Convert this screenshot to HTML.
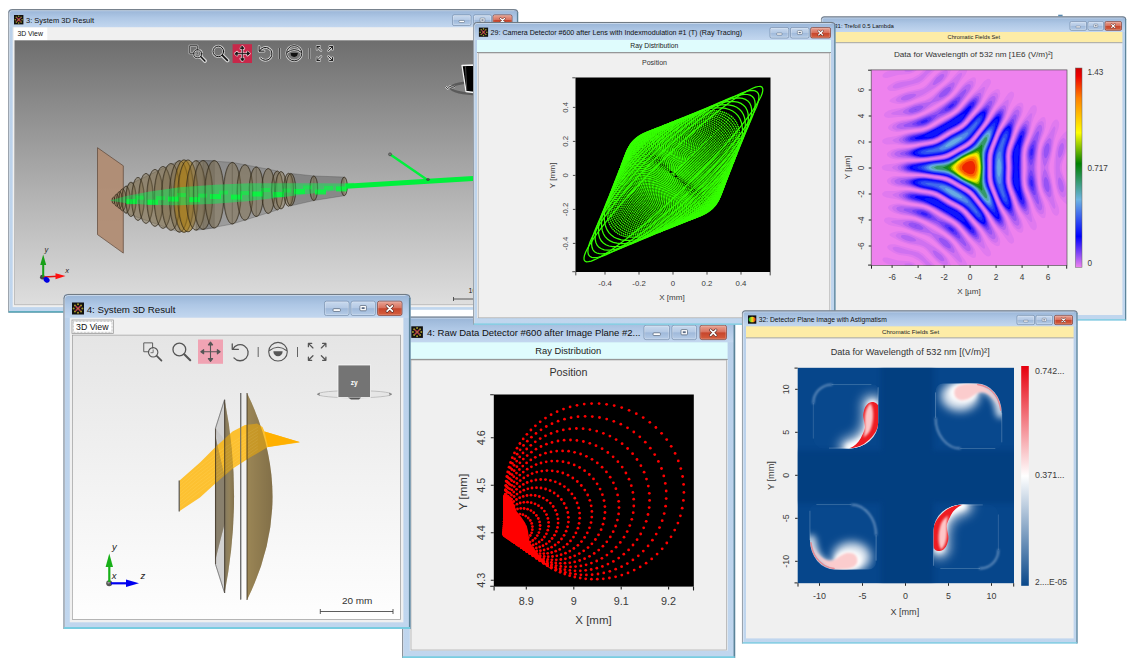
<!DOCTYPE html>
<html><head><meta charset="utf-8"><title>Optical simulation results</title>
<style>html,body{margin:0;padding:0;background:#fff;overflow:hidden}svg{display:block}text{font-family:"Liberation Sans",sans-serif}</style>
</head><body>
<svg width="1134" height="666" viewBox="0 0 1134 666" font-family="Liberation Sans, sans-serif">
<defs>
<filter id="sh" x="-10%" y="-10%" width="120%" height="120%"><feGaussianBlur stdDeviation="2.2"/></filter>
<filter id="b07" x="-1" y="-1" width="3" height="3"><feGaussianBlur stdDeviation="0.7"/></filter>
<filter id="b04" x="-1" y="-1" width="3" height="3"><feGaussianBlur stdDeviation="0.4"/></filter>
<filter id="b1" x="-1" y="-1" width="3" height="3"><feGaussianBlur stdDeviation="1"/></filter>
<filter id="b2" x="-1" y="-1" width="3" height="3"><feGaussianBlur stdDeviation="2"/></filter>
<filter id="b3" x="-1" y="-1" width="3" height="3"><feGaussianBlur stdDeviation="3.2"/></filter>
<filter id="b5" x="-1" y="-1" width="3" height="3"><feGaussianBlur stdDeviation="5"/></filter>
<linearGradient id="icg" x1="0" y1="0" x2="1" y2="0"><stop offset="0" stop-color="#10b020"/><stop offset="0.5" stop-color="#f0e020"/><stop offset="1" stop-color="#e82010"/></linearGradient>
<linearGradient id="glass" x1="0" y1="0" x2="0" y2="1"><stop offset="0" stop-color="#b9d0ea"/><stop offset="1" stop-color="#c0d6ee"/></linearGradient>
<linearGradient id="tg" x1="0" y1="0" x2="0" y2="1"><stop offset="0" stop-color="#98b4d6"/><stop offset="0.45" stop-color="#aec7e5"/><stop offset="1" stop-color="#c3d7ef"/></linearGradient>
<linearGradient id="btn" x1="0" y1="0" x2="0" y2="1"><stop offset="0" stop-color="#c9daef"/><stop offset="0.48" stop-color="#b4c9e4"/><stop offset="0.52" stop-color="#9fb9da"/><stop offset="1" stop-color="#b7cde8"/></linearGradient>
<linearGradient id="cls" x1="0" y1="0" x2="0" y2="1"><stop offset="0" stop-color="#e9a596"/><stop offset="0.48" stop-color="#d8705c"/><stop offset="0.52" stop-color="#c6452c"/><stop offset="1" stop-color="#d6603f"/></linearGradient>
<linearGradient id="v1" x1="0" y1="0" x2="0" y2="1"><stop offset="0" stop-color="#6e6e6e"/><stop offset="0.25" stop-color="#8c8c8c"/><stop offset="0.6" stop-color="#b4b4b4"/><stop offset="1" stop-color="#dedede"/></linearGradient>
<linearGradient id="v2" x1="0" y1="0" x2="0" y2="1"><stop offset="0" stop-color="#e5e5e5"/><stop offset="0.5" stop-color="#f2f2f2"/><stop offset="1" stop-color="#fefefe"/></linearGradient>
</defs>
<path d="M8.2 312.4 V12.2 a3 3 0 0 1 3 -3 H515.2 a3 3 0 0 1 3 3 V312.4 z" fill="url(#glass)"/>
<path d="M8.7 27.2 V12.6 a3 3 0 0 1 3 -3 H514.6 a3 3 0 0 1 3 3 V27.2 z" fill="url(#tg)"/>
<path d="M9.4 310.9 V13.2 a2.5 2.5 0 0 1 2.5 -2.5 H514.2" fill="none" stroke="#fff" stroke-opacity=".55" stroke-width=".8"/>
<path d="M8.65 12.65 a3 3 0 0 1 3 -3 H514.75 a3 3 0 0 1 3 3" fill="none" stroke="#686d74" stroke-width="0.9"/>
<path d="M8.65 12.2 V312.4" stroke="#8d939a" stroke-width="0.9" fill="none"/>
<path d="M517.55 12.2 V312.4" stroke="#5b8398" stroke-width="1.3" fill="none"/>
<path d="M8.7 311.7 H517.7" stroke="#78cce0" stroke-width="1.4" fill="none"/>
<line x1="8.5" y1="312.05" x2="517.9" y2="312.05" stroke="#2d6573" stroke-width="0.7" />
<rect x="14" y="15" width="9.4" height="9.4" fill="#111" />
<circle cx="22.08" cy="19.7" r="0.8" fill="#a89a2c"/>
<circle cx="21.09" cy="22.09" r="0.8" fill="#a89a2c"/>
<circle cx="18.7" cy="23.08" r="0.8" fill="#a89a2c"/>
<circle cx="16.31" cy="22.09" r="0.8" fill="#a89a2c"/>
<circle cx="15.32" cy="19.7" r="0.8" fill="#a89a2c"/>
<circle cx="16.31" cy="17.31" r="0.8" fill="#a89a2c"/>
<circle cx="18.7" cy="16.32" r="0.8" fill="#a89a2c"/>
<circle cx="21.09" cy="17.31" r="0.8" fill="#a89a2c"/>
<path d="M16.82 17.82L20.58 21.58M20.58 17.82L16.82 21.58" stroke="#b03a48" stroke-width="1.32"/>
<circle cx="18.7" cy="19.7" r="0.66" fill="#a89a2c"/>
<text x="26" y="23.3" font-size="7.6" fill="#111" textLength="68" lengthAdjust="spacingAndGlyphs" >3: System 3D Result</text>
<rect x="452.5" y="14.9" width="18.5" height="10.6" rx="1.6" fill="url(#btn)" stroke="#6f87a6" stroke-width="0.7"/>
<rect x="453.2" y="15.6" width="17.1" height="9.2" rx="1.12" fill="none" stroke="#fff" stroke-opacity=".6" stroke-width="0.5"/>
<rect x="459.03" y="20.45" width="5.44" height="2.04" rx="0.68" fill="#fff" stroke="#4a5a70" stroke-width="0.51"/>
<rect x="473.5" y="14.9" width="18" height="10.6" rx="1.6" fill="url(#btn)" stroke="#6f87a6" stroke-width="0.7"/>
<rect x="474.2" y="15.6" width="16.6" height="9.2" rx="1.12" fill="none" stroke="#fff" stroke-opacity=".6" stroke-width="0.5"/>
<rect x="480.12" y="18.07" width="4.76" height="3.91" rx="0.68" fill="#fff" stroke="#4a5a70" stroke-width="0.51"/>
<rect x="481.39" y="19.35" width="2.21" height="1.36" fill="#5a6a85"/>
<rect x="493" y="14.9" width="19" height="10.6" rx="1.6" fill="url(#cls)" stroke="#7a3a30" stroke-width="0.7"/>
<rect x="493.7" y="15.6" width="17.6" height="9.2" rx="1.12" fill="none" stroke="#fff" stroke-opacity=".45" stroke-width="0.5"/>
<path d="M500.55 18.45L504.45 22.35M504.45 18.45L500.55 22.35" stroke="#5a2a25" stroke-width="2.21" stroke-linecap="round"/>
<path d="M500.55 18.45L504.45 22.35M504.45 18.45L500.55 22.35" stroke="#fff" stroke-width="1.27" stroke-linecap="round"/>
<rect x="12.7" y="27.2" width="501" height="279.9" fill="#f0f0f0" />
<rect x="14" y="27.6" width="33.3" height="13.2" fill="#fff" />
<text x="17.4" y="36.1" font-size="7" fill="#111" textLength="25.5" lengthAdjust="spacingAndGlyphs" >3D View</text>
<rect x="14.4" y="40.2" width="497.7" height="264.9" fill="#9a9a9a" />
<rect x="14.9" y="40.7" width="496.7" height="263.9" fill="url(#v1)" />
<clipPath id="c1"><rect x="14.9" y="40.7" width="496.7" height="263.9"/></clipPath><g clip-path="url(#c1)">
<path d="M97.5 147.7L123.3 165.8V253.1L97.5 234.6z" fill="#b08c72" fill-opacity=".93" stroke="#5c4536" stroke-width="0.7"/>
<path d="M196 160.6L214.3 160.49L214.3 228.09L196 230.2z" fill="#6a6a6a" fill-opacity="0.5" stroke="#3c3c3c" stroke-opacity=".55" stroke-width="0.5"/>
<path d="M203 160.47L232.3 162.4L232.3 224L203 229.47z" fill="#6a6a6a" fill-opacity="0.4" stroke="#3c3c3c" stroke-opacity=".55" stroke-width="0.5"/>
<path d="M232.3 162.4L256.3 166.94L256.3 216.54L232.3 224z" fill="#6a6a6a" fill-opacity="0.4" stroke="#3c3c3c" stroke-opacity=".55" stroke-width="0.5"/>
<path d="M256.3 166.94L277.3 170.97L277.3 209.97L256.3 216.54z" fill="#6a6a6a" fill-opacity="0.4" stroke="#3c3c3c" stroke-opacity=".55" stroke-width="0.5"/>
<path d="M290.8 173.45L313.8 175.95L313.8 200.55L290.8 205.85z" fill="#666" fill-opacity="0.55" stroke="#3c3c3c" stroke-opacity=".55" stroke-width="0.5"/>
<path d="M313.8 175.95L344.2 177.11L344.2 195.71L313.8 200.55z" fill="#666" fill-opacity="0.55" stroke="#3c3c3c" stroke-opacity=".55" stroke-width="0.5"/>
<path d="M126 186.04L179.5 160.6L179.5 232.2L126 213.24z" fill="#7a6a4a" fill-opacity="0.3" stroke="#3c3c3c" stroke-opacity=".55" stroke-width="0.5"/>
<ellipse cx="113.5" cy="200.4" rx="1.46" ry="3.2" fill="#7e6e4a" fill-opacity="0.46" stroke="#2a2215" stroke-opacity=".9" stroke-width="0.65"/>
<ellipse cx="116.5" cy="200.22" rx="2.22" ry="6" fill="#7e6e4a" fill-opacity="0.46" stroke="#2a2215" stroke-opacity=".9" stroke-width="0.65"/>
<ellipse cx="119.5" cy="200.04" rx="2.9" ry="8.5" fill="#7e6e4a" fill-opacity="0.46" stroke="#2a2215" stroke-opacity=".9" stroke-width="0.65"/>
<ellipse cx="122.5" cy="199.85" rx="3.57" ry="11" fill="#7e6e4a" fill-opacity="0.46" stroke="#2a2215" stroke-opacity=".9" stroke-width="0.65"/>
<ellipse cx="126" cy="199.64" rx="4.27" ry="13.6" fill="#7e6e4a" fill-opacity="0.46" stroke="#2a2215" stroke-opacity=".9" stroke-width="0.65"/>
<ellipse cx="131" cy="199.34" rx="5.27" ry="17.3" fill="#7e6e4a" fill-opacity="0.46" stroke="#2a2215" stroke-opacity=".9" stroke-width="0.65"/>
<ellipse cx="138" cy="198.91" rx="6.41" ry="21.5" fill="#7e6e4a" fill-opacity="0.46" stroke="#2a2215" stroke-opacity=".9" stroke-width="0.65"/>
<ellipse cx="146" cy="198.43" rx="7.35" ry="25" fill="#7e6e4a" fill-opacity="0.46" stroke="#2a2215" stroke-opacity=".9" stroke-width="0.65"/>
<ellipse cx="155" cy="197.88" rx="8.29" ry="28.5" fill="#7e6e4a" fill-opacity="0.46" stroke="#2a2215" stroke-opacity=".9" stroke-width="0.65"/>
<ellipse cx="163" cy="197.4" rx="8.97" ry="31" fill="#7e6e4a" fill-opacity="0.46" stroke="#2a2215" stroke-opacity=".9" stroke-width="0.65"/>
<ellipse cx="171" cy="196.91" rx="9.64" ry="33.5" fill="#7e6e4a" fill-opacity="0.46" stroke="#2a2215" stroke-opacity=".9" stroke-width="0.65"/>
<ellipse cx="179.5" cy="196.4" rx="10.27" ry="35.8" fill="#7e6e4a" fill-opacity="0.46" stroke="#2a2215" stroke-opacity=".9" stroke-width="0.65"/>
<ellipse cx="184" cy="196.12" rx="10.4" ry="36.3" fill="#a67c1c" fill-opacity="0.62" stroke="#2a2215" stroke-opacity=".9" stroke-width="0.65"/>
<ellipse cx="188" cy="195.88" rx="10.32" ry="36" fill="#a67c1c" fill-opacity="0.62" stroke="#2a2215" stroke-opacity=".9" stroke-width="0.65"/>
<ellipse cx="196" cy="195.4" rx="10" ry="34.8" fill="#7e6e4a" fill-opacity="0.46" stroke="#2a2215" stroke-opacity=".9" stroke-width="0.65"/>
<ellipse cx="203" cy="194.97" rx="9.92" ry="34.5" fill="#7e6e4a" fill-opacity="0.46" stroke="#2a2215" stroke-opacity=".9" stroke-width="0.65"/>
<ellipse cx="214.3" cy="194.29" rx="9.73" ry="33.8" fill="#7e6e4a" fill-opacity="0.46" stroke="#2a2215" stroke-opacity=".9" stroke-width="0.65"/>
<ellipse cx="232.3" cy="193.2" rx="8.92" ry="30.8" fill="#7e6e4a" fill-opacity="0.46" stroke="#2a2215" stroke-opacity=".9" stroke-width="0.65"/>
<ellipse cx="245" cy="192.43" rx="8.11" ry="27.8" fill="#7e6e4a" fill-opacity="0.46" stroke="#2a2215" stroke-opacity=".9" stroke-width="0.65"/>
<ellipse cx="256.3" cy="191.74" rx="7.3" ry="24.8" fill="#7e6e4a" fill-opacity="0.46" stroke="#2a2215" stroke-opacity=".9" stroke-width="0.65"/>
<ellipse cx="268.3" cy="191.01" rx="6.67" ry="22.5" fill="#7e6e4a" fill-opacity="0.46" stroke="#2a2215" stroke-opacity=".9" stroke-width="0.65"/>
<ellipse cx="277.3" cy="190.47" rx="5.87" ry="19.5" fill="#7e6e4a" fill-opacity="0.46" stroke="#2a2215" stroke-opacity=".9" stroke-width="0.65"/>
<ellipse cx="281" cy="190.24" rx="5.68" ry="18.8" fill="#7e6e4a" fill-opacity="0.46" stroke="#2a2215" stroke-opacity=".9" stroke-width="0.65"/>
<ellipse cx="288.6" cy="189.78" rx="5.05" ry="16.5" fill="#7e6e4a" fill-opacity="0.46" stroke="#2a2215" stroke-opacity=".9" stroke-width="0.65"/>
<ellipse cx="290.8" cy="189.65" rx="4.97" ry="16.2" fill="#7e6e4a" fill-opacity="0.46" stroke="#2a2215" stroke-opacity=".9" stroke-width="0.65"/>
<ellipse cx="313.8" cy="188.25" rx="3.92" ry="12.3" fill="#7e6e4a" fill-opacity="0.46" stroke="#2a2215" stroke-opacity=".9" stroke-width="0.65"/>
<ellipse cx="344.2" cy="186.41" rx="3.11" ry="9.3" fill="#7e6e4a" fill-opacity="0.46" stroke="#2a2215" stroke-opacity=".9" stroke-width="0.65"/>
<path d="M110.2 200.4 125 196.3 150 191.39 180 187.37 215 184.74 250 183.32 290 183.2 320 183.28 346 183.4 L346 189.2 320 192.48 290 196.2 250 200.92 215 203.74 180 205.37 150 204.99 125 203.1 110.2 200.8 z" fill="#22dc5c" fill-opacity=".6"/>
<rect x="126" y="199.14" width="11" height="5" fill="#00ff3c" fill-opacity=".8"/>
<rect x="135" y="195.64" width="9" height="4" fill="#00ff3c" fill-opacity=".5"/>
<rect x="147" y="199.67" width="11" height="5" fill="#00ff3c" fill-opacity=".8"/>
<rect x="156" y="196.17" width="9" height="4" fill="#00ff3c" fill-opacity=".5"/>
<rect x="168" y="196.59" width="11" height="5" fill="#00ff3c" fill-opacity=".8"/>
<rect x="177" y="193.09" width="9" height="4" fill="#00ff3c" fill-opacity=".5"/>
<rect x="189" y="197.12" width="11" height="5" fill="#00ff3c" fill-opacity=".8"/>
<rect x="198" y="193.62" width="9" height="4" fill="#00ff3c" fill-opacity=".5"/>
<rect x="210" y="194.05" width="11" height="5" fill="#00ff3c" fill-opacity=".8"/>
<rect x="219" y="190.55" width="9" height="4" fill="#00ff3c" fill-opacity=".5"/>
<rect x="231" y="194.57" width="11" height="5" fill="#00ff3c" fill-opacity=".8"/>
<rect x="240" y="191.07" width="9" height="4" fill="#00ff3c" fill-opacity=".5"/>
<rect x="252" y="191.5" width="11" height="5" fill="#00ff3c" fill-opacity=".8"/>
<rect x="261" y="188" width="9" height="4" fill="#00ff3c" fill-opacity=".5"/>
<rect x="273" y="192.03" width="11" height="5" fill="#00ff3c" fill-opacity=".8"/>
<rect x="282" y="188.53" width="9" height="4" fill="#00ff3c" fill-opacity=".5"/>
<rect x="294" y="188.95" width="11" height="5" fill="#00ff3c" fill-opacity=".8"/>
<rect x="303" y="185.45" width="9" height="4" fill="#00ff3c" fill-opacity=".5"/>
<rect x="315" y="189.48" width="11" height="5" fill="#00ff3c" fill-opacity=".8"/>
<rect x="324" y="185.98" width="9" height="4" fill="#00ff3c" fill-opacity=".5"/>
<rect x="336" y="186.41" width="11" height="5" fill="#00ff3c" fill-opacity=".8"/>
<rect x="345" y="182.91" width="9" height="4" fill="#00ff3c" fill-opacity=".5"/>
<ellipse cx="113.5" cy="200.4" rx="1.4" ry="3.2" fill="none" stroke="#2a2215" stroke-opacity=".45" stroke-width="0.5"/>
<ellipse cx="116.5" cy="200.22" rx="2.1" ry="6" fill="none" stroke="#2a2215" stroke-opacity=".45" stroke-width="0.5"/>
<ellipse cx="119.5" cy="200.04" rx="2.73" ry="8.5" fill="none" stroke="#2a2215" stroke-opacity=".45" stroke-width="0.5"/>
<ellipse cx="122.5" cy="199.85" rx="3.35" ry="11" fill="none" stroke="#2a2215" stroke-opacity=".45" stroke-width="0.5"/>
<ellipse cx="126" cy="199.64" rx="4" ry="13.6" fill="none" stroke="#2a2215" stroke-opacity=".45" stroke-width="0.5"/>
<ellipse cx="131" cy="199.34" rx="4.92" ry="17.3" fill="none" stroke="#2a2215" stroke-opacity=".45" stroke-width="0.5"/>
<ellipse cx="138" cy="198.91" rx="5.97" ry="21.5" fill="none" stroke="#2a2215" stroke-opacity=".45" stroke-width="0.5"/>
<ellipse cx="146" cy="198.43" rx="6.85" ry="25" fill="none" stroke="#2a2215" stroke-opacity=".45" stroke-width="0.5"/>
<ellipse cx="155" cy="197.88" rx="7.72" ry="28.5" fill="none" stroke="#2a2215" stroke-opacity=".45" stroke-width="0.5"/>
<ellipse cx="163" cy="197.4" rx="8.35" ry="31" fill="none" stroke="#2a2215" stroke-opacity=".45" stroke-width="0.5"/>
<ellipse cx="171" cy="196.91" rx="8.97" ry="33.5" fill="none" stroke="#2a2215" stroke-opacity=".45" stroke-width="0.5"/>
<ellipse cx="179.5" cy="196.4" rx="9.55" ry="35.8" fill="none" stroke="#2a2215" stroke-opacity=".45" stroke-width="0.5"/>
<ellipse cx="184" cy="196.12" rx="9.67" ry="36.3" fill="none" stroke="#2a2215" stroke-opacity=".45" stroke-width="0.5"/>
<ellipse cx="188" cy="195.88" rx="9.6" ry="36" fill="none" stroke="#2a2215" stroke-opacity=".45" stroke-width="0.5"/>
<ellipse cx="196" cy="195.4" rx="9.3" ry="34.8" fill="none" stroke="#2a2215" stroke-opacity=".45" stroke-width="0.5"/>
<ellipse cx="203" cy="194.97" rx="9.22" ry="34.5" fill="none" stroke="#2a2215" stroke-opacity=".45" stroke-width="0.5"/>
<ellipse cx="214.3" cy="194.29" rx="9.05" ry="33.8" fill="none" stroke="#2a2215" stroke-opacity=".45" stroke-width="0.5"/>
<ellipse cx="232.3" cy="193.2" rx="8.3" ry="30.8" fill="none" stroke="#2a2215" stroke-opacity=".45" stroke-width="0.5"/>
<ellipse cx="245" cy="192.43" rx="7.55" ry="27.8" fill="none" stroke="#2a2215" stroke-opacity=".45" stroke-width="0.5"/>
<ellipse cx="256.3" cy="191.74" rx="6.8" ry="24.8" fill="none" stroke="#2a2215" stroke-opacity=".45" stroke-width="0.5"/>
<ellipse cx="268.3" cy="191.01" rx="6.22" ry="22.5" fill="none" stroke="#2a2215" stroke-opacity=".45" stroke-width="0.5"/>
<ellipse cx="277.3" cy="190.47" rx="5.47" ry="19.5" fill="none" stroke="#2a2215" stroke-opacity=".45" stroke-width="0.5"/>
<ellipse cx="281" cy="190.24" rx="5.3" ry="18.8" fill="none" stroke="#2a2215" stroke-opacity=".45" stroke-width="0.5"/>
<ellipse cx="288.6" cy="189.78" rx="4.72" ry="16.5" fill="none" stroke="#2a2215" stroke-opacity=".45" stroke-width="0.5"/>
<ellipse cx="290.8" cy="189.65" rx="4.65" ry="16.2" fill="none" stroke="#2a2215" stroke-opacity=".45" stroke-width="0.5"/>
<ellipse cx="313.8" cy="188.25" rx="3.68" ry="12.3" fill="none" stroke="#2a2215" stroke-opacity=".45" stroke-width="0.5"/>
<ellipse cx="344.2" cy="186.41" rx="2.93" ry="9.3" fill="none" stroke="#2a2215" stroke-opacity=".45" stroke-width="0.5"/>
<path d="M346 186.3 L473 178.6" stroke="#00f03c" stroke-width="5" />
<path d="M390.3 154.5 L427.5 180" stroke="#00f03c" stroke-width="2.4" stroke-linecap="round"/>
<circle cx="390" cy="154.3" r="1.5" fill="#777" stroke="#333" stroke-width=".5"/>
<ellipse cx="428" cy="179.6" rx="1.6" ry="1" fill="#555" stroke="#222" stroke-width=".4"/>
<ellipse cx="478" cy="88" rx="27" ry="6" fill="none" stroke="#5a5a5a" stroke-width="2.4" filter="url(#b07)"/>
<path d="M462 65.5 L474 65 V92.5 L466 91.5 z" fill="#000" stroke="#f4f4f4" stroke-width="1.3" stroke-linejoin="round"/>
<path d="M465.5 66.5 L466.8 90.8" stroke="#666" stroke-width=".7"/>
<path d="M445.5 86.5 l2.2 2.2 l2.4 -2.6 l2.2 1.6 l2.6 -1.4" fill="none" stroke="#eee" stroke-width="1.8" opacity=".8"/><path d="M445.5 86.5 l2.2 2.2 l2.4 -2.6 l2.2 1.6 l2.6 -1.4" fill="none" stroke="#111" stroke-width=".8"/>
<circle cx="42.4" cy="277.2" r="2.4" fill="#444"/>
<path d="M43.2 277 V264" stroke="#18a018" stroke-width="2"/><path d="M43.2 254.6 L46.2 265 H40.2z" fill="#18a018"/>
<path d="M44 277 L58 276.3" stroke="#e01010" stroke-width="1.6"/><path d="M65.5 276 L55.5 273.2 V279.3z" fill="#ff1010"/>
<ellipse cx="46.6" cy="279.8" rx="3.2" ry="2.6" fill="#0000e0" transform="rotate(35 46.6 279.8)"/>
<text x="44.5" y="252" font-size="7.5" fill="#222" font-family="Liberation Serif, serif" font-style="italic">y</text>
<text x="65.3" y="272.8" font-size="7.5" fill="#222" font-family="Liberation Serif, serif" font-style="italic">x</text>
<text x="468.6" y="292.6" font-size="7" fill="#222" >10 mm</text>
<path d="M453.5 297v4M453.5 299H520" stroke="#333" stroke-width=".8" fill="none"/>
</g>
<g fill="none" stroke="#f2f2f2" stroke-width="2.5" stroke-linecap="round" stroke-linejoin="round" opacity="0.75">
<path d="M194.06 53.3 H189.69 V45.69 H197.3 V50.06" stroke-width="2.12"/>
<circle cx="197.79" cy="53.79" r="4.05"/>
<path d="M200.86 56.86 L204.91 60.91" stroke-width="4"/>
<path d="M197.79 51.68 V54.11 H195.84" stroke-width="1.75"/>
</g>
<g fill="none" stroke="#111" stroke-width="0.9" stroke-linecap="round" stroke-linejoin="round" opacity="1">
<path d="M194.06 53.3 H189.69 V45.69 H197.3 V50.06" stroke-width="0.77"/>
<circle cx="197.79" cy="53.79" r="4.05"/>
<path d="M200.86 56.86 L204.91 60.91" stroke-width="1.44"/>
<path d="M197.79 51.68 V54.11 H195.84" stroke-width="0.63"/>
</g>
<g fill="none" stroke="#f2f2f2" stroke-width="2.6" stroke-linecap="round" opacity="0.75">
<circle cx="218.33" cy="51.39" r="5.3"/>
<path d="M222.38 55.42 L227.38 60.38" stroke-width="4.16"/>
</g>
<g fill="none" stroke="#111" stroke-width="1" stroke-linecap="round" opacity="1">
<circle cx="218.33" cy="51.39" r="5.3"/>
<path d="M222.38 55.42 L227.38 60.38" stroke-width="1.6"/>
</g>
<rect x="232.6" y="44.2" width="19.4" height="18.8" fill="#c8284a" />
<g stroke="#f2f2f2" stroke-width="2.4" stroke-linecap="round" stroke-linejoin="round" fill="#f2f2f2" opacity="0.8">
<path d="M236.68 53.6H247.92M242.3 47.98V59.22" fill="none"/>
<path d="M249.5 53.6L247.44 55.18L247.44 52.02z"/>
<path d="M235.1 53.6L237.16 52.02L237.16 55.18z"/>
<path d="M242.3 60.8L240.72 58.74L243.88 58.74z"/>
<path d="M242.3 46.4L243.88 48.46L240.72 48.46z"/>
</g>
<g stroke="#111" stroke-width="0.9" stroke-linecap="round" stroke-linejoin="round" fill="#111" opacity="1">
<path d="M236.68 53.6H247.92M242.3 47.98V59.22" fill="none"/>
<path d="M249.5 53.6L247.44 55.18L247.44 52.02z"/>
<path d="M235.1 53.6L237.16 52.02L237.16 55.18z"/>
<path d="M242.3 60.8L240.72 58.74L243.88 58.74z"/>
<path d="M242.3 46.4L243.88 48.46L240.72 48.46z"/>
</g>
<g fill="none" stroke="#f2f2f2" stroke-width="2.6" stroke-linecap="round" stroke-linejoin="round" opacity="0.75">
<path d="M259.57 51.13 A6.49 6.49 0 1 1 260.48 58.04"/>
<path d="M259.12 46.48 V51.13 H264.1"/>
</g>
<g fill="none" stroke="#111" stroke-width="1" stroke-linecap="round" stroke-linejoin="round" opacity="1">
<path d="M259.57 51.13 A6.49 6.49 0 1 1 260.48 58.04"/>
<path d="M259.12 46.48 V51.13 H264.1"/>
</g>
<line x1="279.4" y1="48" x2="279.4" y2="59" stroke="#111" stroke-width="0.8" />
<line x1="279.4" y1="48" x2="279.4" y2="59" stroke="#f2f2f2" stroke-width="2.2" opacity=".6"/>
<line x1="279.4" y1="48" x2="279.4" y2="59" stroke="#222" stroke-width="0.8" />
<g fill="none" stroke="#f2f2f2" stroke-width="2.4" opacity="0.75">
<circle cx="294.2" cy="53.2" r="7.6"/>
<path d="M286.98 52.44 Q294.2 46.74 301.42 52.44"/>
<path d="M290.4 52.82 A3.8 4.18 0 0 0 298 52.82 z" fill="#f2f2f2" stroke="none"/>
</g>
<g fill="none" stroke="#111" stroke-width="0.9" opacity="1">
<circle cx="294.2" cy="53.2" r="7.6"/>
<path d="M286.98 52.44 Q294.2 46.74 301.42 52.44"/>
<path d="M290.4 52.82 A3.8 4.18 0 0 0 298 52.82 z" fill="#111" stroke="none"/>
</g>
<line x1="309.3" y1="48" x2="309.3" y2="59" stroke="#f2f2f2" stroke-width="2.2" opacity=".6"/>
<line x1="309.3" y1="48" x2="309.3" y2="59" stroke="#222" stroke-width="0.8" />
<g fill="none" stroke="#f2f2f2" stroke-width="2.4" stroke-linecap="round" stroke-linejoin="round" opacity="0.75">
<path d="M321.03 50.53L317 46.5M319.9 46.5H317V49.4"/>
<path d="M328.47 50.53L332.5 46.5M329.6 46.5H332.5V49.4"/>
<path d="M321.03 56.47L317 60.5M319.9 60.5H317V57.6"/>
<path d="M328.47 56.47L332.5 60.5M329.6 60.5H332.5V57.6"/>
</g>
<g fill="none" stroke="#111" stroke-width="0.9" stroke-linecap="round" stroke-linejoin="round" opacity="1">
<path d="M321.03 50.53L317 46.5M319.9 46.5H317V49.4"/>
<path d="M328.47 50.53L332.5 46.5M329.6 46.5H332.5V49.4"/>
<path d="M321.03 56.47L317 60.5M319.9 60.5H317V57.6"/>
<path d="M328.47 56.47L332.5 60.5M329.6 60.5H332.5V57.6"/>
</g>
<path d="M821 320.4 V18.9 a2.5 2.5 0 0 1 2.5 -2.5 H1123.7 a2.5 2.5 0 0 1 2.5 2.5 V320.4 z" fill="url(#glass)"/>
<path d="M821.5 32 V19.3 a2.5 2.5 0 0 1 2.5 -2.5 H1123.1 a2.5 2.5 0 0 1 2.5 2.5 V32 z" fill="url(#tg)"/>
<path d="M822.2 318.9 V19.9 a2 2 0 0 1 2 -2 H1122.7" fill="none" stroke="#fff" stroke-opacity=".55" stroke-width=".8"/>
<path d="M821.45 19.35 a2.5 2.5 0 0 1 2.5 -2.5 H1123.25 a2.5 2.5 0 0 1 2.5 2.5" fill="none" stroke="#686d74" stroke-width="0.9"/>
<path d="M821.4 18.9 V320.4" stroke="#8d939a" stroke-width="0.81" fill="none"/>
<path d="M1125.62 18.9 V320.4" stroke="#5b8398" stroke-width="1.17" fill="none"/>
<path d="M821.5 319.77 H1125.7" stroke="#78cce0" stroke-width="1.26" fill="none"/>
<text x="834.3" y="28.2" font-size="6.1" fill="#111" textLength="59.5" lengthAdjust="spacingAndGlyphs" >31: Trefoil 0.5 Lambda</text>
<rect x="1070" y="21.5" width="16.5" height="8.8" rx="1.4" fill="url(#btn)" stroke="#6f87a6" stroke-width="0.7"/>
<rect x="1070.7" y="22.2" width="15.1" height="7.4" rx="0.98" fill="none" stroke="#fff" stroke-opacity=".6" stroke-width="0.5"/>
<rect x="1076.01" y="26.11" width="4.48" height="1.68" rx="0.56" fill="#fff" stroke="#4a5a70" stroke-width="0.42"/>
<rect x="1088" y="21.5" width="15.5" height="8.8" rx="1.4" fill="url(#btn)" stroke="#6f87a6" stroke-width="0.7"/>
<rect x="1088.7" y="22.2" width="14.1" height="7.4" rx="0.98" fill="none" stroke="#fff" stroke-opacity=".6" stroke-width="0.5"/>
<rect x="1093.79" y="24.15" width="3.92" height="3.22" rx="0.56" fill="#fff" stroke="#4a5a70" stroke-width="0.42"/>
<rect x="1094.84" y="25.2" width="1.82" height="1.12" fill="#5a6a85"/>
<rect x="1105" y="21.5" width="16.5" height="8.8" rx="1.4" fill="url(#cls)" stroke="#7a3a30" stroke-width="0.7"/>
<rect x="1105.7" y="22.2" width="15.1" height="7.4" rx="0.98" fill="none" stroke="#fff" stroke-opacity=".45" stroke-width="0.5"/>
<path d="M1111.64 24.49L1114.86 27.71M1114.86 24.49L1111.64 27.71" stroke="#5a2a25" stroke-width="1.82" stroke-linecap="round"/>
<path d="M1111.64 24.49L1114.86 27.71M1114.86 24.49L1111.64 27.71" stroke="#fff" stroke-width="1.05" stroke-linecap="round"/>
<rect x="825" y="32" width="297.4" height="10.6" fill="#fdeca6" />
<rect x="825" y="42.6" width="297.4" height="272.4" fill="#f0f0f0" />
<line x1="825" y1="42.7" x2="1122.4" y2="42.7" stroke="#8a8a8a" stroke-width="0.7" />
<text x="973.8" y="38.8" font-size="5.8" fill="#222" text-anchor="middle" textLength="52.5" lengthAdjust="spacingAndGlyphs" >Chromatic Fields Set</text>
<text x="973.4" y="57.2" font-size="8.1" fill="#333" text-anchor="middle" textLength="159" lengthAdjust="spacingAndGlyphs" >Data for Wavelength of 532 nm  [1E6 (V/m)²]</text>
<rect x="1058.2" y="14.7" width="4.4" height="1.6" fill="#5a8ab0" />
<g filter="url(#b07)">
<rect x="871.2" y="69.9" width="195.8" height="195.5" fill="#ee82ee"/>
<path fill="#e07aef" d="M882.4 76.2l0.4-1.6 1.5-1.5 2.7-1.6 3.1-0.8 6.4-0.8 20.5 0-3.2 2.4-4.7 1.7-11.1 0.9-11 3-3.2-0.1zM935 69.9l-11.7 11.6-4.7 2.9-23.7 6.6-3.2 0.1-1.6-0.2-1.5-0.6-1.4-1.5 0.2-1.6 1.3-1.5 4.6-3 3.2-1.4 3.1-0.9 7.4-1 5.8-1.6 5.9-3.2 3-2.6 2-2.1zM951 69.9l-1.7 4.7-2 3.2-2.7 3.1-3.9 3.6-11.1 8.3-4.7 2.9-15.8 6.5-6.3 1.6-3.2 0.2-3.1-0.2-3.4-0.8-3.6-1.6 0.3-1.5 2.2-1.6 7.6-4 7.9-2.9 12.2-2.6 3.5-1.6 3.3-2.5 9.4-10.3 5.8-4.5zM967.2 69.9l-0.2 1.6-1.5 3.1-5.9 7.9-5 7.9-4 4.7-6.8 5.3-10.3 5.8-8.6 5.2-7.9 3.6-6.3 1.5-12.7 0.4-9.4 1.1-3.2-0.7-1.5-1.7 0.2-1.6 1.2-1.5 3.3-2 3.1-0.9 10.1-1.9 15.2-5.5 8.2-2.3 3.4-1.6 4.2-3 7.9-7.2 8.6-7.2 10-11zM975.4 77.8l0.6 1.6-0.1 3.1-0.9 3.2-1.7 3.1-14.8 18.9-2 2-4.8 3.6-10.8 5.5-11.3 7.2-2 0.7-1.1 0.8-3.5 0.7-1.3 0.7-9.6 0.9-12.5 2-3.1 0.1-4.8-1-2.4-1.1-1.3-1.6 0.2-1.5 1.5-1.6 3.6-2.3 3.2-1.3 6.3-1.5 8.7-1.2 5.5-1.6 7.7-3.2 9.5-4.7 9.8-6.3 6.3-4.7 6.2-6 6.3-7.8 4.7-4.3 4.8-2.6 1.5-0.4zM988 78.8l1.6 0.2 0.5 0.4 0.9 1.5-0.1 1.6-0.4 1.6-4 6.9-5.5 12-3.3 4.7-5.4 6.3-1.1 1.6 1.1 0.4 4.7-5.1 6.3-7.7 5.5-8.1 2.4-2.5 1.6-1.3 3.1-1.8 1.6-0.4 1.6 0.4 0.7 0.9 0.5 3.1-0.5 3.2-1.9 4.7-6.7 11.1-0.5 1.5-1.1 1.6-0.5 1.6-1.1 1.4-0.5 1.8 0.5 0.7 5.3-8.6 3.6-4.8 5.6-6.3 5.7-7.9 2-1.5 1.5-0.4 1.6 0.7 0.7 1.2 0.1 1.6-0.3 1.6-3.6 8.1-4.3 12.4-1.5 3.2-2.1 3.3-0.5 1.4-1.1 1.4-0.5 1.7 0.5 1 2.2-4.1 4.1-6 4.3-8.2 2-3 1.6-1.8 3.1-2.7 1.6-0.7 1.6-0.3 1.6 1.2 0.4 1 0.3 3.1-0.4 3.2-1.4 4.7-3.7 7.3-0.7 2.2-0.8 1.4-0.9 3.3-0.7 1.1-0.7 3.6 0.7 1.3 0.6-2.8 1-1.4 0.4-1.8 3.5-6.3 5.6-7.9 4.7-8.3 1.6-1.6 1.5-0.7 1.6 0.3 0.8 0.9 0.6 1.5 0.1 1.6-0.6 3.2-2.5 5.6-1.5 4.6-2.5 10.3-0.7 1.4-2.1 6.4-1.1 2-1 4.4-0.5 0.7-0.7 10.3 0 20.5 0.7 8.7 0.5 0.7 1 4.4 1.1 2 2.1 6.4 0.7 1.4 2.5 10.3 1.5 4.6 2.5 5.6 0.6 3.2-0.1 1.6-0.6 1.5-0.8 0.9-1.6 0.3-1.5-0.7-1.6-1.6-4.7-8.3-5.6-7.9-3.5-6.3-0.4-1.8-1-1.4-0.6-2.8-0.7 1.3 0.7 3.6 0.7 1.1 0.9 3.3 0.8 1.4 0.7 2.2 3.7 7.3 1.4 4.7 0.4 3.2-0.3 3.1-0.4 1-1.6 1.2-1.6-0.3-1.6-0.7-3.1-2.7-1.6-1.8-2-3-4.3-8.2-4.1-6-2.2-4.1-0.5 1 0.5 1.7 1.1 1.4 0.5 1.4 2.1 3.3 1.5 3.2 4.3 12.4 3.6 8.1 0.3 1.6-0.1 1.6-0.7 1.2-1.6 0.7-1.5-0.4-2-1.5-5.7-7.9-5.6-6.3-3.6-4.8-5.3-8.6-0.5 0.7 0.5 1.8 1.1 1.4 0.5 1.6 1.1 1.6 0.5 1.5 6.7 11.1 1.9 4.7 0.5 3.2-0.5 3.1-0.7 0.9-1.6 0.4-1.6-0.4-3.1-1.8-1.6-1.3-2.4-2.5-5.5-8.1-6.3-7.7-4.7-5.1-1.1 0.4 1.1 1.6 5.4 6.3 3.3 4.7 5.5 12 4 6.9 0.4 1.6 0.1 1.6-0.9 1.5-0.5 0.4-1.6 0.2-1.5-0.6-1.6-1.1-1.6-1.6-5.2-6.7-9.5-9.5-7.4-8.8-3.8-3.8-4-3.1-9.6-5.2-1.5-1.2-1.6-0.6-6.3-4.1-1.6-0.6-1.3-1-1.9-0.6-1.3-0.9-3.4-1-0.9-0.6-5.4-0.9-2.2-0.7-7.3-0.9-12.8-3.8-9.8-1.6-3.3-1.6-1-1.5 0.2-1.6 2.3-1.6 2.3-0.4 7.9 0.1 7.9-0.9 4.7-0.2 9.5 0.7 1.1 0.7 8.4 0.5 0.5-0.5-6.8-0.6-1.6-0.3-0.4-0.7-5.9-0.8-1.8-0.8-12.5-0.9-6.3-1.6-3.5-2.2-1.2-1.6-0.1-1.5 1.1-1.6 2.8-1.6 2.5-0.8 3.2-0.4 30-0.1 2.9-0.3-20.3-1-7.9-1.2-6.3-1.5-9.1-1-2-0.7-1.4-0.9-0.7-1.6 0.7-1.5 1.4-0.9 2-0.7 9.1-1 6.3-1.5 7.9-1.2 20.3-1-2.9-0.3-30-0.1-3.2-0.4-2.5-0.8-2.8-1.6-1.1-1.6 0.1-1.5 1.2-1.6 3.5-2.2 6.3-1.6 12.5-0.9 1.8-0.8 5.9-0.8 0.4-0.7 1.6-0.3 6.8-0.6-0.5-0.5-8.4 0.5-1.1 0.7-9.5 0.7-4.7-0.2-7.9-0.9-7.9 0.1-2.3-0.4-2.3-1.6-0.2-1.6 1-1.5 3.3-1.6 9.8-1.6 12.8-3.8 7.3-0.9 2.2-0.7 5.4-0.9 0.9-0.6 3.4-1 1.3-0.9 1.9-0.6 1.3-1 1.6-0.6 6.3-4.1 1.6-0.6 1.5-1.2 9.6-5.2 4-3.1 3.8-3.8 7.4-8.8 9.5-9.5 5.2-6.7 1.6-1.6 1.6-1.1zM970.7 117.9l0.5-0.7-0.5-1.1-0.7 1.1zM969.1 119.7l0.7-0.9-0.7-0.7-0.5 0.7zM967.5 119.9l-0.3 0.5 0.3 1.4 0.9-1.4zM967.3 121.9l-1.4-0.3-1.8 1.9 0.3 1.5zM986.5 121.4l-0.8 2.1 0.8 0 0.6-1.6zM962.3 125.1l0.5 0.8 1.5-0.8-1.5-0.3zM984.9 125.5l0.3-0.4-0.3-1.3-0.5 1.3zM960.2 126.7l1 0.4 0.9-0.4-0.9-0.6zM983.3 126.1l-0.3 0.6 0.3 0.8 0.5-0.8zM957.6 128.2l0.4 0.7 2-0.7-0.4-0.8zM981.7 128l-0.3 1.8 0.3 0 0.6-1.6zM954.6 129.8l0.3 0.7 2.3-0.7-0.7-0.6zM999.1 129.6l-0.4 1.8 0.4 0.9 0.6-2.5zM951.5 131.4l0.2 0.8 2.6-0.8-1-0.6zM980.2 131.6l0-1.3-0.6 1.1zM951.3 133l-1.1-0.5-1.7 0.5-2.4 1.5 0.9 0.6 1.6-0.6 1.6-1.2zM978.6 133.5l0.3-0.5-0.3-0.7-0.4 0.7zM997.5 133l-0.3 1.5 0.3 1.6 0.3-1.6zM977 134.2l-0.2 0.3 0.2 1.1 0.5-1.1zM943.6 136.1l0.2 0.9 2.1-0.9-0.5-0.7zM976 136.1l-0.6 0-0.7 1.6 0.7 0.2zM1013.3 135.7l-0.6 3.6 0.6 0.7 1-3.9zM941 137.7l1.3 0.4 1.1-0.4-1.1-0.5zM995.9 137l-0.3 2.3 0.3 0.5 0.4-2.1zM938.2 139.3l0.9 0.5 1.8-0.5-0.2-0.9zM973.8 139.6l0.3-0.3-0.3-1-0.6 1zM934.3 140.8l0.1 0.4 1.5 0.1 2-0.5-0.4-0.6zM971.6 140.8l0.7 0.4 0.3-0.4-0.3-0.6zM994.4 140.8l-0.3 1.6 0.3 1.4 0.2-1.4zM1011.7 140.3l-0.6 3.7 0.6 0.2 0.7-3.4zM927.7 142.4l0.3 0.4 1.6 0.1 4.3-0.5-1.1-0.5zM969.7 142.4l1 0.3 0.4-0.3-0.4-0.6zM967.4 144l0.1 0.6 1.8-0.6-0.2-0.8zM965 145.6l0.9 0.3 1-0.3-1-0.4zM992.8 144.8l-0.4 2.4 0.4 0.5 0.3-2.1zM1010.2 144.6l-0.5 4.1 0.5 0.4 0.5-3.5zM962.2 147.2l0.6 0.4 1.7-0.4-0.1-0.5zM959.3 148.7l0.3 0.5 1.9-0.5-0.3-0.4zM991.2 148.6l-0.3 3.3 0.3 1.1 0.3-2.7zM956.5 150.3l1.5 0.2 0.6-0.2-0.6-0.4zM1008.6 149.7l-0.4 6.9 0 23.7 0.4 5.3 0.5-0.6-0.2-7.9 0.2-26.8zM954.1 151.9l0.8 0.3 1.1-0.3-1.1-0.3zM951.2 153.5l0.5 0.4 1.8-0.4-0.2-0.5zM947.8 155l0.8 0.4 1.9-0.4-0.3-0.4zM989.6 154.5l0 26.3 0.4-2.1 0-22.1zM942.4 156.6l1.4 0.4 3.3-0.4-1.7-0.3zM932.1 158.2l2.3 0.3 6.3-0.3-1.6-0.3zM932.1 177.1l7 0.3 1.6-0.3-6.3-0.3zM942.4 178.7l3 0.3 1.7-0.3-3.3-0.4zM947.8 180.3l2.4 0.4 0.3-0.4-1.9-0.4zM951.2 181.8l2.1 0.5 0.2-0.5-1.8-0.4zM954.1 183.4l0.8 0.3 1.1-0.3-1.1-0.3zM991.2 182.3l-0.3 1.1 0.3 3.3 0.3-1.7zM956.5 185l1.5 0.4 0.6-0.4-0.6-0.2zM959.3 186.6l1.9 0.4 0.3-0.4-1.9-0.5zM1010.2 186.2l-0.5 0.4 0.5 4.1 0.5-1zM962.2 188.1l2.2 0.5 0.1-0.5-1.7-0.4zM992.8 187.6l-0.4 0.5 0.4 2.4 0.3-0.8zM965 189.7l0.9 0.4 1-0.4-1-0.3zM967.4 191.3l1.7 0.8 0.2-0.8-1.8-0.6zM1011.7 191.1l-0.6 0.2 0.6 3.7 0.7-0.5zM927.7 192.9l5.1 0.5 1.1-0.5-4.3-0.5-1.6 0.1zM969.7 192.9l1 0.6 0.4-0.6-0.4-0.3zM994.4 191.5l-0.3 1.4 0.3 1.6 0.2-1.6zM934.3 194.5l3.2 0.6 0.4-0.6-2-0.5-1.5 0.1zM971.6 194.5l0.7 0.6 0.3-0.6-0.3-0.4zM938.2 196l2.5 0.9 0.2-0.9-1.8-0.5zM973.8 195.7l-0.6 0.3 0.6 1 0.3-1zM995.9 195.5l-0.3 0.5 0.3 2.3 0.4-0.7zM1013.3 195.3l-0.6 0.7 0.6 3.6 1-0.4zM941 197.6l1.3 0.5 1.1-0.5-1.1-0.4zM974.7 197.6l0.7 1.6 0.6 0-0.6-1.8zM943.6 199.2l1.8 0.7 0.5-0.7-2.1-0.9zM946.1 200.8l2.4 1.5 1.7 0.5 1.1-0.5-1.1-0.3-1.6-1.2-1.6-0.6zM977 201.1l0.5-0.3-0.5-1.1-0.2 1.1zM997.5 199.2l-0.3 1.6 0.3 1.5 0.3-1.5zM978.6 201.8l-0.4 0.5 0.4 0.7 0.3-0.7zM951.5 203.9l1.8 0.6 1-0.6-2.6-0.8zM980.2 203.7l-0.6 0.2 0.6 1.1zM999.1 203l-0.4 0.9 0.4 1.8 0.6-0.2zM954.6 205.5l1.9 0.6 0.7-0.6-2.3-0.7zM981.4 205.5l0.2 1.6 0.7 0-0.6-1.6zM957.6 207.1l2 0.8 0.4-0.8-2-0.7zM960.2 208.6l1 0.6 0.9-0.6-0.9-0.4zM983.3 209.2l0.5-0.6-0.5-0.8-0.3 0.8zM962.3 210.2l0.5 0.3 1.5-0.3-1.5-0.8zM984.9 209.8l-0.5 0.4 0.5 1.3 0.3-1.3zM964.4 210.3l-0.3 1.5 1.8 1.9 1.4-0.3zM985.7 211.8l0.8 2.1 0.6-0.5-0.6-1.6zM967.5 215.4l0.9-0.5-0.9-1.4-0.3 1.4zM969.1 215.6l-0.5 0.9 0.5 0.7 0.7-0.7zM970.7 217.4l-0.7 0.7 0.7 1.1 0.5-1.1zM1043.3 117l1.6 0.6 0.5 1.2 0.5 3.1-0.2 4.8-1.6 6.3-3.9 9.5-1.6 7-1.4 18.1 1.4 18.2 1.6 7 3.9 9.5 1.6 6.3 0.2 4.8-0.5 3.1-0.5 1.2-1.6 0.6-1.6-0.6-3.1-2.6-2.6-3.3-1.6-3.2-3.7-9.8-4.1-9.1-0.7-3.4-0.6-1.3-0.4-6.3 0.5-11.1-0.5-14.1 0.4-3.2 0.6-1.3 0.7-3.4 4.1-9.1 3.7-9.8 1.6-3.2 2.6-3.3 3.1-2.6zM1055.9 119.5l1.6 0.2 1.4 2.2 0.3 1.6-0.3 3.2-0.8 3.1-2.2 5.6-1.5 5.3-2.5 14.3-2.2 9.5-0.2 3.1 0.2 3.2 2.2 9.5 2.5 14.3 1.5 5.3 2.2 5.6 0.8 3.1 0.3 3.2-0.3 1.6-1.4 2.2-1.6 0.2-1.5-0.7-1.6-1.8-0.9-1.5-3.8-9.3-3.7-6.5-2.2-4.7-1-3.2-0.6-3.1-0.4-9.5 0.1-20.5 0.3-4.7 0.6-3.1 1.6-4.8 5.3-9.6 3.8-9.3 0.9-1.5 1.6-1.8zM1067 130.7l-0.2 18-0.6 3.2-3.9 11.4-0.6 4.3 0.6 4.4 3.9 11.4 0.6 3.2 0.2 18-3.2-2.6-3.1-3.6-2.4-3.9-1.3-3.2-1.8-7.9-1.3-11-0.2-4.8 0.2-4.7 1.3-11 1.8-7.9 1.3-3.2 2.4-3.9 3.1-3.6zM1067 163.3l0 8.7-0.6-4.4zM888 207.1l1.3-1.6 2.4-1.1 4.8-1 3.1 0.1 12.5 2 9.6 0.9 1.3 0.7 3.5 0.7 1.1 0.8 2 0.7 11.3 7.2 10.8 5.5 4.8 3.6 2 2 14.8 18.9 1.7 3.1 0.9 3.2 0.1 3.1-0.6 1.6-1.6 0.6-1.5-0.4-4.8-2.6-4.7-4.3-6.3-7.8-6.2-6-6.3-4.7-9.8-6.3-9.5-4.7-7.7-3.2-5.5-1.6-8.7-1.2-6.3-1.5-3.2-1.3-3.6-2.3-1.5-1.6zM883.9 219.7l1.5-1.7 3.2-0.7 9.4 1.1 12.7 0.4 6.3 1.5 7.9 3.6 8.6 5.2 10.3 5.8 6.8 5.3 4 4.7 5 7.9 5.9 7.9 1.5 3.1 0.2 1.6-7.9 0-10-11-8.6-7.2-7.9-7.2-4.2-3-3.4-1.6-8.2-2.3-15.2-5.5-10.1-1.9-3.1-0.9-3.3-2-1.2-1.5zM889.5 233.9l3.6-1.6 3.4-0.8 3.1-0.2 3.2 0.2 6.3 1.6 15.8 6.5 4.7 2.9 11.1 8.3 3.9 3.6 2.7 3.1 2 3.2 1.7 4.7-9.3 0-5.8-4.5-9.4-10.3-3.3-2.5-3.5-1.6-12.2-2.6-7.9-2.9-7.6-4-2.2-1.6zM887.2 246.5l1.4-1.5 1.5-0.6 1.6-0.2 3.2 0.1 23.7 6.6 4.7 2.9 11.7 11.6-11.3 0-2-2.1-3-2.6-5.9-3.2-5.8-1.6-7.4-1-3.1-0.9-3.2-1.4-4.6-3-1.3-1.5zM882.4 259.1l1.4-1.6 3.2-0.1 11 3 11.1 0.9 4.7 1.7 3.2 2.4-20.5 0-6.4-0.8-3.1-0.8-2.7-1.6-1.5-1.5z"/>
<path fill="#cf71f0" d="M904.6 71.5l0.1-1.6 9.5 0-3 1.6-2.1 0.5-3.2-0.1zM932.4 69.9l-5.2 4.7-4.4 4.8-1.9 1.5-2.7 1.6-5.2 1.6-3.9 0.8-11.1 3.4-3.1 0.3-1.6-0.6-0.8-0.8 0.8-1.6 2-1.5 2.7-1.2 3.2-0.8 7.9-1 3.2-0.9 3.1-1.4 3.2-1.8 3.3-2.4 1.8-1.5 2.6-3.2zM947.8 71.5l0 1.6-1.1 3.1-2.2 3.2-2.2 2.3-7.9 6-12.1 7.4-11.6 5.4-6.3 1.7-3.2 0.2-3.2-0.4-1.3-0.6-1.1-1.5 0.9-1.6 1.9-1.6 6-2.9 4.7-1.4 9.5-1.6 4.7-1.5 2.9-2.1 1.8-1.7 6.3-7.7 4.8-4.4 3.2-2 3.1-1.3 1.6 0.1zM961.9 73.1l0.2 1.5-0.6 1.6-6 11-3.1 4.8-3.8 3.9-6.3 4.4-8.5 4.3-10.5 6.6-3.1 1.6-4.8 1.8-4.7 0.8-4.8 0.2-12.6-0.8-2.4-0.8 1.3-1.5 7.4-2.5 15.8-6.2 8.7-2.4 5.5-2.1 3.2-2.3 9.5-9 10.7-8.6 5-4.9 1.6-1.2 1.6-0.6zM973.5 82.5l-0.2 3.2-0.6 1.5-1.8 3.2-10.6 14.2-2.7 3.1-4.3 3.7-3.1 2-10.7 5.4-8.3 5.5-3.2 1.7-4.7 1.7-4.7 0.9-19 2-3.1-0.2-2-0.6-2.2-1.6-0.1-1.5 1.1-1.6 3.2-2.1 4.7-1.6 6.5-1 6.7-1.6 12.1-4.8 9.4-4.7 9.3-6.3 8.1-6.3 3.2-3.2 6.3-7.4 3.1-2.9 3.2-1.9 1.6-0.5 1.6 0zM984.9 86.9l0 1.9-2.2 7.9-1.8 4.7-1.8 3.2-4.8 6.3-7.8 9.5-3.7 3.8-4.8 3.4-10.2 5.4-8.7 5.5-3.2 1.5-4.7 1.5-18.9 3.1-4.8 0.2-3.1-0.3-4.8-0.9-4.2-1.2-3.1-1.6 1.2-1.5 7.7-3.5 4.7-1.8 7.9-1.8 6.1-0.8 5.8-1.6 4-1.6 22.2-12.6 4.6-3.1 3.5-3.2 8.1-9.4 5.7-5.6 9.5-7.4zM997.6 93.5l0.5 1.6 0 1.6-1.5 4.7-5.4 9.9-3.6 7.5-1.8 3.1-3.3 4.8-7.5 9.4-5.9 6.1-3.2 2.5-4.6 2.5-6.4 3.9-6.3 3.4-2 0.5-1.2 0.8-5 0.8-2.9 0.8-8 0.8-1.5 0.5-3.1 0.4-7.9 0.1-9.5-0.7-9.5-0.2-4.7-1.1-1.2-0.6-1.4-1.6-0.1-1.5 1.3-1.6 2.8-1.6 1.8-0.6 16.8-2.5 10-2.4 6.1-0.8 5.8-1.6 3.7-1.6 11.3-6.9 8-4.1 4.8-3.1 4.5-4.4 5.7-6.7 8.7-9.4 6.1-8.2 3.2-3.4 3.2-1.9 1.5-0.2zM1008.6 99.8l0.1 3.2-1.2 6.3-1.2 4.7-1.9 4.8-6.9 13.3-0.7 2.4-0.9 1.4-1 3.4-0.5 0.6-0.7 2.5-0.9 1.4-0.5 1.8-1.1 2.1-1.6 4.9-0.5 8.7 0.1 15.8 0.4 5.6 1.6 4.9 1.1 2.1 0.5 1.8 0.9 1.4 0.7 2.5 0.5 0.6 1 3.4 0.9 1.4 0.7 2.4 6.9 13.3 1.9 4.8 1.2 4.7 1.2 6.3-0.1 3.2-1.6-0.1-1.6-1.1-7.9-7.3-5.5-7.3-4-6.4-12.6-16.3-3.1-3.6-2.4-2.1-4.8-3.2-7.1-3.7-6.6-4.1-3.4-1.6-4.2-1-1.1-0.6-8.3-0.8-2.7-0.8-13.1-1.5-12.7-0.7-8.8-2.5-3.7-1.6-1.6-1.6 1.6-1.5 3.7-1.6 8.8-2.5 12.7-0.7 13.1-1.5 2.7-0.8 8.3-0.8 1.1-0.6 4.2-1 3.4-1.6 6.6-4.1 7.1-3.7 4.8-3.2 2.4-2.1 3.1-3.6 12.6-16.3 4-6.4 5.5-7.3 7.9-7.3 1.6-1.1zM1019.6 106l1.7 1.7 0.3 1.6-0.3 3.2-0.8 3.1-4 9.1-4.1 13-0.7 1.2-3.1 9.1-1 8.6 0.3 11-0.3 11.1 0.8 7.9 1.8 5.4 2.2 5.6 4.1 13 4.4 10.7 0.7 3.1 0 1.6-0.4 1.7-1.6 1.6-1.6-0.1-1.5-0.8-3.2-3.1-6.3-10.4-5.4-7.8-1.8-3.2-0.7-1.9-0.8-1.2-0.8-2.4-0.6-0.8-1-3.2-0.9-1.5-2.2-6.5-0.8-1.4-1.3-6.3-0.3-6.3 0.1-14.2 1.1-6.3 2.1-6.3 0.7-0.9 0.6-2.3 0.9-1.5 2.4-6.4 3.3-6.3 5.4-7.8 6.3-10.4 3.2-3.2 1.5-0.7zM1030.7 113.2l1.6 0.3 0 0.5-2.2 14.2-1.6 6.3-4.1 11.2-1.3 7.8-0.3 4.7 0.3 9.4-0.3 11.1 0.3 3.1 1.3 7.8 4.1 11.2 1.6 6.3 2.2 14.2 0 0.5-1.6 0.3-7.9-8.6-2.5-3.3-2.6-4.7-6.8-17.4-1.4-6.3-0.2-4.7 0.4-9.5-0.3-12.6 1.5-7.8 4.8-12.7 3.7-7.8 5-6.8zM1041.7 121l1.6 0.9 0.6 1.6 0.1 4.7-1.2 4.8-2.6 7-1.6 5.7-1.6 11.2-0.7 10.7 0.7 10.8 1.6 11.2 1.6 5.7 2.6 7 1.2 4.8-0.1 4.7-0.6 1.6-1.6 0.9-1.5-0.4-1.6-1.2-1.6-1.8-2.1-3.8-8-19-1.2-6.3-0.1-3.1 0.7-11.1-0.7-12.6 1.3-7.8 8.8-20.5 1.3-2.3 1.6-1.8 1.6-1.2zM1054.4 126.3l0.5 0.4 0.6 1.5-1.9 9.5-1.8 12.6-3.4 14.2-0.3 3.1 0.3 3.2 3.4 14.2 1.8 12.6 1.9 9.5-0.6 1.5-0.5 0.4-1.6-1.6-2.9-5.1-6-9.4-1.3-3.2-1.1-4.7-0.5-6.3 0.5-11.1-0.5-12.6 0.2-3.1 0.9-4.7 2.7-6.4 5.1-7.8 2.9-5.1zM1063.8 137.8l1.6 1.4 0.4 1.6 0 6.4-1.4 6.3-4.4 11-0.3 3.1 0.3 3.2 4.4 11 1.4 6.3 0 6.4-0.4 1.6-1.6 1.4-1.5-0.6-1.6-1.5-1.6-2.5-1.8-4.8-0.6-3.1-0.8-6.3-0.3-11.1 0.3-11 0.8-6.3 0.6-3.1 1.8-4.8 1.6-2.5 1.6-1.5zM890.7 180.3l1.4-1.6 1.2-0.6 4.7-1.1 9.5-0.2 9.5-0.7 7.9 0.1 3.1 0.4 1.5 0.5 8 0.8 2.9 0.8 5 0.8 1.2 0.8 2 0.5 6.3 3.4 6.4 3.9 4.6 2.5 3.2 2.5 5.9 6.1 7.5 9.4 3.3 4.8 1.8 3.1 3.6 7.5 5.4 9.9 1.5 4.7 0 1.6-0.5 1.6-1.7 1-1.5-0.2-3.2-1.9-3.2-3.4-6.1-8.2-8.7-9.4-5.7-6.7-4.5-4.4-4.8-3.1-8-4.1-11.3-6.9-3.7-1.6-5.8-1.6-6.1-0.8-10-2.4-16.8-2.5-1.8-0.6-2.8-1.6-1.3-1.6zM892.3 194.5l3.1-1.6 4.2-1.2 4.8-0.9 3.1-0.3 4.8 0.2 18.9 3.1 4.7 1.5 3.2 1.5 8.7 5.5 10.2 5.4 4.8 3.4 3.7 3.8 7.8 9.5 4.8 6.3 1.8 3.2 1.8 4.7 2.2 7.9 0 1.9-1.6 0-9.5-7.4-5.7-5.6-8.1-9.4-3.5-3.2-4.6-3.1-22.2-12.6-4-1.6-5.8-1.6-6.1-0.8-7.9-1.8-4.7-1.8-7.7-3.5zM892.3 207.1l2.2-1.6 2-0.6 3.1-0.2 19 2 4.7 0.9 4.7 1.7 3.2 1.7 8.3 5.5 10.7 5.4 3.1 2 4.3 3.7 2.7 3.1 10.6 14.2 1.8 3.2 0.6 1.5 0.2 3.2-1.2 1.7-1.6 0-1.6-0.5-3.2-1.9-3.1-2.9-6.3-7.4-3.2-3.2-8.1-6.3-9.3-6.3-9.4-4.7-12.1-4.8-6.7-1.6-6.5-1-4.7-1.6-3.2-2.1-1.1-1.6zM890.9 221.3l2.4-0.8 12.6-0.8 4.8 0.2 4.7 0.8 4.8 1.8 3.1 1.6 10.5 6.6 8.5 4.3 6.3 4.4 3.8 3.9 3.1 4.8 6 11 0.6 1.6-0.2 1.5-0.7 0.4-1.6-0.6-1.6-1.2-5-4.9-10.7-8.6-9.5-9-3.2-2.3-5.5-2.1-8.7-2.4-15.8-6.2-7.4-2.5zM895.6 235.4l1.1-1.5 1.3-0.6 3.2-0.4 3.2 0.2 6.3 1.7 11.6 5.4 12.1 7.4 7.9 6 2.2 2.3 2.2 3.2 1.1 3.1 0 1.6-0.8 1.3-1.6 0.1-3.1-1.3-3.2-2-4.8-4.4-6.3-7.7-1.8-1.7-2.9-2.1-4.7-1.5-9.5-1.6-4.7-1.4-6-2.9-1.9-1.6zM892.5 248.1l0.8-0.8 1.6-0.6 3.1 0.3 11.1 3.4 3.9 0.8 5.2 1.6 2.7 1.6 1.9 1.5 4.4 4.8 5.2 4.7-6.1 0-2.6-3.2-1.8-1.5-3.3-2.4-3.2-1.8-3.1-1.4-3.2-0.9-7.9-1-3.2-0.8-2.7-1.2-2-1.5zM904.6 263.8l1.3-0.4 3.2-0.1 2.1 0.5 3 1.6-9.5 0z"/>
<path fill="#b563f2" d="M943.8 74.2l0.4 0.4 0 1.6-1.9 3.2-1.5 1.5-4.9 3.4-1.5 0.6-1.6-0.1-0.2-0.7 1.5-3.2 2.5-3.1 4.1-3.2 1.6-0.6zM954.2 82.5l0.5 1.6-0.4 1.6-2.2 4.7-3.5 4.2-4.8 3.5-4.7 2.3-6.3 2-1.6 0.9-7 6-4 2.4-3.2 1.4-4.7 1.1-3.2 0.2-3.2-0.4-3.2-1.5 0.7-1.6 2.2-1.6 8.2-3.8 6.4-1.8 9.4-1.6 1.6-0.8 8.3-9.3 4.3-3.9 6.4-4.4 3.1-1.4zM970.7 85.1l0 2.1-1.4 3.2-8.8 12.6-4 4.8-4.8 3.8-11.3 5.6-10.8 7.1-3.1 1.6-3.2 1-4.7 0.9-17.4 1.2-3.9-0.8-1.1-1.5 1-1.6 2.6-1.6 12.5-3.1 4.7-1.6 11.6-4.8 6.7-3.1 7-4.6 10.4-8 3.6-3.2 6.5-7 3.1-2.8 1.6-0.9 1.6-0.4zM981 93.5l0.3 1.6-0.1 1.6-0.8 3.2-1.4 3.1-3 4.7-11.8 14.2-4.6 4-3.1 1.9-7.1 3.6-11.9 7.2-3.1 1.4-4.8 1.2-14.2 2.2-6.3 0.5-3.2-0.2-3.1-0.7-1.7-0.6-2.3-1.6 0.1-1.5 1.7-1.6 2.8-1.6 5.7-2.1 13.6-2.6 4.7-1.6 6.5-3.1 16.5-9.5 4.9-3.2 3.9-3.1 9.9-10.9 4.7-4.3 4.8-2.8 1.6-0.2zM901.2 99.7l-0.3-1.4 1.6-1.6 3.4-1.7 4.8-1.1 3.1-0.1 1.6 0.3 1 1-1.8 1.6-2.8 1.6-4.1 1.6-3.3 0.5-1.6-0.1zM995.2 96.7l0.4 1.6-0.2 1.6-1 3.1-7.4 15.8-2.8 4.7-11 14.2-4.1 4-4.7 3.3-12.7 7.3-4.7 2.3-4.7 1.4-7.9 1.3-11.1 1.3-4.7 0.1-19-1.7-2-0.4-2.9-1.6-0.2-1.5 1.5-1.6 2-0.9 11.1-2.2 9.5-2.4 13-2.4 4.9-1.6 6.1-3.1 9.1-5.7 7.4-3.8 4.6-3.1 3.4-3.2 6.9-7.9 8.9-9.4 6.7-7.9 1.6-1.3 1.6-0.9 1.6-0.1zM1003.8 105.2l1.6 0.5 0.6 2-0.1 3.2-1.1 4.7-1.9 4.8-5.4 10.6-7.9 20-0.8 5.6-0.2 20.5 1 7.2 7.9 20 5.4 10.6 1.9 4.8 1.1 4.7 0.1 3.2-0.6 2-1.6 0.5-3.1-1.7-4.8-4.5-9.4-13.6-11.1-14.2-4.7-4.8-4.6-3.2-4.9-2.5-8.9-5.3-3.2-1.6-4.5-1.6-20.9-3.1-16.2-1.3-6.5-1.9-2.7-1.6-0.9-1.6 0.9-1.5 2.7-1.6 6.5-1.9 16.2-1.3 20.9-3.1 4.5-1.6 3.2-1.6 8.9-5.3 4.9-2.5 4.6-3.2 4.7-4.8 11.1-14.2 9.4-13.6 4.8-4.5zM1018 109.5l1.2 1.4 0.2 1.6-0.5 3.1-4 11.3-2.6 9.2-3.7 10.3-1.5 7.1-0.2 3.1 0.4 11-0.4 9.5 0.2 4.7 1.5 7.1 3.7 10.3 2.6 9.2 4 11.3 0.5 3.1-0.2 1.6-1.2 1.4-1.5-0.2-1.6-1-1.6-1.7-9.9-14.3-3.8-6.3-2.8-6.3-4.7-12.6-0.7-4.7-0.3-6.3 0.1-11.1 0.6-7.8 1.9-6.3 4.5-11.1 3.2-6.3 11.9-17.4 1.6-1.7 1.6-1zM1027.5 120.2l1.7 1.7 0.1 3.2-0.3 3.1-0.9 4.8-3.7 10.6-1.6 6.3-0.5 8.3 0 20.5 0.4 6.3 1.7 6.7 3.7 10.6 1.1 6.3-0.1 5-1.6 1.5-1.6-0.6-3.1-2.8-2.4-3.1-2.6-4.7-6.7-17.3-0.8-4.8-0.3-4.7 0.4-9.5-0.4-11 0.5-4.7 0.6-3.2 6-15.7 2.3-4.8 3.4-4.6 3.1-2.8zM1040.2 124.8l1.5 1 0.5 2.4-0.1 1.6-4 14.2-2.7 18.8-0.3 4.8 0.3 4.9 2.7 18.8 4 14.2 0.1 1.6-0.5 2.4-1.5 1-1.6-0.8-2.1-2.6-7.6-15.8-2.1-6.3-0.4-4.7 0.9-12.7-0.9-12.6 0.2-3.1 0.6-3.2 1.7-4.7 6.5-13.8 1.6-2.8 1.6-1.8zM1049.6 137.9l1.6 1.4 0.2 1.5-0.1 4.8-0.6 4.7-1.5 6.3-2.7 7.2-1.3 2.3-0.2 1.5 0.2 1.6 1.3 2.3 2.7 7.2 1.5 6.3 0.6 4.7 0.1 4.8-0.2 1.5-1.6 1.4-1.5-1-1.6-1.8-2.1-3.3-1.6-4.7-0.7-6.3 0.2-3.2 1-5.7 1.1-2.2 0.3-1.6-0.3-1.5-1.1-2.2-1-5.7-0.2-4.7 0.4-3.2 0.7-3.1 1.7-4.1 3.2-4.2zM1062.3 142.8l1.2 1.2 0.3 1 0 3.7-1.5 5.3-1.6 2.8-1.6 1.2-0.7-1.4-0.3-1.6 0-3.1 1-5 1.6-3zM894.7 180.3l2.9-1.6 2-0.4 19-1.7 4.7 0.1 11.1 1.3 7.9 1.3 4.7 1.4 4.7 2.3 12.7 7.3 4.7 3.3 4.1 4 11 14.2 2.8 4.7 7.4 15.8 1 3.1 0.2 1.6-0.4 1.6-0.8 0.7-1.6-0.1-1.6-0.9-1.6-1.3-6.7-7.9-8.9-9.4-6.9-7.9-3.4-3.2-4.6-3.1-7.4-3.8-9.1-5.7-6.1-3.1-4.9-1.6-13-2.4-9.5-2.4-11.1-2.2-2-0.9-1.5-1.6zM1059.1 177.3l1.6 1.2 1.6 2.8 1.5 5.3 0 3.7-0.3 1-1.2 1.2-1.6-1.1-1.6-3-1-5 0-3.1 0.3-1.6zM898.8 194.5l2.3-1.6 1.7-0.6 3.1-0.7 3.2-0.2 6.3 0.5 14.2 2.2 4.8 1.2 3.1 1.4 11.9 7.2 7.1 3.6 3.1 1.9 4.6 4 11.8 14.2 3 4.7 1.4 3.1 0.8 3.2 0.1 1.6-0.3 1.6-0.8 0.8-1.6-0.2-4.8-2.8-4.7-4.3-9.9-10.9-3.9-3.1-4.9-3.2-16.5-9.5-6.5-3.1-4.7-1.6-13.6-2.6-5.7-2.1-2.8-1.6-1.7-1.6zM897.3 207.1l3.9-0.8 17.4 1.2 4.7 0.9 3.2 1 3.1 1.6 10.8 7.1 11.3 5.6 4.8 3.8 4 4.8 8.8 12.6 1.4 3.2 0 2.1-1.6 1.1-1.6-0.4-1.6-0.9-3.1-2.8-6.5-7-3.6-3.2-10.4-8-7-4.6-6.7-3.1-11.6-4.8-4.7-1.6-12.5-3.1-2.6-1.6-1-1.6zM902.7 222.8l3.2-1.5 3.2-0.4 3.2 0.2 4.7 1.1 3.2 1.4 4 2.4 7 6 1.6 0.9 6.3 2 4.7 2.3 4.8 3.5 3.5 4.2 2.2 4.7 0.4 1.6-0.5 1.6-0.9 0.2-3.1-1.4-6.4-4.4-4.3-3.9-8.3-9.3-1.6-0.8-9.4-1.6-6.4-1.8-8.2-3.8-2.2-1.6zM901.2 235.6l1.6-0.6 1.6-0.1 3.3 0.5 4.1 1.6 2.8 1.6 1.8 1.6-1 1-1.6 0.3-3.1-0.1-4.8-1.1-3.4-1.7-1.6-1.6zM932.8 250.5l1.6-0.1 1.5 0.6 4.9 3.4 1.5 1.5 1.9 3.2 0 1.6-0.4 0.4-1.5 0.2-1.6-0.6-4.1-3.2-2.5-3.1-1.5-3.2z"/>
<path fill="#9652f4" d="M950.7 87.2l0.1 1.6-0.6 1.6-3.2 3.8-1.6 1.2-3.1 1.7-1.6 0.4-1.6-0.2-0.4-0.6 0.5-1.6 1.1-1.6 3.1-3.1 2-1.6 3.2-1.8 1.6-0.2zM965.9 89l0.5 1.4-0.5 1.6-6.7 11-3.9 4.7-5.1 3.8-11.1 4.9-9.9 7.1-2.7 1.4-3.2 1.1-6.3 0.9-12.6-0.2-1-1.6 29.4-11.5 4.7-2.3 18.8-14.6 8.1-7zM978.8 96.7l0.3 1.6-0.6 3.1-1.5 3.2-2 3.1-10.6 13.2-3.2 3-4.7 3.2-8.4 4.3-9 5.6-3.2 1.6-4.7 1.6-15.8 2.4-4.7 0.4-4.8-0.6-3.1-1.6-0.3-1.5 1.2-1.6 2.8-1.6 5.8-1.9 11-2.3 5.9-2.1 6.1-3.1 16.4-9.4 4.8-3.3 3.8-3.1 8.8-9.6 3.2-2.9 3.1-2 1.6-0.5 1.6 0.4zM992.2 101.4l0 1.6-0.9 3.2-4.3 11-1.6 3.2-3 4.7-6.1 7.9-5.3 6.3-3.5 2.9-3.1 2.2-11.1 6.4-6.3 3.2-4.7 1.4-12.7 2-6.3 0.6-6.3-0.1-9.1-1.3-7-1.6-1.1-1.5 2.2-1.6 13.4-4 6.3-1.6 11.9-2.3 4.3-1.6 3.1-1.6 9.2-5.7 7.2-3.7 5.2-3.2 4.9-4.3 9.5-10.7 11-10.7 1.6-1.3 1.6-0.7zM923.4 106.2l-0.4 1.5-1.7 1.6-2.7 1.7-3.2 1.1-3.1 0.6-2.5-0.2-0.7-0.4-0.9-1.2 1.3-1.6 2.7-1.6 4.4-1.5 3.6-0.6 1.5 0zM1002.3 108.4l1.5 0.8 0.5 1.7 0 1.6-0.6 3.1-1 3.2-5.2 10.9-7.9 19.8-1.5 7.1-0.1 20.5 0.7 4.7 0.9 4 6.3 15.9 7.4 16.4 0.8 3.2 0.2 3.1-0.5 1.7-1.5 0.8-1.6-0.4-1.6-1-3.2-3-7.7-10.7-12.8-16.3-4-4.2-4.5-3.2-7.3-3.9-6.3-3.9-3-1.6-4-1.6-8.3-1.6-6.8-0.7-4.3-0.8-19.4-2.2-3.1-1-2.7-1.6-0.8-1.6 0.8-1.5 2.7-1.6 3.1-1 19.4-2.2 4.3-0.8 6.8-0.7 8.3-1.6 4-1.6 3-1.6 6.3-3.9 7.3-3.9 4.5-3.2 4-4.2 12.8-16.3 7.7-10.7 3.2-3 1.6-1zM1014.9 114.3l1.6 0.6 0 2.3-3.9 15.8-5.6 17.2-0.5 6.4 0.2 11-0.2 11.1 0.3 4.7 1.8 7.2 4 11.7 3.9 15.8 0 2.3-1.6 0.6-1.6-1.1-9.1-11.3-3.1-4.7-1.6-3.1-2.7-6.3-3.6-9.5-1.4-6.3-0.2-6.3 0-12.6 0.4-4.8 1.7-6.3 3.1-7.9 3.5-7.8 2.8-4.8 10.2-12.8zM1025.9 123.8l1.6 1.8 0.1 4.2-0.9 4.7-4.1 12.7-0.8 6.3-0.3 6.3 0 17.3 0.6 7.9 0.7 3.8 3.9 12 0.9 4.7-0.1 4.2-1.6 1.8-1.5-0.5-1.6-1.2-1.6-1.8-2.5-4.1-6.4-15.8-1.3-4.7-0.4-4.7 0.4-11.1-0.4-11 0.8-6.3 2.7-7.9 3.2-7.9 2.3-4.7 3.2-4.3 1.6-1.2zM1038.6 130.9l0.4 2.1-2.1 11-3.3 23.6 3.3 23.7 2.1 11-0.4 2.1-1.6-1-7-12.1-1.8-4.7-0.7-3.2-0.2-3.1 1.4-12.7-1.4-11 0-3.1 0.5-3.2 0.9-3.1 2-4.5 6.3-10.8zM1048.1 143.1l0.8 0.9 0.5 1.6 0 3.1-0.6 3.2-0.7 2.8-1.6 3-1.6 0.6-1.1-3.3 0.1-4.7 1-3.6 1.6-2.6zM1044.9 177l1.6 0.6 1.6 3 0.7 2.8 0.6 3.2 0 3.1-0.5 1.6-0.8 0.9-1.6-1-1.6-2.6-1-3.6-0.1-4.7zM899.8 181.8l1.1-1.5 7-1.6 9.1-1.3 6.3-0.1 6.3 0.6 12.7 2 4.7 1.4 6.3 3.2 11.1 6.4 3.1 2.2 3.5 2.9 5.3 6.3 6.1 7.9 3 4.7 1.6 3.2 4.3 11 0.9 3.2 0 1.6-1 0.9-1.6-0.7-1.6-1.3-11-10.7-9.5-10.7-4.9-4.3-5.2-3.2-7.2-3.7-9.2-5.7-3.1-1.6-4.3-1.6-11.9-2.3-6.3-1.6-13.4-4zM902.8 194.5l3.1-1.6 4.8-0.6 4.7 0.4 15.8 2.4 4.7 1.6 3.2 1.6 9 5.6 8.4 4.3 4.7 3.2 3.2 3 10.6 13.2 2 3.1 1.5 3.2 0.6 3.1-0.3 1.6-0.2 0.4-1.6 0.4-1.6-0.5-3.1-2-3.2-2.9-8.8-9.6-3.8-3.1-4.8-3.3-16.4-9.4-6.1-3.1-5.9-2.1-11-2.3-5.8-1.9-2.8-1.6-1.2-1.6zM903.4 210.2l1-1.6 12.6-0.2 6.3 0.9 3.2 1.1 2.7 1.4 9.9 7.1 11.1 4.9 5.1 3.8 3.9 4.7 6.7 11 0.5 1.6-0.5 1.4-1.5-0.7-8.1-7-18.8-14.6-4.7-2.3zM908.2 224.4l0.9-1.2 0.7-0.4 2.5-0.2 3.1 0.6 3.2 1.1 2.7 1.7 1.7 1.6 0.4 1.5-1.7 0.6-1.5 0-3.6-0.6-4.4-1.5-2.7-1.6zM939.1 238l1.6-0.2 1.6 0.4 3.1 1.7 1.6 1.2 3.2 3.8 0.6 1.6-0.1 1.6-0.5 0.4-1.6-0.2-3.2-1.8-2-1.6-3.1-3.1-1.1-1.6-0.5-1.6z"/>
<path fill="#7741f6" d="M960.2 96.7l0.1 1.6-0.5 1.6-1.7 3.1-2.4 3.2-4 3.4-3.1 1.7-3.2 1.2-7.9 2.1-0.5 1-4.9 4.8-4.1 2.8-3.1 1.5-3.2 0.9-3.1 0.3-3.2-0.2-3.1-0.6 0.1-1.6 5.8-3.1 8.3-3.4 4.7-1.5 4.7-1 1.6-0.6 1.6-1.2 4.8-5 6.3-5.1 6.3-4.5 3.1-1.6zM977 98.4l0.5 1.5-0.2 1.5-1.2 3.2-2 3.1-9.9 12.7-3 2.8-3.2 2.3-11 5.9-9.5 5.9-3.1 1.4-3.2 0.9-12.6 1.9-6.3 0.6-3.2-0.2-3.3-1.1-0.8-1.5 1.1-1.6 2.9-1.6 4.8-1.4 7.9-1.7 5.2-1.6 6.8-3.2 16.5-9.3 5.1-3.3 4.1-3.1 3.4-3.2 6.3-6.9 3.2-2.7 3.1-1.6zM989.6 106.2l-1.4 6.3-2.5 6.3-1.7 3.1-3.3 4.8-7.4 9.4-4.2 4.4-3.2 2.4-14.2 8.3-6.3 2.9-4.7 1.2-12.7 1.9-4.7 0.4-6.3-0.2-4.8-0.8-5.6-1.6-1.8-1.5 1.7-1.6 5.8-2.3 9.4-2.8 7-1.2 5.7-1.4 4.5-1.8 2.9-1.6 8.4-5.2 8.1-4.2 5-3.2 4.2-3.7 9.5-10.5 6.3-5.8 3.2-2.4 1.5-0.8zM914.3 109.3l1.1-0.3 1.7 0.3-1.7 0.4zM1000.7 110.5l1.6 0.3 0.7 1.7 0 1.5-0.6 3.2-1.1 3.2-3.8 8.2-7.9 19.7-1.6 5.6-0.4 5.9 0.1 17.3 0.3 4.3 1.6 5.6 7.9 19.7 3.8 8.2 1.1 3.2 0.6 3.2 0 1.5-0.7 1.7-1.6 0.3-1.6-0.7-3.2-2.8-7.9-10.4-14.2-17.9-1.8-1.7-4.3-3.2-16.6-9.4-3.6-1.6-6.7-1.6-31.7-4.2-2-0.5-3-1.6-0.9-1.6 0.9-1.5 3-1.6 2-0.5 31.7-4.2 6.7-1.6 3.6-1.6 16.6-9.4 4.3-3.2 1.8-1.7 14.2-17.9 7.9-10.4 3.2-2.8zM1013.3 118.8l0.7 1.6 0 1.5-1.3 7.9-2 7.9-3.7 10.7-0.6 3.5-0.4 4.7 0.4 11-0.4 11.1 0.4 4.7 0.6 3.5 3.7 10.7 2 7.9 1.3 7.9 0 1.5-0.7 1.6-1.6-0.7-1.5-1.4-4.8-5.1-3.1-4.4-2.4-4.1-4.6-11.1-2.1-6.3-1-4.7-0.3-7.9 0.1-11 0.5-4.8 1.1-4.7 4.9-12.6 3.1-6.3 3.8-5.4 4.8-5.1 1.5-1.4zM1024.4 126.3l1.5 0.6 0.5 1.3 0 3.2-1 4.7-3.4 11.1-0.8 5.1-0.3 7.5 0 17.3 0.4 6.3 1.1 6.3 3 9.5 1 4.7 0 3.2-0.5 1.3-1.5 0.6-1.6-0.9-1.6-1.7-3.2-5.6-5.6-14.2-1-4.8-0.3-3.1 0.5-11.1-0.5-11 0.9-6.3 2.1-6.3 5.5-12.6 1.6-2.5 1.6-1.7zM1035.4 140.3l0.3 2.1-0.2 4.8-1.3 9.4-1.9 7.2-1.6 1.8-1.6-4.2-0.6-3.2-0.3-4.7 0.4-3.2 1.7-4.7 2-3.3 1.5-1.9zM1030.7 169.7l1.6 1.8 1.9 7.2 1.3 9.4 0.2 4.8-0.3 2.1-1.6-0.1-1.5-1.9-2-3.3-1.7-4.7-0.4-3.2 0.3-4.7 0.6-3.2zM904.8 181.8l1.8-1.5 5.6-1.6 4.8-0.8 6.3-0.2 4.7 0.4 12.7 1.9 4.7 1.2 6.3 2.9 14.2 8.3 3.2 2.4 4.2 4.4 7.4 9.4 3.3 4.8 1.7 3.1 2.5 6.3 1.4 6.3-1.6 1.2-1.5-0.8-3.2-2.4-6.3-5.8-9.5-10.5-4.2-3.7-5-3.2-8.1-4.2-8.4-5.2-2.9-1.6-4.5-1.8-5.7-1.4-7-1.2-9.4-2.8-5.8-2.3zM905.8 194.5l3.3-1.1 3.2-0.2 6.3 0.6 12.6 1.9 3.2 0.9 3.1 1.4 9.5 5.9 11 5.9 3.2 2.3 3 2.8 9.9 12.7 2 3.1 1.2 3.2 0.2 1.5-0.5 1.5-1.6 0.3-3.1-1.6-3.2-2.7-6.3-6.9-3.4-3.2-4.1-3.1-5.1-3.3-16.5-9.3-6.8-3.2-5.2-1.6-7.9-1.7-4.8-1.4-2.9-1.6-1.1-1.6zM912.3 210.2l3.1-0.6 3.2-0.2 3.1 0.3 3.2 0.9 3.1 1.5 4.1 2.8 4.9 4.8 0.5 1 7.9 2.1 3.2 1.2 3.1 1.7 4 3.4 2.4 3.2 1.7 3.1 0.5 1.6-0.1 1.6-0.6 0.2-3.1-1.6-6.3-4.5-6.3-5.1-4.8-5-1.6-1.2-1.6-0.6-4.7-1-4.7-1.5-8.3-3.4-5.8-3.1zM914.3 226l1.1-0.4 1.7 0.4-1.7 0.3z"/>
<path fill="#5830f9" d="M956.5 100.2l0.8 1.2-0.5 1.6-1.9 2.7-1.6 1.6-3.1 2.2-3.2 1.2-2.1 0.2-0.4-1.6 2.7-3.1 6.1-4.7zM975.4 100.2l0.5 1.2-0.1 1.6-1.5 3.2-8.1 11-4.3 4.7-4.1 3.2-10.8 5.7-8.4 5.3-4.2 2.1-3.2 0.9-14.2 2-6.3 0.1-1.8-0.4-1.6-1.5 1-1.6 3.1-1.6 11.9-2.9 6.3-2.4 5.2-2.6 13.8-7.8 7.6-4.8 4.1-3.1 10.4-10.5 3.1-1.9zM987.8 109.3l-0.8 4.7-2.6 6.4-3 4.7-8.6 11-3.7 3.9-3.2 2.4-14.2 8.4-4.7 2.3-4.7 1.5-17.4 2.5-4.7 0.1-5-0.6-5.4-1.6-1.7-1.5 1.1-1.6 3-1.6 4.2-1.6 3.8-1.1 12.6-2.6 3.4-1 3.5-1.6 12-7.2 7.3-3.8 4.9-3.2 3.6-3.1 9.5-10.5 6.3-5.4 3.2-1.6 0.3 0.1zM1000.7 112.3l1.2 1.7 0 1.6-0.7 3.2-11.6 28.6-1.8 6.1-0.5 6.3 0.1 17.3 0.6 5.9 1.6 4.9 11.6 28.6 0.7 3.2 0 1.6-1.2 1.7-1.6-0.2-3.2-2.5-22.1-27.7-3.1-2.9-5.1-3.1-13.7-7.9-3.4-1.6-5.7-1.6-32.1-4.5-4.6-1.8-1-1.6 1-1.5 4.6-1.8 32.1-4.5 5.7-1.6 3.4-1.6 13.7-7.9 5.1-3.1 3.1-2.9 22.1-27.7 3.2-2.5zM931.2 117.4l0.5 1.4-1.3 1.6-1.9 1.5-2.8 1.6-2.4 0.8-3.1 0.5-1.6-0.1-1.6-0.5-0.9-0.7 1.5-1.6 6.6-3.1 5.4-1.5zM1011.7 121.9l0.9 1.6 0.1 1.6-0.5 4.7-1.5 6.3-3.8 11.1-0.9 4.7-0.4 4.7 0.4 11-0.4 9.5 0.2 4.7 1.1 6.3 3.8 11.1 1.5 6.3 0.5 4.7-0.1 1.6-0.9 1.6-1.5-0.5-1.6-1.2-3.2-3.3-3.3-4.5-2.5-4.7-4.5-11.1-1.5-4.7-1.1-6.3-0.2-6.3 0.1-11 0.5-4.8 1.1-4.7 3-7.9 3.4-7.9 3.4-5.7 4.8-5.2 1.6-1.2zM1024.4 128.5l0.8 1.3 0.1 3.2-4.2 15.7-0.6 6.3-0.1 22.1 0.3 6.3 1.1 6.3 2.9 9.5 0.6 3.1-0.1 3.2-0.8 1.3-1.6-0.4-1.6-1.5-1.6-2.4-1.6-3.3-5.1-12.6-0.8-3.2-0.4-4.7 0.4-11.1-0.4-11 0.8-6.3 2.2-6.3 4.9-11.2 1.6-2.4 1.6-1.5zM1033.8 144.5l0.5 4.2-0.5 5-1.5 5.4-1.6 1-1.5-3.5-0.1-4.7 1.6-4.9 1.6-2.2zM1030.7 175.2l1.6 1 1.5 5.4 0.5 5-0.5 4.2-1.5-0.3-1.6-2.2-1.6-4.9 0.1-4.7zM908.1 181.8l1.7-1.5 5.4-1.6 5-0.6 4.7 0.1 17.4 2.5 4.7 1.5 4.7 2.3 14.2 8.4 3.2 2.4 3.7 3.9 8.6 11 3 4.7 2.6 6.4 0.8 4.7-1 1.6-0.3 0.1-3.2-1.6-6.3-5.4-9.5-10.5-3.6-3.1-4.9-3.2-7.3-3.8-12-7.2-3.5-1.6-3.4-1-12.6-2.6-3.8-1.1-4.2-1.6-3-1.6zM907.3 196l1.6-1.5 1.8-0.4 6.3 0.1 14.2 2 3.2 0.9 4.2 2.1 8.4 5.3 10.8 5.7 4.1 3.2 4.3 4.7 8.1 11 1.5 3.2 0.1 1.6-0.5 1.2-1.6 0.1-3.1-1.9-10.4-10.5-4.1-3.1-7.6-4.8-13.8-7.8-5.2-2.6-6.3-2.4-11.9-2.9-3.1-1.6zM916.1 211.8l0.9-0.7 1.6-0.5 1.6-0.1 3.1 0.5 2.4 0.8 2.8 1.6 1.9 1.5 1.3 1.6-0.5 1.4-1.6 0.1-5.4-1.5-6.6-3.1zM944.9 224.4l2.1 0.2 3.2 1.2 3.1 2.2 1.6 1.6 1.9 2.7 0.5 1.6-0.8 1.2-3.2-1.3-6.1-4.7-2.7-3.1z"/>
<path fill="#341cfb" d="M973.8 102.1l0.5 0.9-0.2 1.6-0.8 1.6-9.1 12.6-3 3.1-4.7 3.4-9.5 4.9-9.5 6-4.7 2-6.3 1.2-11.1 1.1-3.1-0.2-2.6-1 0.8-1.6 3.3-1.4 9.5-2.4 6.3-2.5 6.3-3.2 12.7-7.2 10.6-7 3.7-3.1 7.8-7.7 1.6-1zM953.3 103.4l0.7 1.2-1.2 1.6-2.6 1.8-1.6 0.2-0.6-0.5 1.2-1.5 1.9-1.6zM986.5 110.2l0.1 2.3-1.2 4.7-1.4 3.2-3 4.7-8.7 11-3.2 3.4-3.2 2.6-12.6 7.5-6.3 3.2-4.7 1.5-7.9 1.3-9.5 1.2-4.7 0-4.8-0.7-3.3-1.1-1.8-1.5 0.8-1.6 2.7-1.6 3.2-1.3 4.7-1.4 11.1-2.2 4.3-1.4 3.3-1.6 11.3-6.8 10.6-5.8 5.2-4.2 7.9-8.9 4.8-4.3 3.1-2.2 1.6-0.7zM999.1 113.9l1.6 0.8 0.2 2.5-0.4 1.6-12.5 32.3-0.7 3.9-0.3 4.8 0.1 17.3 0.4 4.7 1.9 6.3 4 9.5 7.1 18.9 0.4 1.6-0.2 2.5-1.6 0.8-1.6-0.7-3.1-3.1-20.6-25.4-2.7-2.5-4.9-3.1-13.8-7.9-5.4-2.4-3.2-0.9-31.5-4.7-4.2-1.5-1.2-1.6 1.2-1.5 4.2-1.5 31.5-4.7 3.2-0.9 5.4-2.4 13.8-7.9 4.9-3.1 2.7-2.5 20.6-25.4 3.1-3.1zM920.5 121.9l2.6-1.5 3.4-0.8 1.6 0.8-1.7 1.5-3.1 1.2-1.6 0.3zM1010.2 123.9l1.4 1.2 0.2 1.6-0.2 3.1-1.3 6.3-4.1 12.6-0.8 4.2-0.2 3.7 0.4 11-0.2 14.2 1.2 6.3 3.2 9.5 1.6 6.3 0.4 3.2-0.2 3.1-1.4 1.2-1.6-0.8-1.6-1.3-3.2-3.6-2.2-3.4-3-6.3-3.7-9.4-1.4-4.8-0.6-4.7-0.2-6.3 0.3-14.2 0.9-4.7 1.6-4.7 4.5-11.1 2.3-4.2 1.5-2.3 3.2-3.6 1.6-1.3zM1022.8 130.7l1.1 0.7 0.4 1.6-0.5 3.1-2.2 7.9-1 4.7-0.7 7.9-0.1 11 0.1 11.1 0.7 7.9 1 4.7 2.2 7.9 0.5 3.1-0.4 1.6-1.1 0.7-1.6-1.3-1.6-2.4-4.7-10.5-1.9-5.4-0.9-6.3 0.5-11.1-0.5-11 0.5-4.7 2-6.3 5-11.2 1.6-2.4zM1032.3 148.1l0.6 2.2-0.6 4.6-1.6 0.9-0.4-2.3 0.3-3.2zM910.3 181.8l1.8-1.5 3.3-1.1 4.8-0.7 4.7 0 9.5 1.2 7.9 1.3 4.7 1.5 6.3 3.2 12.6 7.5 3.2 2.6 3.2 3.4 8.7 11 3 4.7 1.4 3.2 1.2 4.7-0.1 2.3-1.6 0.7-1.6-0.7-3.1-2.2-4.8-4.3-7.9-8.9-5.2-4.2-10.6-5.8-11.3-6.8-3.3-1.6-4.3-1.4-11.1-2.2-4.7-1.4-3.2-1.3-2.7-1.6zM1030.7 179.5l1.6 0.9 0.6 4.6-0.6 2.2-1.7-2.2-0.3-3.2zM909.7 196l2.6-1 3.1-0.2 11.1 1.1 6.3 1.2 4.7 2 9.5 6 9.5 4.9 4.7 3.4 3 3.1 9.1 12.6 0.8 1.6 0.2 1.6-0.5 0.9-1.5-0.1-1.6-1-7.8-7.7-3.7-3.1-10.6-7-12.7-7.2-6.3-3.2-6.3-2.5-9.5-2.4-3.3-1.4zM920.5 213.4l1.2-1.5 1.6 0.3 3.1 1.2 1.7 1.5-1.6 0.8-3.4-0.8zM948 227.6l0.6-0.5 1.6 0.2 2.6 1.8 1.2 1.6-0.7 1.2-2.2-1.2-1.9-1.6z"/>
<path fill="#0503ff" d="M971.4 106.2l-0.7 2-5 7.4-2.4 3.2-3 3.1-4.7 3.2-8.6 4.3-9.5 6.1-4.7 2-4.8 1-11 0.7-1.6-0.3-0.9-1.2 12-4.1 15.8-8 7.9-4.6 9.4-6.4 4.6-3.7 4.9-4.6 1.6-0.9zM984.9 111.5l0.5 1 0.1 1.5-0.8 3.2-1.3 3.2-2.9 4.7-10.1 12.6-4.5 3.9-4.7 3-12.6 7-3.2 1.3-4.7 1.3-12.7 1.8-6.3 0.4-3.1-0.3-4.2-1.1-1.9-1.5 0.5-1.6 2.5-1.6 3.1-1.2 4.7-1.3 9.5-1.9 5.4-1.9 5.6-3.1 6.4-4 10.3-5.5 2.6-1.6 3.9-3.1 8.4-9.3 3.2-3 3.1-2.3 1.6-0.7zM997.5 116.2l1.6 0 0.4 1-0.3 3.2-5.6 15.7-5.6 13.8-1.1 5.1-0.3 4.8 0 17.3 0.6 4.7 0.8 3.6 5.6 13.8 5.6 15.7 0.3 3.2-0.4 1-1.6 0-1.6-1-3.1-3.4-10.5-12.4-5.3-7-3.2-3.7-3.1-2.6-3.8-2.4-7.3-4-6.4-3.9-3-1.6-3.2-1.2-4.7-1.1-12.7-1.7-15.8-3-3.1-0.9-1.4-1.6 1.4-1.5 3.1-0.9 15.8-3 12.7-1.7 4.7-1.1 3.2-1.2 3-1.6 6.4-3.9 7.3-4 3.8-2.4 3.1-2.6 3.2-3.7 5.3-7 10.5-12.4 3.1-3.4zM1008.6 126.1l1.6 0.1 0.6 2-0.1 3.2-1.4 6.3-2.7 7.9-1.2 4.4-0.6 6.6 0.4 9.5-0.4 12.6 0.3 4.7 1 4.7 3.7 11.1 1 6.3 0 1.6-0.6 2-1.6 0.1-3.2-2.5-3.1-4.2-2.5-4.9-4.9-12.6-1.3-4.7-0.5-4.8-0.1-6.3 0.4-12.6 0.6-3.1 1.4-4.8 4.4-11 2.4-4.7 3.2-4.4zM1021.2 134.8l1 1.3-1.9 9.5-0.8 6.3-0.6 15.7 0.6 15.8 0.8 6.3 1.9 9.5-1 1.3-1.6-2.2-4.7-9.8-1.7-5.1-0.4-4.7 0.5-11.1-0.5-11 0.4-4.7 1.5-4.7 4.9-10.2zM912.5 181.8l1.9-1.5 4.2-1.1 3.1-0.3 6.3 0.4 12.7 1.8 4.7 1.3 3.2 1.3 12.6 7 4.7 3 4.5 3.9 10.1 12.6 2.9 4.7 1.3 3.2 0.8 3.2-0.1 1.5-0.5 1-1.6 0.1-1.6-0.7-3.1-2.3-3.2-3-8.4-9.3-3.9-3.1-2.6-1.6-10.3-5.5-6.4-4-5.6-3.1-5.4-1.9-9.5-1.9-4.7-1.3-3.1-1.2-2.5-1.6zM914.5 197.6l0.9-1.2 1.6-0.3 11 0.7 4.8 1 4.7 2 9.5 6.1 8.6 4.3 4.7 3.2 3 3.1 2.4 3.2 5 7.4 0.7 2-0.7 0.8-1.6-0.9-4.9-4.6-4.6-3.7-9.4-6.4-7.9-4.6-15.8-8z"/>
<path fill="#0c14fc" d="M964.4 113.4l0.3 0.6-1.5 3.2-2.5 3.2-1.8 1.5-2.4 1.7-11.1 5.4-7.9 5.5-3.2 1.6-4.7 1.1-3.1 0.1-1.6-0.6-0.6-0.6 2.6-1.6 16.9-8.4 19-12.2zM984 114l0.2 1.6-0.3 1.6-2 4.7-3.2 4.8-8 9.9-3.2 3.1-3.1 2.4-12.7 7.4-3.1 1.6-4.8 1.8-4.7 1-11.1 1.6-4.7 0.3-3.1-0.2-3-0.6-2.5-1.5 0.4-1.6 3.5-2.1 4.7-1.4 11.1-2.4 4.7-1.9 3.2-1.7 7.9-4.9 11-5.9 3.2-2.1 4.7-4.2 7.9-8.6 3.2-2.5 1.5-0.8 1.6-0.2zM997.5 216.5l-1.6-0.2-1.5-1.2-10.3-11.2-8.7-11.2-3.1-3.1-4.5-3-16.1-9.2-4.3-1.9-5.1-1.1-11.1-1.4-16.8-3.8-2-1.6 2-1.5 16.8-3.8 11.1-1.4 5.1-1.1 4.3-1.9 16.1-9.2 4.5-3 3.1-3.1 8.7-11.2 10.3-11.2 1.5-1.2 1.6-0.2 0.3 1.6-0.1 1.5-5.7 17.4-4 9.4-1.3 4.8-0.5 4.7 0 17.3 0.2 4.8 0.7 3.1 0.9 3.3 5.2 12.5 4.5 14.2 0.1 1.5zM1008.6 127.9l1.2 1.9-0.1 3.2-1 4.7-3.5 11-0.6 3.2-0.3 4.7 0.5 11-0.3 14.2 0.9 5.8 4.1 13.2 0.3 4.7-1.2 1.9-1.6-0.5-1.6-1.3-3.1-4.2-2-3.8-3.2-7.9-2.2-6.3-1-4.7-0.4-11.1 0.4-11 1-4.7 2.2-6.3 3.2-7.9 2-3.8 3.1-4.2 1.6-1.3zM1018 144.1l0.6 1.5 0.1 1.6-1 20.4 1 19-0.1 3.1-0.6 1.5-1.5-2.1-1.6-3.3-1-4-0.2-3.1 0.8-11.1-0.7-9.4 0.1-4.7 1-4 1.6-3.3zM914.7 181.8l2.5-1.5 3-0.6 3.1-0.2 4.7 0.3 11.1 1.6 4.7 1 4.8 1.8 3.1 1.6 12.7 7.4 3.1 2.4 3.2 3.1 8 9.9 3.2 4.8 2 4.7 0.3 1.6-0.2 1.6-0.7 0.8-1.6-0.2-1.5-0.8-3.2-2.5-7.9-8.6-4.7-4.2-3.2-2.1-11-5.9-7.9-4.9-3.2-1.7-4.7-1.9-11.1-2.4-4.7-1.4-3.5-2.1zM924.3 199.2l0.6-0.6 1.6-0.6 3.1 0.1 4.7 1.1 3.2 1.6 7.9 5.5 11.1 5.4 2.4 1.7 1.8 1.5 2.5 3.2 1.5 3.2-0.3 0.6-1.6-0.5-19-12.2-16.9-8.4z"/>
<path fill="#1d30f7" d="M982.1 115.6l0.5 1.6-0.8 3.2-1.8 3.1-4.6 6.3-4.7 5.8-3.2 3.2-3.1 2.5-4.8 2.9-11 6.2-6.3 2.2-6.4 1.1-11 1.4-4.7-0.5-2.6-1.1 0-1.6 2.4-1.6 5.2-1.6 7.6-1.5 4.7-1.6 4.8-2.4 9.4-5.9 11.1-5.9 3.1-2.2 2.9-2.5 8.2-8.8 3.2-2.3 1.5-0.2zM994.4 122.6l1 0.9-0.5 4.7-2.9 9.5-4 9.5-1.5 4.6-0.6 3.2-0.2 4.8 0 17.3 0.4 4.7 1.3 4.8 4.6 11 2.5 7.9 0.9 4.7 0 1.6-1 0.9-3.2-2.3-4.7-4.7-4.3-4.9-7.3-9.5-2.6-2.4-3.5-2.3-7.6-4.1-8.9-5.4-3.7-1.7-4.8-1.3-11-1.4-6.3-1.3-7.5-2.2-2-1.6 2-1.5 7.5-2.2 6.3-1.3 11-1.4 4.8-1.3 3.7-1.7 8.9-5.4 7.6-4.1 3.5-2.3 2.6-2.4 7.3-9.5 4.3-4.9 4.7-4.7zM1007 130.4l1.5 1 0.1 3.1-1.2 4.8-3 9.4-0.5 3.2-0.2 4.7 0.4 11-0.4 11.1 0.2 4.7 0.9 4.7 2.6 7.9 1.2 4.9-0.1 3-1.5 1-1.6-0.9-1.6-1.7-1.5-2.4-3.2-7-3.2-8.4-1.1-4.2-0.4-3.2-0.3-9.5 0.3-9.4 0.4-3.2 1.1-4.2 3.2-8.4 3.2-7 1.5-2.4 1.6-1.7zM917.6 181.8l2.6-1.1 4.7-0.5 11 1.4 6.4 1.1 6.3 2.2 11 6.2 4.8 2.9 3.1 2.5 3.2 3.2 4.7 5.8 4.6 6.3 1.8 3.1 0.8 3.2-0.5 1.6-0.4 0.2-1.5-0.2-3.2-2.3-8.2-8.8-2.9-2.5-3.1-2.2-11.1-5.9-9.4-5.9-4.8-2.4-4.7-1.6-7.6-1.5-5.2-1.6-2.4-1.6z"/>
<path fill="#2f4df2" d="M980.2 118.1l0.4 0.7-0.2 1.6-0.6 1.5-4.4 6.5-4.9 6.1-2.9 3.2-6.4 4.8-11 6.3-6.4 2.6-3.1 0.7-12.7 1.8-3.1 0.1-3.6-0.5-0.7-1.6 2.7-1.6 9.5-2.1 4.7-1.6 3.2-1.6 11.7-7.3 10.4-5.4 5.7-4.1 8.5-8.8 1.6-1.1zM992.8 125.9l0.7 0.8 0.2 1.5-0.8 4.8-2.1 6.3-4.5 11-0.8 3.2-0.4 4.7 0.3 9.4-0.3 9.5 0.4 4.7 1.3 4.8 4 9.4 2.1 6.3 0.8 4.8-0.2 1.5-0.7 0.8-1.6-0.6-1.6-1.1-3.1-2.9-3.6-4-7.2-9.5-3.4-3.1-2.4-1.6-10.3-5.6-6.3-4-4.7-2.2-4.8-1.3-9.4-1.1-6.4-1.3-5.4-1.9-1.7-1.6 1.7-1.5 5.4-1.9 6.4-1.3 9.4-1.1 4.8-1.3 4.7-2.2 6.3-4 10.3-5.6 2.4-1.6 3.4-3.1 7.2-9.5 3.6-4 3.1-2.9 1.6-1.1zM1005.4 133.4l1.6 0.5 0.1 2.2-3.6 12.6-0.6 6.3 0.5 12.6-0.5 11.1 0.1 4.7 1.3 6.3 2.8 9.5-0.1 2.2-1.6 0.5-1.6-1.5-1.7-2.8-4.6-11-1.5-4.8-1-6.3-0.2-7.9 0.2-7.8 1-6.3 1.5-4.8 4.6-11 1.7-2.8zM921.3 181.8l3.6-0.5 3.1 0.1 12.7 1.8 3.1 0.7 6.4 2.6 11 6.3 6.4 4.8 2.9 3.2 4.9 6.1 4.4 6.5 0.6 1.5 0.2 1.6-0.4 0.7-1.6-0.2-1.6-1.1-8.5-8.8-5.7-4.1-10.4-5.4-11.7-7.3-3.2-1.6-4.7-1.6-9.5-2.1-2.7-1.6z"/>
<path fill="#416bed" d="M977.5 121.9l-0.2 1.6-1.9 2.9-7.4 9.7-3.4 3.2-2.2 1.5-7.8 4.8-6 3.2-3.9 1.5-2.4 0.6-12.7 1.4-3.1 0-1.6-0.4 3.7-1.6 4.2-0.7 4.7-1.9 3.2-1.7 10.3-6.7 11.8-6.1 4.7-2.9 2.6-2.1 5.3-5.4 1.6-1.2zM991.2 128.2l1.1 1.6-0.6 4.7-1.5 4.8-4.5 11-0.8 3.6-0.3 4.3 0.3 9.4-0.3 9.5 0.3 4.3 1.3 5.2 4 9.4 1.5 4.8 0.6 4.7-1.1 1.6-1.6-0.7-3.1-2.6-3.2-3.4-6.8-9.1-2.7-2.6-3.1-2.3-9.5-5.1-9.5-5.7-3.1-1.5-4.8-1.2-9.4-1.1-4.9-1-4.3-1.6-1.5-1.6 1.5-1.5 4.3-1.6 4.9-1 9.4-1.1 4.8-1.2 3.1-1.5 9.5-5.7 9.5-5.1 3.1-2.3 2.7-2.6 6.8-9.1 3.2-3.4 3.1-2.6zM1003.8 137.5l0.7 0.2 0.3 1.6-2.1 7.9-0.7 6.3 0.7 14.1-0.6 15.8 0.9 6.3 1.8 6.3-0.3 1.6-0.7 0.2-1.5-2.6-5.4-13.4-1.1-4.7-0.4-9.5 0.4-9.4 1.1-4.7 5.4-13.4zM924.9 183.4l1.6-0.4 3.1 0 12.7 1.4 2.4 0.6 3.9 1.5 6 3.2 7.8 4.8 2.2 1.5 3.4 3.2 7.4 9.7 1.9 2.9 0.2 1.6-0.5 0.3-1.6-1.2-5.3-5.4-2.6-2.1-4.7-2.9-11.8-6.1-10.3-6.7-3.2-1.7-4.7-1.9-4.2-0.7z"/>
<path fill="#548ae8" d="M989.6 130.3l1.6 0.8-0.2 3.4-1.3 4.8-4.6 11-0.7 3.2-0.3 4.7 0.3 9.4-0.3 11.1 0.3 3.1 1.2 4.8 4.1 9.4 1.3 4.8 0.2 3.4-1.6 0.8-1.6-0.8-3.1-2.9-9.1-11.6-2-1.7-3.1-2.2-9.5-5-9.5-5.8-3.1-1.5-4.8-1.2-11.8-1.5-4.6-1.6-1.4-1.6 1.4-1.5 4.6-1.6 11.8-1.5 4.8-1.2 3.1-1.5 9.5-5.8 9.5-5 3.1-2.2 2-1.7 9.1-11.6 3.1-2.9zM968.4 133l-0.7 1.5-1.2 1.6-3.3 3.2-4.7 3.1-8.3 4.8-3.7 1.5-4.2 1-1.6 0-1.6-0.6-0.3-0.4 8.7-6.3 5.8-3.5 12.6-6.1 1.6-0.5zM999.1 151.4l1.6 0.3 1.3 15.9-1.3 16-1.6 0.3-1.6-3.4-0.7-3.4-0.6-9.5 0.6-9.4 0.7-3.4zM938.8 186.6l0.3-0.4 1.6-0.6 1.6 0 4.2 1 3.7 1.5 8.3 4.8 4.7 3.1 3.3 3.2 1.2 1.6 0.7 1.5-0.9 0.7-1.6-0.5-12.6-6.1-5.8-3.5z"/>
<path fill="#68abe3" d="M928.3 167.6l1.5-1.5 3-1 3.1-0.6 7.9-0.8 4.8-1.3 3.1-1.4 9.7-6 9-4.7 3.4-2.2 2.9-2.5 6.6-8.8 3.2-3.3 1.5-1 1.6-0.1 0.5 2.1-0.2 1.6-1.6 4.7-3.9 9.5-0.6 3.2-0.2 4.7 0.3 9.4-0.3 9.5 0.2 4.7 1.1 4.8 4.6 11 0.6 3.2-0.5 2.1-1.6-0.1-1.5-1-3.2-3.3-6.6-8.8-2.9-2.5-3.4-2.2-9-4.7-9.7-6-3.1-1.4-4.8-1.3-7.9-0.8-3.1-0.6-3-1zM962.5 137.7l-3.6 3.1-5.1 3.2-3 1.6-3.8 1.4-1.9 0.2 0.5-1.6 1.8-1.6 4.5-3.2 2.8-1.5 3.5-1.6 3-0.8zM999.1 157.5l1.6 5.3 0.2 4.8-0.2 4.9-1.6 5.3-1.6-3.9-0.3-6.3 0.3-6.2zM945.1 188.1l1.9 0.2 3.8 1.4 3 1.6 5.1 3.2 3.6 3.1-1.3 0.8-3-0.8-3.5-1.6-2.8-1.5-4.5-3.2-1.8-1.6z"/>
<path fill="#56a9b0" d="M988 134.2l0.4 0.3 0.4 1.6-0.8 3.5-3.9 9.1-0.7 3.2-0.4 4.7 0.4 11-0.4 9.5 0.1 4.7 1 4.8 4.1 9.4 0.6 3.2-0.4 1.6-0.4 0.3-1.5-0.6-1.6-1.3-7.9-10.1-3-2.5-2.5-1.6-8.7-4.5-9.5-6-4.7-2.3-3.2-1-9.5-1.2-3.1-0.7-2.2-1.7 2.2-1.6 3.1-0.7 9.5-1.2 3.2-1 4.7-2.3 9.5-6 8.7-4.5 2.5-1.6 3-2.5 7.9-10.1 1.6-1.3z"/>
<path fill="#349869" d="M986.5 136.9l0.5 0.8-0.1 1.6-0.4 1.7-2.2 4.6-1.1 3.1-0.7 3.2-0.2 3.1 0.6 12.6-0.5 14.2 0.4 3.2 0.9 3.1 2.8 6.2 0.4 1.7 0.1 1.6-0.5 0.8-1.6-0.9-6-7.8-1.6-1.6-4.5-3.1-10-5.1-9.5-6.1-4.7-2.5-4.8-1.4-6.8-0.7-3.2-1.6 3.2-1.5 6.8-0.7 4.8-1.4 4.7-2.5 9.5-6.1 10-5.1 4.5-3.1 1.6-1.6 6-7.8z"/>
<path fill="#118823" d="M981.7 144.6l0.7 1-0.8 7.9 0.7 14.1-0.7 14.2 0.8 7.9-0.7 1-2.7-2.6-4.7-3.1-11.5-5.8-9.5-6.2-4.7-2.8-4.8-2.2-1.5-0.4 1.5-0.3 4.8-2.2 4.7-2.8 9.5-6.2 11.5-5.8 4.7-3.1z"/>
<path fill="#299400" d="M978.6 149.3l1.6 0.5 1.6 17.8-1.6 17.9-1.6 0.5-15.8-7.4-13.7-9.4-1.2-1.6 1.2-1.5 13.7-9.4z"/>
<path fill="#7bbd00" d="M977 151.3l1.6 0.2 1 2 1.2 7.8 0.4 6.3-0.4 6.4-1.2 7.8-1 2-1.6 0.2-9.5-3.7-6-3.2-8.7-6.3-1.7-1.6-0.7-1.6 0.7-1.5 1.7-1.6 8.7-6.3 6-3.2z"/>
<path fill="#d2e800" d="M975.4 152.9l1.6 0 1.6 1.3 1.3 5.6 0.6 6.3-0.2 6.3-1 6.3-0.7 2.4-1.6 1.3-1.6 0-3.1-0.9-6.4-2.6-3.3-1.8-4.6-3.1-3.7-3.2-1.5-1.6-0.6-1.6 0.6-1.5 1.5-1.6 3.7-3.2 4.6-3.1 6.5-3.2z"/>
<path fill="#ffeb00" d="M975.4 154.3l1.6 0.5 1.6 2.9 0.9 5.2 0.4 4.7-0.4 4.8-0.9 5.2-1.6 2.9-1.6 0.5-1.6-0.1-3.1-0.9-3.5-1.3-4.4-2.4-3.5-2.3-3.6-3.2-1.2-1.6-0.5-1.6 0.5-1.5 1.2-1.6 3.6-3.2 3.5-2.3 4.4-2.4 3.5-1.3 3.1-0.9z"/>
<path fill="#ffc100" d="M973.8 155.6l1.6 0.2 1.6 1.3 0.5 1.1 1.1 3.6 0.5 5.8-0.5 5.9-1.1 3.6-0.5 1.1-1.6 1.3-1.6 0.2-4.7-1.1-6.3-3.1-4-3.1-1.6-1.6-1.1-1.6-0.5-1.6 0.5-1.5 1.1-1.6 1.6-1.6 4-3.1 6.3-3.1z"/>
<path fill="#ff9600" d="M972.3 157.1l1.5 0 2 1.1 1 1.6 0.5 1.5 0.8 4.8-0.2 4.7-0.9 4.3-1.6 2.4-1.6 0.7-1.5 0-3.2-0.7-4.7-2.2-3.2-2.2-2.4-2.3-1-1.6-0.4-1.6 0.4-1.5 1-1.6 3.5-3.2 5.2-2.9z"/>
<path fill="#f96200" d="M970.7 158.8l1.6-0.1 1.5 0.3 1.6 1.5 1 2.4 0.6 3.2-0.2 4.7-1.4 4-1.6 1.5-1.5 0.3-1.6-0.1-3.2-0.9-3.2-1.6-3.6-3.2-1-1.6-0.4-1.6 0.4-1.5 1-1.6 2.1-2 4.5-2.7z"/>
<path fill="#ee2600" d="M969.1 161.2l1.6-0.2 1.9 0.3 1.2 1.1 1 2.1 0.5 3.1-0.5 3.2-1 2.1-1.5 1.2-1.6 0.2-3.2-0.7-3.1-2-2-2.4-0.4-1.6 0.4-1.5 1.1-1.6 2.4-2z"/>
</g>
<rect x="871.2" y="69.9" width="195.8" height="195.5" fill="none" stroke="#555" stroke-width=".7"/>
<path d="M892.1 265.4v2.5M918.1 265.4v2.5M944.1 265.4v2.5M970.1 265.4v2.5M996.1 265.4v2.5M1022.1 265.4v2.5M1048.1 265.4v2.5M871.2 246h-2.5M871.2 220h-2.5M871.2 194h-2.5M871.2 168h-2.5M871.2 142h-2.5M871.2 116h-2.5M871.2 90h-2.5M871.2 70.2h-3.1M871.2 265.1h-3.1M871.5 265.4v3.3M1066.7 265.4v3.3" stroke="#222" stroke-width="1" fill="none"/>
<text x="892.1" y="279.9" font-size="8.3" fill="#3a3a3a" text-anchor="middle" >-6</text>
<text x="864.2" y="246" font-size="8.3" fill="#3a3a3a" text-anchor="middle" transform="rotate(-90 864.2 246)" >-6</text>
<text x="918.1" y="279.9" font-size="8.3" fill="#3a3a3a" text-anchor="middle" >-4</text>
<text x="864.2" y="220" font-size="8.3" fill="#3a3a3a" text-anchor="middle" transform="rotate(-90 864.2 220)" >-4</text>
<text x="944.1" y="279.9" font-size="8.3" fill="#3a3a3a" text-anchor="middle" >-2</text>
<text x="864.2" y="194" font-size="8.3" fill="#3a3a3a" text-anchor="middle" transform="rotate(-90 864.2 194)" >-2</text>
<text x="970.1" y="279.9" font-size="8.3" fill="#3a3a3a" text-anchor="middle" >0</text>
<text x="864.2" y="168" font-size="8.3" fill="#3a3a3a" text-anchor="middle" transform="rotate(-90 864.2 168)" >0</text>
<text x="996.1" y="279.9" font-size="8.3" fill="#3a3a3a" text-anchor="middle" >2</text>
<text x="864.2" y="142" font-size="8.3" fill="#3a3a3a" text-anchor="middle" transform="rotate(-90 864.2 142)" >2</text>
<text x="1022.1" y="279.9" font-size="8.3" fill="#3a3a3a" text-anchor="middle" >4</text>
<text x="864.2" y="116" font-size="8.3" fill="#3a3a3a" text-anchor="middle" transform="rotate(-90 864.2 116)" >4</text>
<text x="1048.1" y="279.9" font-size="8.3" fill="#3a3a3a" text-anchor="middle" >6</text>
<text x="864.2" y="90" font-size="8.3" fill="#3a3a3a" text-anchor="middle" transform="rotate(-90 864.2 90)" >6</text>
<text x="969" y="293.7" font-size="7.4" fill="#3a3a3a" text-anchor="middle" textLength="23.5" lengthAdjust="spacingAndGlyphs" >X [µm]</text>
<text x="850.2" y="167.5" font-size="7.4" fill="#3a3a3a" text-anchor="middle" textLength="23.5" lengthAdjust="spacingAndGlyphs" transform="rotate(-90 850.2 167.5)" >Y [µm]</text>
<defs><linearGradient id="cb5" x1="0" y1="1" x2="0" y2="0"><stop offset="0" stop-color="#ee82ee"/><stop offset="0.155" stop-color="#0000ff"/><stop offset="0.34" stop-color="#6eb4e1"/><stop offset="0.52" stop-color="#008000"/><stop offset="0.675" stop-color="#ffff00"/><stop offset="0.85" stop-color="#ff8000"/><stop offset="0.96" stop-color="#ee0000"/><stop offset="1" stop-color="#d00000"/></linearGradient></defs>
<rect x="1075.4" y="68" width="6.6" height="199.3" fill="url(#cb5)" stroke="#666" stroke-width=".5"/>
<text x="1087.4" y="75" font-size="8.2" fill="#3a3a3a" >1.43</text>
<text x="1087.4" y="170.6" font-size="8.2" fill="#3a3a3a" >0.717</text>
<text x="1087.4" y="266" font-size="8.2" fill="#3a3a3a" >0</text>
<rect x="402" y="309.8" width="333" height="8" fill="#fff" />
<path d="M402 658 V319.6 a3 3 0 0 1 3 -3 H732.2 a3 3 0 0 1 3 3 V658 z" fill="url(#glass)"/>
<path d="M402.5 342.3 V320 a3 3 0 0 1 3 -3 H731.6 a3 3 0 0 1 3 3 V342.3 z" fill="url(#tg)"/>
<path d="M403.2 656.5 V320.6 a2.5 2.5 0 0 1 2.5 -2.5 H731.2" fill="none" stroke="#fff" stroke-opacity=".55" stroke-width=".8"/>
<path d="M402.45 320.05 a3 3 0 0 1 3 -3 H731.75 a3 3 0 0 1 3 3" fill="none" stroke="#686d74" stroke-width="0.9"/>
<path d="M402.56 319.6 V658" stroke="#8d939a" stroke-width="1.12" fill="none"/>
<path d="M734.39 319.6 V658" stroke="#5b8398" stroke-width="1.62" fill="none"/>
<path d="M402.5 657.12 H734.7" stroke="#78cce0" stroke-width="1.75" fill="none"/>
<rect x="411.3" y="326.3" width="11.6" height="11.6" fill="#111" />
<circle cx="421.28" cy="332.1" r="0.99" fill="#a89a2c"/>
<circle cx="420.05" cy="335.05" r="0.99" fill="#a89a2c"/>
<circle cx="417.1" cy="336.28" r="0.99" fill="#a89a2c"/>
<circle cx="414.15" cy="335.05" r="0.99" fill="#a89a2c"/>
<circle cx="412.92" cy="332.1" r="0.99" fill="#a89a2c"/>
<circle cx="414.15" cy="329.15" r="0.99" fill="#a89a2c"/>
<circle cx="417.1" cy="327.92" r="0.99" fill="#a89a2c"/>
<circle cx="420.05" cy="329.15" r="0.99" fill="#a89a2c"/>
<path d="M414.78 329.78L419.42 334.42M419.42 329.78L414.78 334.42" stroke="#b03a48" stroke-width="1.62"/>
<circle cx="417.1" cy="332.1" r="0.81" fill="#a89a2c"/>
<text x="427" y="336.4" font-size="9.7" fill="#111" textLength="213.5" lengthAdjust="spacingAndGlyphs" >4: Raw Data Detector #600 after Image Plane #2...</text>
<rect x="644" y="325.3" width="25.5" height="14.3" rx="2" fill="url(#btn)" stroke="#6f87a6" stroke-width="0.7"/>
<rect x="644.7" y="326" width="24.1" height="12.9" rx="1.4" fill="none" stroke="#fff" stroke-opacity=".6" stroke-width="0.5"/>
<rect x="653.07" y="332.8" width="7.36" height="2.76" rx="0.92" fill="#fff" stroke="#4a5a70" stroke-width="0.69"/>
<rect x="672" y="325.3" width="24.5" height="14.3" rx="2" fill="url(#btn)" stroke="#6f87a6" stroke-width="0.7"/>
<rect x="672.7" y="326" width="23.1" height="12.9" rx="1.4" fill="none" stroke="#fff" stroke-opacity=".6" stroke-width="0.5"/>
<rect x="681.03" y="329.58" width="6.44" height="5.29" rx="0.92" fill="#fff" stroke="#4a5a70" stroke-width="0.69"/>
<rect x="682.75" y="331.3" width="2.99" height="1.84" fill="#5a6a85"/>
<rect x="700" y="325.3" width="26.5" height="14.3" rx="2" fill="url(#cls)" stroke="#7a3a30" stroke-width="0.7"/>
<rect x="700.7" y="326" width="25.1" height="12.9" rx="1.4" fill="none" stroke="#fff" stroke-opacity=".45" stroke-width="0.5"/>
<path d="M710.61 330.01L715.89 335.3M715.89 330.01L710.61 335.3" stroke="#5a2a25" stroke-width="2.99" stroke-linecap="round"/>
<path d="M710.61 330.01L715.89 335.3M715.89 330.01L710.61 335.3" stroke="#fff" stroke-width="1.72" stroke-linecap="round"/>
<rect x="409.8" y="342.3" width="317.8" height="17" fill="#dffcfd" />
<rect x="409.8" y="359.3" width="317.8" height="291.3" fill="#f0f0f0" />
<line x1="409.8" y1="359.4" x2="727.6" y2="359.4" stroke="#777" stroke-width="0.9" />
<rect x="411" y="360" width="315.4" height="290" fill="none" stroke="#a8a8a8" stroke-width=".7"/>
<text x="568.2" y="354" font-size="9.5" fill="#222" text-anchor="middle" textLength="66" lengthAdjust="spacingAndGlyphs" >Ray Distribution</text>
<text x="568.5" y="376.2" font-size="10.4" fill="#333" text-anchor="middle" textLength="38" lengthAdjust="spacingAndGlyphs" >Position</text>
<rect x="493.8" y="394.5" width="200" height="192.1" fill="#000" />
<path d="M526.3 586.6v3M573.8 586.6v3M621.2 586.6v3M668.6 586.6v3M493.8 437.7h-3M493.8 485.2h-3M493.8 532.7h-3M493.8 580.2h-3M493.8 394.8h-3.6M493.8 586.3h-3.6M494.1 586.6v3.8M693.5 586.6v3.8" stroke="#222" stroke-width="1.1" fill="none"/>
<text x="526.3" y="605.4" font-size="10.8" fill="#3a3a3a" text-anchor="middle" >8.9</text>
<text x="573.8" y="605.4" font-size="10.8" fill="#3a3a3a" text-anchor="middle" >9</text>
<text x="621.2" y="605.4" font-size="10.8" fill="#3a3a3a" text-anchor="middle" >9.1</text>
<text x="668.6" y="605.4" font-size="10.8" fill="#3a3a3a" text-anchor="middle" >9.2</text>
<text x="484.6" y="437.7" font-size="10.8" fill="#3a3a3a" text-anchor="middle" transform="rotate(-90 484.6 437.7)" >4.6</text>
<text x="484.6" y="485.2" font-size="10.8" fill="#3a3a3a" text-anchor="middle" transform="rotate(-90 484.6 485.2)" >4.5</text>
<text x="484.6" y="532.7" font-size="10.8" fill="#3a3a3a" text-anchor="middle" transform="rotate(-90 484.6 532.7)" >4.4</text>
<text x="484.6" y="580.2" font-size="10.8" fill="#3a3a3a" text-anchor="middle" transform="rotate(-90 484.6 580.2)" >4.3</text>
<text x="593.5" y="624.4" font-size="11" fill="#3a3a3a" text-anchor="middle" textLength="36.4" lengthAdjust="spacingAndGlyphs" >X [mm]</text>
<text x="467" y="492" font-size="11" fill="#3a3a3a" text-anchor="middle" textLength="36.4" lengthAdjust="spacingAndGlyphs" transform="rotate(-90 467 492)" >Y [mm]</text>
<clipPath id="c4"><rect x="493.8" y="394.5" width="200" height="192.1"/></clipPath><g clip-path="url(#c4)" fill="#ff0000">
<path d="M503 495 L503 531 Q503.2 535.6 506.5 538 L552 570 L540 556.5 L529.5 542 L528 531 Q527 523 517 512 L511 497 z" fill="#ff0000"/>
<circle cx="503.7" cy="534.6" r="1.4"/>
<circle cx="503.6" cy="534" r="1.4"/>
<circle cx="503.8" cy="533.3" r="1.4"/>
<circle cx="504.2" cy="532.6" r="1.4"/>
<circle cx="505" cy="532.1" r="1.4"/>
<circle cx="506.1" cy="532.1" r="1.4"/>
<circle cx="507.1" cy="532.7" r="1.4"/>
<circle cx="507.6" cy="533.7" r="1.4"/>
<circle cx="507.5" cy="534.9" r="1.4"/>
<circle cx="506.7" cy="535.7" r="1.4"/>
<circle cx="505.8" cy="536" r="1.4"/>
<circle cx="505" cy="535.9" r="1.4"/>
<circle cx="504.4" cy="535.6" r="1.4"/>
<circle cx="504" cy="535.1" r="1.4"/>
<circle cx="504" cy="534.8" r="1.4"/>
<circle cx="503.8" cy="534" r="1.4"/>
<circle cx="503.7" cy="533.2" r="1.4"/>
<circle cx="503.8" cy="532.2" r="1.4"/>
<circle cx="504.3" cy="531.3" r="1.4"/>
<circle cx="505.2" cy="530.4" r="1.4"/>
<circle cx="506.4" cy="529.8" r="1.4"/>
<circle cx="508" cy="529.8" r="1.4"/>
<circle cx="509.4" cy="530.5" r="1.4"/>
<circle cx="510.5" cy="531.7" r="1.4"/>
<circle cx="510.8" cy="533.3" r="1.4"/>
<circle cx="510.4" cy="534.9" r="1.4"/>
<circle cx="509.5" cy="536" r="1.4"/>
<circle cx="508.2" cy="536.6" r="1.4"/>
<circle cx="507" cy="536.8" r="1.4"/>
<circle cx="505.9" cy="536.5" r="1.4"/>
<circle cx="505.1" cy="536" r="1.4"/>
<circle cx="504.5" cy="535.5" r="1.4"/>
<circle cx="504.1" cy="534.2" r="1.4"/>
<circle cx="503.8" cy="533.2" r="1.4"/>
<circle cx="503.7" cy="532.2" r="1.4"/>
<circle cx="503.9" cy="531.1" r="1.4"/>
<circle cx="504.3" cy="529.9" r="1.4"/>
<circle cx="505.1" cy="528.7" r="1.4"/>
<circle cx="506.2" cy="527.7" r="1.4"/>
<circle cx="507.8" cy="527" r="1.4"/>
<circle cx="509.6" cy="526.8" r="1.4"/>
<circle cx="511.4" cy="527.2" r="1.4"/>
<circle cx="513.1" cy="528.3" r="1.4"/>
<circle cx="514.3" cy="529.9" r="1.4"/>
<circle cx="514.9" cy="531.8" r="1.4"/>
<circle cx="514.6" cy="533.8" r="1.4"/>
<circle cx="513.8" cy="535.5" r="1.4"/>
<circle cx="512.5" cy="536.8" r="1.4"/>
<circle cx="511" cy="537.5" r="1.4"/>
<circle cx="509.5" cy="537.8" r="1.4"/>
<circle cx="508.1" cy="537.6" r="1.4"/>
<circle cx="506.8" cy="537.2" r="1.4"/>
<circle cx="505.9" cy="536.6" r="1.4"/>
<circle cx="505.1" cy="535.9" r="1.4"/>
<circle cx="504.5" cy="535.1" r="1.4"/>
<circle cx="504.6" cy="534.5" r="1.4"/>
<circle cx="504.1" cy="533.4" r="1.4"/>
<circle cx="503.9" cy="532.3" r="1.4"/>
<circle cx="503.8" cy="531" r="1.4"/>
<circle cx="503.9" cy="529.7" r="1.4"/>
<circle cx="504.3" cy="528.3" r="1.4"/>
<circle cx="505" cy="526.9" r="1.4"/>
<circle cx="506.1" cy="525.5" r="1.4"/>
<circle cx="507.5" cy="524.4" r="1.4"/>
<circle cx="509.3" cy="523.6" r="1.4"/>
<circle cx="511.4" cy="523.2" r="1.4"/>
<circle cx="513.7" cy="523.4" r="1.4"/>
<circle cx="515.8" cy="524.2" r="1.4"/>
<circle cx="517.7" cy="525.7" r="1.4"/>
<circle cx="519" cy="527.7" r="1.4"/>
<circle cx="519.7" cy="529.9" r="1.4"/>
<circle cx="519.7" cy="532.3" r="1.4"/>
<circle cx="519" cy="534.5" r="1.4"/>
<circle cx="517.8" cy="536.3" r="1.4"/>
<circle cx="516.2" cy="537.7" r="1.4"/>
<circle cx="514.4" cy="538.6" r="1.4"/>
<circle cx="512.6" cy="538.9" r="1.4"/>
<circle cx="510.8" cy="538.9" r="1.4"/>
<circle cx="509.3" cy="538.6" r="1.4"/>
<circle cx="507.9" cy="538" r="1.4"/>
<circle cx="506.8" cy="537.3" r="1.4"/>
<circle cx="505.9" cy="536.4" r="1.4"/>
<circle cx="505.1" cy="535.5" r="1.4"/>
<circle cx="504.6" cy="533.7" r="1.4"/>
<circle cx="504.2" cy="532.4" r="1.4"/>
<circle cx="503.9" cy="531" r="1.4"/>
<circle cx="503.8" cy="529.5" r="1.4"/>
<circle cx="504" cy="527.9" r="1.4"/>
<circle cx="504.4" cy="526.2" r="1.4"/>
<circle cx="505.1" cy="524.5" r="1.4"/>
<circle cx="506.2" cy="522.9" r="1.4"/>
<circle cx="507.7" cy="521.4" r="1.4"/>
<circle cx="509.6" cy="520.1" r="1.4"/>
<circle cx="511.9" cy="519.3" r="1.4"/>
<circle cx="514.4" cy="518.9" r="1.4"/>
<circle cx="517.1" cy="519.1" r="1.4"/>
<circle cx="519.7" cy="520.1" r="1.4"/>
<circle cx="522" cy="521.6" r="1.4"/>
<circle cx="523.9" cy="523.8" r="1.4"/>
<circle cx="525.2" cy="526.3" r="1.4"/>
<circle cx="525.7" cy="529.1" r="1.4"/>
<circle cx="525.4" cy="531.9" r="1.4"/>
<circle cx="524.5" cy="534.5" r="1.4"/>
<circle cx="523.1" cy="536.6" r="1.4"/>
<circle cx="521.2" cy="538.4" r="1.4"/>
<circle cx="519.1" cy="539.5" r="1.4"/>
<circle cx="516.9" cy="540.2" r="1.4"/>
<circle cx="514.8" cy="540.4" r="1.4"/>
<circle cx="512.8" cy="540.2" r="1.4"/>
<circle cx="511" cy="539.8" r="1.4"/>
<circle cx="509.4" cy="539" r="1.4"/>
<circle cx="508.1" cy="538.2" r="1.4"/>
<circle cx="506.9" cy="537.2" r="1.4"/>
<circle cx="506" cy="536.1" r="1.4"/>
<circle cx="505.2" cy="534.9" r="1.4"/>
<circle cx="505.3" cy="534.1" r="1.4"/>
<circle cx="504.7" cy="532.7" r="1.4"/>
<circle cx="504.3" cy="531.1" r="1.4"/>
<circle cx="504" cy="529.5" r="1.4"/>
<circle cx="503.9" cy="527.8" r="1.4"/>
<circle cx="504" cy="526.1" r="1.4"/>
<circle cx="504.4" cy="524.2" r="1.4"/>
<circle cx="505.1" cy="522.3" r="1.4"/>
<circle cx="506.2" cy="520.4" r="1.4"/>
<circle cx="507.6" cy="518.6" r="1.4"/>
<circle cx="509.4" cy="517" r="1.4"/>
<circle cx="511.5" cy="515.6" r="1.4"/>
<circle cx="514.1" cy="514.6" r="1.4"/>
<circle cx="516.9" cy="514" r="1.4"/>
<circle cx="519.9" cy="514.1" r="1.4"/>
<circle cx="522.9" cy="514.7" r="1.4"/>
<circle cx="525.7" cy="516.1" r="1.4"/>
<circle cx="528.2" cy="518" r="1.4"/>
<circle cx="530.3" cy="520.5" r="1.4"/>
<circle cx="531.7" cy="523.4" r="1.4"/>
<circle cx="532.4" cy="526.6" r="1.4"/>
<circle cx="532.3" cy="529.7" r="1.4"/>
<circle cx="531.6" cy="532.8" r="1.4"/>
<circle cx="530.3" cy="535.5" r="1.4"/>
<circle cx="528.4" cy="537.8" r="1.4"/>
<circle cx="526.2" cy="539.6" r="1.4"/>
<circle cx="523.9" cy="540.9" r="1.4"/>
<circle cx="521.4" cy="541.7" r="1.4"/>
<circle cx="519" cy="542.1" r="1.4"/>
<circle cx="516.6" cy="542" r="1.4"/>
<circle cx="514.5" cy="541.6" r="1.4"/>
<circle cx="512.6" cy="540.9" r="1.4"/>
<circle cx="510.9" cy="540.1" r="1.4"/>
<circle cx="509.4" cy="539.1" r="1.4"/>
<circle cx="508.1" cy="538" r="1.4"/>
<circle cx="507" cy="536.7" r="1.4"/>
<circle cx="506.1" cy="535.5" r="1.4"/>
<circle cx="505.4" cy="533" r="1.4"/>
<circle cx="504.8" cy="531.4" r="1.4"/>
<circle cx="504.3" cy="529.6" r="1.4"/>
<circle cx="504.1" cy="527.7" r="1.4"/>
<circle cx="504" cy="525.8" r="1.4"/>
<circle cx="504.2" cy="523.8" r="1.4"/>
<circle cx="504.6" cy="521.7" r="1.4"/>
<circle cx="505.3" cy="519.5" r="1.4"/>
<circle cx="506.4" cy="517.3" r="1.4"/>
<circle cx="507.8" cy="515.2" r="1.4"/>
<circle cx="509.6" cy="513.2" r="1.4"/>
<circle cx="511.9" cy="511.5" r="1.4"/>
<circle cx="514.5" cy="510" r="1.4"/>
<circle cx="517.5" cy="509" r="1.4"/>
<circle cx="520.7" cy="508.4" r="1.4"/>
<circle cx="524.1" cy="508.5" r="1.4"/>
<circle cx="527.6" cy="509.2" r="1.4"/>
<circle cx="530.9" cy="510.6" r="1.4"/>
<circle cx="533.8" cy="512.7" r="1.4"/>
<circle cx="536.4" cy="515.4" r="1.4"/>
<circle cx="538.3" cy="518.5" r="1.4"/>
<circle cx="539.6" cy="521.9" r="1.4"/>
<circle cx="540.1" cy="525.5" r="1.4"/>
<circle cx="539.9" cy="529.1" r="1.4"/>
<circle cx="538.9" cy="532.6" r="1.4"/>
<circle cx="537.3" cy="535.6" r="1.4"/>
<circle cx="535.2" cy="538.3" r="1.4"/>
<circle cx="532.8" cy="540.5" r="1.4"/>
<circle cx="530.1" cy="542.1" r="1.4"/>
<circle cx="527.3" cy="543.2" r="1.4"/>
<circle cx="524.5" cy="543.8" r="1.4"/>
<circle cx="521.8" cy="544" r="1.4"/>
<circle cx="519.2" cy="543.7" r="1.4"/>
<circle cx="516.8" cy="543.2" r="1.4"/>
<circle cx="514.7" cy="542.4" r="1.4"/>
<circle cx="512.7" cy="541.4" r="1.4"/>
<circle cx="511" cy="540.2" r="1.4"/>
<circle cx="509.5" cy="539" r="1.4"/>
<circle cx="508.2" cy="537.6" r="1.4"/>
<circle cx="507.1" cy="536.2" r="1.4"/>
<circle cx="506.2" cy="534.6" r="1.4"/>
<circle cx="506.3" cy="533.6" r="1.4"/>
<circle cx="505.5" cy="531.8" r="1.4"/>
<circle cx="504.9" cy="529.9" r="1.4"/>
<circle cx="504.4" cy="527.9" r="1.4"/>
<circle cx="504.2" cy="525.9" r="1.4"/>
<circle cx="504.1" cy="523.8" r="1.4"/>
<circle cx="504.2" cy="521.5" r="1.4"/>
<circle cx="504.6" cy="519.2" r="1.4"/>
<circle cx="505.3" cy="516.9" r="1.4"/>
<circle cx="506.3" cy="514.5" r="1.4"/>
<circle cx="507.7" cy="512.1" r="1.4"/>
<circle cx="509.4" cy="509.8" r="1.4"/>
<circle cx="511.5" cy="507.7" r="1.4"/>
<circle cx="514.1" cy="505.8" r="1.4"/>
<circle cx="517" cy="504.2" r="1.4"/>
<circle cx="520.2" cy="503" r="1.4"/>
<circle cx="523.8" cy="502.3" r="1.4"/>
<circle cx="527.5" cy="502.2" r="1.4"/>
<circle cx="531.2" cy="502.7" r="1.4"/>
<circle cx="535" cy="503.8" r="1.4"/>
<circle cx="538.5" cy="505.7" r="1.4"/>
<circle cx="541.7" cy="508.1" r="1.4"/>
<circle cx="544.4" cy="511.1" r="1.4"/>
<circle cx="546.5" cy="514.6" r="1.4"/>
<circle cx="547.9" cy="518.4" r="1.4"/>
<circle cx="548.6" cy="522.4" r="1.4"/>
<circle cx="548.6" cy="526.3" r="1.4"/>
<circle cx="547.8" cy="530.2" r="1.4"/>
<circle cx="546.4" cy="533.8" r="1.4"/>
<circle cx="544.4" cy="537" r="1.4"/>
<circle cx="542" cy="539.8" r="1.4"/>
<circle cx="539.2" cy="542" r="1.4"/>
<circle cx="536.2" cy="543.8" r="1.4"/>
<circle cx="533.2" cy="545" r="1.4"/>
<circle cx="530.1" cy="545.8" r="1.4"/>
<circle cx="527" cy="546" r="1.4"/>
<circle cx="524.1" cy="545.9" r="1.4"/>
<circle cx="521.4" cy="545.5" r="1.4"/>
<circle cx="518.9" cy="544.8" r="1.4"/>
<circle cx="516.6" cy="543.8" r="1.4"/>
<circle cx="514.5" cy="542.7" r="1.4"/>
<circle cx="512.7" cy="541.4" r="1.4"/>
<circle cx="511" cy="540" r="1.4"/>
<circle cx="509.6" cy="538.5" r="1.4"/>
<circle cx="508.3" cy="536.9" r="1.4"/>
<circle cx="507.2" cy="535.3" r="1.4"/>
<circle cx="506.4" cy="532.3" r="1.4"/>
<circle cx="505.6" cy="530.3" r="1.4"/>
<circle cx="505" cy="528.2" r="1.4"/>
<circle cx="504.5" cy="526.1" r="1.4"/>
<circle cx="504.3" cy="523.8" r="1.4"/>
<circle cx="504.2" cy="521.5" r="1.4"/>
<circle cx="504.3" cy="519.1" r="1.4"/>
<circle cx="504.7" cy="516.6" r="1.4"/>
<circle cx="505.4" cy="514" r="1.4"/>
<circle cx="506.3" cy="511.4" r="1.4"/>
<circle cx="507.6" cy="508.8" r="1.4"/>
<circle cx="509.3" cy="506.3" r="1.4"/>
<circle cx="511.3" cy="503.8" r="1.4"/>
<circle cx="513.7" cy="501.5" r="1.4"/>
<circle cx="516.5" cy="499.5" r="1.4"/>
<circle cx="519.7" cy="497.7" r="1.4"/>
<circle cx="523.2" cy="496.4" r="1.4"/>
<circle cx="527" cy="495.5" r="1.4"/>
<circle cx="531" cy="495.2" r="1.4"/>
<circle cx="535.2" cy="495.5" r="1.4"/>
<circle cx="539.3" cy="496.5" r="1.4"/>
<circle cx="543.3" cy="498.1" r="1.4"/>
<circle cx="547" cy="500.3" r="1.4"/>
<circle cx="550.4" cy="503.1" r="1.4"/>
<circle cx="553.2" cy="506.5" r="1.4"/>
<circle cx="555.5" cy="510.3" r="1.4"/>
<circle cx="557.1" cy="514.4" r="1.4"/>
<circle cx="558" cy="518.8" r="1.4"/>
<circle cx="558.1" cy="523.1" r="1.4"/>
<circle cx="557.5" cy="527.4" r="1.4"/>
<circle cx="556.3" cy="531.4" r="1.4"/>
<circle cx="554.5" cy="535.2" r="1.4"/>
<circle cx="552.1" cy="538.5" r="1.4"/>
<circle cx="549.4" cy="541.4" r="1.4"/>
<circle cx="546.3" cy="543.8" r="1.4"/>
<circle cx="543" cy="545.7" r="1.4"/>
<circle cx="539.7" cy="547" r="1.4"/>
<circle cx="536.3" cy="547.9" r="1.4"/>
<circle cx="532.9" cy="548.3" r="1.4"/>
<circle cx="529.7" cy="548.3" r="1.4"/>
<circle cx="526.7" cy="548" r="1.4"/>
<circle cx="523.8" cy="547.4" r="1.4"/>
<circle cx="521.2" cy="546.5" r="1.4"/>
<circle cx="518.7" cy="545.4" r="1.4"/>
<circle cx="516.5" cy="544.1" r="1.4"/>
<circle cx="514.5" cy="542.7" r="1.4"/>
<circle cx="512.7" cy="541.2" r="1.4"/>
<circle cx="511.1" cy="539.6" r="1.4"/>
<circle cx="509.7" cy="537.9" r="1.4"/>
<circle cx="508.4" cy="536.1" r="1.4"/>
<circle cx="507.3" cy="534.2" r="1.4"/>
<circle cx="507.4" cy="533" r="1.4"/>
<circle cx="506.5" cy="530.8" r="1.4"/>
<circle cx="505.7" cy="528.6" r="1.4"/>
<circle cx="505.1" cy="526.2" r="1.4"/>
<circle cx="504.6" cy="523.8" r="1.4"/>
<circle cx="504.4" cy="521.3" r="1.4"/>
<circle cx="504.3" cy="518.7" r="1.4"/>
<circle cx="504.5" cy="516.1" r="1.4"/>
<circle cx="504.9" cy="513.3" r="1.4"/>
<circle cx="505.6" cy="510.5" r="1.4"/>
<circle cx="506.5" cy="507.6" r="1.4"/>
<circle cx="507.9" cy="504.8" r="1.4"/>
<circle cx="509.6" cy="501.9" r="1.4"/>
<circle cx="511.6" cy="499.2" r="1.4"/>
<circle cx="514.1" cy="496.5" r="1.4"/>
<circle cx="517" cy="494.1" r="1.4"/>
<circle cx="520.2" cy="492" r="1.4"/>
<circle cx="523.8" cy="490.2" r="1.4"/>
<circle cx="527.8" cy="488.8" r="1.4"/>
<circle cx="532" cy="488" r="1.4"/>
<circle cx="536.5" cy="487.7" r="1.4"/>
<circle cx="541" cy="488" r="1.4"/>
<circle cx="545.6" cy="489" r="1.4"/>
<circle cx="550" cy="490.7" r="1.4"/>
<circle cx="554.2" cy="493" r="1.4"/>
<circle cx="558" cy="495.9" r="1.4"/>
<circle cx="561.4" cy="499.5" r="1.4"/>
<circle cx="564.2" cy="503.5" r="1.4"/>
<circle cx="566.3" cy="507.9" r="1.4"/>
<circle cx="567.8" cy="512.5" r="1.4"/>
<circle cx="568.4" cy="517.3" r="1.4"/>
<circle cx="568.4" cy="522.1" r="1.4"/>
<circle cx="567.6" cy="526.8" r="1.4"/>
<circle cx="566.1" cy="531.2" r="1.4"/>
<circle cx="564.1" cy="535.3" r="1.4"/>
<circle cx="561.5" cy="539" r="1.4"/>
<circle cx="558.5" cy="542.3" r="1.4"/>
<circle cx="555.1" cy="545" r="1.4"/>
<circle cx="551.6" cy="547.2" r="1.4"/>
<circle cx="547.9" cy="548.8" r="1.4"/>
<circle cx="544.1" cy="550" r="1.4"/>
<circle cx="540.4" cy="550.7" r="1.4"/>
<circle cx="536.8" cy="550.9" r="1.4"/>
<circle cx="533.3" cy="550.8" r="1.4"/>
<circle cx="530" cy="550.3" r="1.4"/>
<circle cx="526.9" cy="549.5" r="1.4"/>
<circle cx="524" cy="548.5" r="1.4"/>
<circle cx="521.4" cy="547.2" r="1.4"/>
<circle cx="518.9" cy="545.8" r="1.4"/>
<circle cx="516.7" cy="544.3" r="1.4"/>
<circle cx="514.7" cy="542.6" r="1.4"/>
<circle cx="512.9" cy="540.8" r="1.4"/>
<circle cx="511.3" cy="539" r="1.4"/>
<circle cx="509.8" cy="537" r="1.4"/>
<circle cx="508.6" cy="535" r="1.4"/>
<circle cx="507.6" cy="531.4" r="1.4"/>
<circle cx="506.6" cy="529.1" r="1.4"/>
<circle cx="505.8" cy="526.7" r="1.4"/>
<circle cx="505.2" cy="524.1" r="1.4"/>
<circle cx="504.8" cy="521.5" r="1.4"/>
<circle cx="504.5" cy="518.8" r="1.4"/>
<circle cx="504.4" cy="516.1" r="1.4"/>
<circle cx="504.6" cy="513.2" r="1.4"/>
<circle cx="505" cy="510.2" r="1.4"/>
<circle cx="505.6" cy="507.2" r="1.4"/>
<circle cx="506.6" cy="504.2" r="1.4"/>
<circle cx="507.9" cy="501.1" r="1.4"/>
<circle cx="509.5" cy="498" r="1.4"/>
<circle cx="511.5" cy="495" r="1.4"/>
<circle cx="513.8" cy="492" r="1.4"/>
<circle cx="516.6" cy="489.3" r="1.4"/>
<circle cx="519.7" cy="486.7" r="1.4"/>
<circle cx="523.3" cy="484.4" r="1.4"/>
<circle cx="527.2" cy="482.5" r="1.4"/>
<circle cx="531.4" cy="481" r="1.4"/>
<circle cx="535.9" cy="480" r="1.4"/>
<circle cx="540.7" cy="479.5" r="1.4"/>
<circle cx="545.5" cy="479.6" r="1.4"/>
<circle cx="550.4" cy="480.4" r="1.4"/>
<circle cx="555.3" cy="481.8" r="1.4"/>
<circle cx="560" cy="483.9" r="1.4"/>
<circle cx="564.4" cy="486.6" r="1.4"/>
<circle cx="568.4" cy="490" r="1.4"/>
<circle cx="571.9" cy="493.9" r="1.4"/>
<circle cx="574.8" cy="498.2" r="1.4"/>
<circle cx="577.1" cy="502.9" r="1.4"/>
<circle cx="578.7" cy="507.9" r="1.4"/>
<circle cx="579.6" cy="513.1" r="1.4"/>
<circle cx="579.7" cy="518.2" r="1.4"/>
<circle cx="579.1" cy="523.3" r="1.4"/>
<circle cx="577.9" cy="528.2" r="1.4"/>
<circle cx="575.9" cy="532.9" r="1.4"/>
<circle cx="573.5" cy="537.1" r="1.4"/>
<circle cx="570.5" cy="540.9" r="1.4"/>
<circle cx="567.2" cy="544.2" r="1.4"/>
<circle cx="563.6" cy="547.1" r="1.4"/>
<circle cx="559.7" cy="549.4" r="1.4"/>
<circle cx="555.7" cy="551.2" r="1.4"/>
<circle cx="551.7" cy="552.5" r="1.4"/>
<circle cx="547.7" cy="553.3" r="1.4"/>
<circle cx="543.8" cy="553.6" r="1.4"/>
<circle cx="540" cy="553.6" r="1.4"/>
<circle cx="536.3" cy="553.2" r="1.4"/>
<circle cx="532.9" cy="552.6" r="1.4"/>
<circle cx="529.7" cy="551.6" r="1.4"/>
<circle cx="526.6" cy="550.4" r="1.4"/>
<circle cx="523.8" cy="549" r="1.4"/>
<circle cx="521.2" cy="547.5" r="1.4"/>
<circle cx="518.9" cy="545.8" r="1.4"/>
<circle cx="516.7" cy="544" r="1.4"/>
<circle cx="514.8" cy="542.1" r="1.4"/>
<circle cx="513" cy="540.1" r="1.4"/>
<circle cx="511.4" cy="538.1" r="1.4"/>
<circle cx="509.9" cy="535.9" r="1.4"/>
<circle cx="508.7" cy="533.7" r="1.4"/>
<circle cx="508.8" cy="532.2" r="1.4"/>
<circle cx="507.7" cy="529.7" r="1.4"/>
<circle cx="506.7" cy="527.1" r="1.4"/>
<circle cx="505.9" cy="524.4" r="1.4"/>
<circle cx="505.3" cy="521.7" r="1.4"/>
<circle cx="504.9" cy="518.8" r="1.4"/>
<circle cx="504.6" cy="515.9" r="1.4"/>
<circle cx="504.5" cy="512.8" r="1.4"/>
<circle cx="504.7" cy="509.7" r="1.4"/>
<circle cx="505.1" cy="506.5" r="1.4"/>
<circle cx="505.8" cy="503.2" r="1.4"/>
<circle cx="506.8" cy="499.9" r="1.4"/>
<circle cx="508.1" cy="496.5" r="1.4"/>
<circle cx="509.8" cy="493.2" r="1.4"/>
<circle cx="511.8" cy="489.9" r="1.4"/>
<circle cx="514.2" cy="486.6" r="1.4"/>
<circle cx="517" cy="483.5" r="1.4"/>
<circle cx="520.2" cy="480.6" r="1.4"/>
<circle cx="523.8" cy="477.9" r="1.4"/>
<circle cx="527.8" cy="475.6" r="1.4"/>
<circle cx="532.1" cy="473.6" r="1.4"/>
<circle cx="536.8" cy="472.1" r="1.4"/>
<circle cx="541.8" cy="471.1" r="1.4"/>
<circle cx="546.9" cy="470.6" r="1.4"/>
<circle cx="552.2" cy="470.8" r="1.4"/>
<circle cx="557.6" cy="471.6" r="1.4"/>
<circle cx="562.8" cy="473" r="1.4"/>
<circle cx="568" cy="475.2" r="1.4"/>
<circle cx="572.8" cy="478" r="1.4"/>
<circle cx="577.3" cy="481.5" r="1.4"/>
<circle cx="581.3" cy="485.5" r="1.4"/>
<circle cx="584.8" cy="490.1" r="1.4"/>
<circle cx="587.7" cy="495" r="1.4"/>
<circle cx="589.8" cy="500.3" r="1.4"/>
<circle cx="591.2" cy="505.8" r="1.4"/>
<circle cx="591.9" cy="511.4" r="1.4"/>
<circle cx="591.8" cy="517.1" r="1.4"/>
<circle cx="591" cy="522.6" r="1.4"/>
<circle cx="589.5" cy="527.8" r="1.4"/>
<circle cx="587.3" cy="532.8" r="1.4"/>
<circle cx="584.6" cy="537.4" r="1.4"/>
<circle cx="581.5" cy="541.6" r="1.4"/>
<circle cx="577.9" cy="545.3" r="1.4"/>
<circle cx="573.9" cy="548.4" r="1.4"/>
<circle cx="569.8" cy="551.1" r="1.4"/>
<circle cx="565.5" cy="553.2" r="1.4"/>
<circle cx="561.1" cy="554.7" r="1.4"/>
<circle cx="556.8" cy="555.8" r="1.4"/>
<circle cx="552.5" cy="556.5" r="1.4"/>
<circle cx="548.2" cy="556.7" r="1.4"/>
<circle cx="544.2" cy="556.5" r="1.4"/>
<circle cx="540.3" cy="555.9" r="1.4"/>
<circle cx="536.6" cy="555.1" r="1.4"/>
<circle cx="533.1" cy="554" r="1.4"/>
<circle cx="529.9" cy="552.7" r="1.4"/>
<circle cx="526.9" cy="551.2" r="1.4"/>
<circle cx="524.1" cy="549.5" r="1.4"/>
<circle cx="521.5" cy="547.7" r="1.4"/>
<circle cx="519.1" cy="545.7" r="1.4"/>
<circle cx="516.9" cy="543.7" r="1.4"/>
<circle cx="515" cy="541.5" r="1.4"/>
<circle cx="513.2" cy="539.3" r="1.4"/>
<circle cx="511.6" cy="537" r="1.4"/>
<circle cx="510.1" cy="534.7" r="1.4"/>
<circle cx="509" cy="530.5" r="1.4"/>
<circle cx="507.9" cy="527.8" r="1.4"/>
<circle cx="506.9" cy="525" r="1.4"/>
<circle cx="506.1" cy="522.1" r="1.4"/>
<circle cx="505.5" cy="519.1" r="1.4"/>
<circle cx="505" cy="516.1" r="1.4"/>
<circle cx="504.7" cy="512.9" r="1.4"/>
<circle cx="504.7" cy="509.7" r="1.4"/>
<circle cx="504.9" cy="506.4" r="1.4"/>
<circle cx="505.3" cy="503" r="1.4"/>
<circle cx="505.9" cy="499.5" r="1.4"/>
<circle cx="506.9" cy="496" r="1.4"/>
<circle cx="508.1" cy="492.4" r="1.4"/>
<circle cx="509.7" cy="488.8" r="1.4"/>
<circle cx="511.7" cy="485.3" r="1.4"/>
<circle cx="514" cy="481.8" r="1.4"/>
<circle cx="516.7" cy="478.4" r="1.4"/>
<circle cx="519.8" cy="475.1" r="1.4"/>
<circle cx="523.3" cy="472.1" r="1.4"/>
<circle cx="527.2" cy="469.2" r="1.4"/>
<circle cx="531.4" cy="466.8" r="1.4"/>
<circle cx="536.1" cy="464.6" r="1.4"/>
<circle cx="541" cy="463" r="1.4"/>
<circle cx="546.2" cy="461.8" r="1.4"/>
<circle cx="551.7" cy="461.1" r="1.4"/>
<circle cx="557.3" cy="461.1" r="1.4"/>
<circle cx="563" cy="461.7" r="1.4"/>
<circle cx="568.6" cy="462.9" r="1.4"/>
<circle cx="574.2" cy="464.9" r="1.4"/>
<circle cx="579.6" cy="467.5" r="1.4"/>
<circle cx="584.6" cy="470.7" r="1.4"/>
<circle cx="589.3" cy="474.5" r="1.4"/>
<circle cx="593.5" cy="478.9" r="1.4"/>
<circle cx="597.1" cy="483.8" r="1.4"/>
<circle cx="600.1" cy="489.1" r="1.4"/>
<circle cx="602.4" cy="494.7" r="1.4"/>
<circle cx="604" cy="500.6" r="1.4"/>
<circle cx="604.9" cy="506.6" r="1.4"/>
<circle cx="605" cy="512.5" r="1.4"/>
<circle cx="604.3" cy="518.5" r="1.4"/>
<circle cx="603" cy="524.2" r="1.4"/>
<circle cx="601.1" cy="529.7" r="1.4"/>
<circle cx="598.5" cy="534.8" r="1.4"/>
<circle cx="595.4" cy="539.5" r="1.4"/>
<circle cx="591.9" cy="543.8" r="1.4"/>
<circle cx="588" cy="547.6" r="1.4"/>
<circle cx="583.7" cy="550.8" r="1.4"/>
<circle cx="579.3" cy="553.6" r="1.4"/>
<circle cx="574.7" cy="555.8" r="1.4"/>
<circle cx="570.1" cy="557.5" r="1.4"/>
<circle cx="565.4" cy="558.8" r="1.4"/>
<circle cx="560.8" cy="559.5" r="1.4"/>
<circle cx="556.3" cy="559.8" r="1.4"/>
<circle cx="551.9" cy="559.8" r="1.4"/>
<circle cx="547.7" cy="559.4" r="1.4"/>
<circle cx="543.7" cy="558.6" r="1.4"/>
<circle cx="539.8" cy="557.6" r="1.4"/>
<circle cx="536.2" cy="556.3" r="1.4"/>
<circle cx="532.8" cy="554.9" r="1.4"/>
<circle cx="529.7" cy="553.2" r="1.4"/>
<circle cx="526.7" cy="551.4" r="1.4"/>
<circle cx="524" cy="549.4" r="1.4"/>
<circle cx="521.5" cy="547.4" r="1.4"/>
<circle cx="519.2" cy="545.2" r="1.4"/>
<circle cx="517" cy="542.9" r="1.4"/>
<circle cx="515.1" cy="540.6" r="1.4"/>
<circle cx="513.3" cy="538.2" r="1.4"/>
<circle cx="511.7" cy="535.7" r="1.4"/>
<circle cx="510.3" cy="533.1" r="1.4"/>
<circle cx="510.4" cy="531.4" r="1.4"/>
<circle cx="509.1" cy="528.5" r="1.4"/>
<circle cx="508" cy="525.6" r="1.4"/>
<circle cx="507.1" cy="522.6" r="1.4"/>
<circle cx="506.2" cy="519.5" r="1.4"/>
<circle cx="505.6" cy="516.4" r="1.4"/>
<circle cx="505.2" cy="513.1" r="1.4"/>
<circle cx="504.9" cy="509.8" r="1.4"/>
<circle cx="504.8" cy="506.4" r="1.4"/>
<circle cx="505" cy="502.8" r="1.4"/>
<circle cx="505.4" cy="499.2" r="1.4"/>
<circle cx="506" cy="495.6" r="1.4"/>
<circle cx="507" cy="491.9" r="1.4"/>
<circle cx="508.2" cy="488.1" r="1.4"/>
<circle cx="509.7" cy="484.3" r="1.4"/>
<circle cx="511.6" cy="480.5" r="1.4"/>
<circle cx="513.8" cy="476.7" r="1.4"/>
<circle cx="516.5" cy="473.1" r="1.4"/>
<circle cx="519.4" cy="469.5" r="1.4"/>
<circle cx="522.8" cy="466.1" r="1.4"/>
<circle cx="526.6" cy="462.9" r="1.4"/>
<circle cx="530.8" cy="459.9" r="1.4"/>
<circle cx="535.3" cy="457.3" r="1.4"/>
<circle cx="540.2" cy="455.1" r="1.4"/>
<circle cx="545.5" cy="453.2" r="1.4"/>
<circle cx="551" cy="451.9" r="1.4"/>
<circle cx="556.7" cy="451.1" r="1.4"/>
<circle cx="562.6" cy="450.9" r="1.4"/>
<circle cx="568.6" cy="451.2" r="1.4"/>
<circle cx="574.6" cy="452.3" r="1.4"/>
<circle cx="580.6" cy="454" r="1.4"/>
<circle cx="586.4" cy="456.3" r="1.4"/>
<circle cx="592" cy="459.3" r="1.4"/>
<circle cx="597.3" cy="462.9" r="1.4"/>
<circle cx="602.1" cy="467.2" r="1.4"/>
<circle cx="606.4" cy="471.9" r="1.4"/>
<circle cx="610.2" cy="477.2" r="1.4"/>
<circle cx="613.4" cy="482.8" r="1.4"/>
<circle cx="615.9" cy="488.7" r="1.4"/>
<circle cx="617.6" cy="494.9" r="1.4"/>
<circle cx="618.7" cy="501.3" r="1.4"/>
<circle cx="619" cy="507.6" r="1.4"/>
<circle cx="618.6" cy="513.9" r="1.4"/>
<circle cx="617.4" cy="520.1" r="1.4"/>
<circle cx="615.6" cy="526" r="1.4"/>
<circle cx="613.2" cy="531.7" r="1.4"/>
<circle cx="610.3" cy="536.9" r="1.4"/>
<circle cx="606.8" cy="541.8" r="1.4"/>
<circle cx="602.9" cy="546.2" r="1.4"/>
<circle cx="598.7" cy="550.1" r="1.4"/>
<circle cx="594.2" cy="553.4" r="1.4"/>
<circle cx="589.5" cy="556.3" r="1.4"/>
<circle cx="584.6" cy="558.7" r="1.4"/>
<circle cx="579.7" cy="560.5" r="1.4"/>
<circle cx="574.7" cy="561.9" r="1.4"/>
<circle cx="569.8" cy="562.8" r="1.4"/>
<circle cx="565" cy="563.2" r="1.4"/>
<circle cx="560.3" cy="563.3" r="1.4"/>
<circle cx="555.8" cy="563" r="1.4"/>
<circle cx="551.4" cy="562.3" r="1.4"/>
<circle cx="547.2" cy="561.4" r="1.4"/>
<circle cx="543.3" cy="560.2" r="1.4"/>
<circle cx="539.5" cy="558.8" r="1.4"/>
<circle cx="536" cy="557.2" r="1.4"/>
<circle cx="532.7" cy="555.4" r="1.4"/>
<circle cx="529.6" cy="553.4" r="1.4"/>
<circle cx="526.7" cy="551.3" r="1.4"/>
<circle cx="524" cy="549.1" r="1.4"/>
<circle cx="521.5" cy="546.8" r="1.4"/>
<circle cx="519.3" cy="544.4" r="1.4"/>
<circle cx="517.2" cy="542" r="1.4"/>
<circle cx="515.2" cy="539.4" r="1.4"/>
<circle cx="513.5" cy="536.8" r="1.4"/>
<circle cx="511.9" cy="534.1" r="1.4"/>
<circle cx="510.6" cy="529.4" r="1.4"/>
<circle cx="509.3" cy="526.3" r="1.4"/>
<circle cx="508.2" cy="523.2" r="1.4"/>
<circle cx="507.2" cy="519.9" r="1.4"/>
<circle cx="506.4" cy="516.6" r="1.4"/>
<circle cx="505.7" cy="513.2" r="1.4"/>
<circle cx="505.3" cy="509.7" r="1.4"/>
<circle cx="505" cy="506.1" r="1.4"/>
<circle cx="505" cy="502.4" r="1.4"/>
<circle cx="505.2" cy="498.6" r="1.4"/>
<circle cx="505.6" cy="494.8" r="1.4"/>
<circle cx="506.3" cy="490.9" r="1.4"/>
<circle cx="507.2" cy="486.9" r="1.4"/>
<circle cx="508.5" cy="482.9" r="1.4"/>
<circle cx="510.1" cy="478.8" r="1.4"/>
<circle cx="512" cy="474.7" r="1.4"/>
<circle cx="514.2" cy="470.7" r="1.4"/>
<circle cx="516.9" cy="466.7" r="1.4"/>
<circle cx="519.9" cy="462.8" r="1.4"/>
<circle cx="523.3" cy="459.1" r="1.4"/>
<circle cx="527.2" cy="455.6" r="1.4"/>
<circle cx="531.4" cy="452.2" r="1.4"/>
<circle cx="536" cy="449.2" r="1.4"/>
<circle cx="541" cy="446.5" r="1.4"/>
<circle cx="546.4" cy="444.2" r="1.4"/>
<circle cx="552" cy="442.4" r="1.4"/>
<circle cx="558" cy="441" r="1.4"/>
<circle cx="564.1" cy="440.2" r="1.4"/>
<circle cx="570.5" cy="440" r="1.4"/>
<circle cx="576.9" cy="440.4" r="1.4"/>
<circle cx="583.4" cy="441.5" r="1.4"/>
<circle cx="589.8" cy="443.3" r="1.4"/>
<circle cx="596" cy="445.7" r="1.4"/>
<circle cx="602.1" cy="448.7" r="1.4"/>
<circle cx="607.8" cy="452.5" r="1.4"/>
<circle cx="613.1" cy="456.8" r="1.4"/>
<circle cx="617.9" cy="461.7" r="1.4"/>
<circle cx="622.2" cy="467.1" r="1.4"/>
<circle cx="625.9" cy="473" r="1.4"/>
<circle cx="629" cy="479.2" r="1.4"/>
<circle cx="631.3" cy="485.7" r="1.4"/>
<circle cx="632.9" cy="492.4" r="1.4"/>
<circle cx="633.7" cy="499.2" r="1.4"/>
<circle cx="633.8" cy="506" r="1.4"/>
<circle cx="633.2" cy="512.7" r="1.4"/>
<circle cx="631.8" cy="519.3" r="1.4"/>
<circle cx="629.8" cy="525.6" r="1.4"/>
<circle cx="627.2" cy="531.6" r="1.4"/>
<circle cx="624" cy="537.2" r="1.4"/>
<circle cx="620.3" cy="542.4" r="1.4"/>
<circle cx="616.1" cy="547.2" r="1.4"/>
<circle cx="611.7" cy="551.4" r="1.4"/>
<circle cx="606.9" cy="555.1" r="1.4"/>
<circle cx="601.9" cy="558.3" r="1.4"/>
<circle cx="596.7" cy="561" r="1.4"/>
<circle cx="591.4" cy="563.1" r="1.4"/>
<circle cx="586.1" cy="564.8" r="1.4"/>
<circle cx="580.9" cy="565.9" r="1.4"/>
<circle cx="575.6" cy="566.6" r="1.4"/>
<circle cx="570.5" cy="566.9" r="1.4"/>
<circle cx="565.6" cy="566.8" r="1.4"/>
<circle cx="560.8" cy="566.4" r="1.4"/>
<circle cx="556.1" cy="565.6" r="1.4"/>
<circle cx="551.7" cy="564.5" r="1.4"/>
<circle cx="547.5" cy="563.2" r="1.4"/>
<circle cx="543.6" cy="561.6" r="1.4"/>
<circle cx="539.8" cy="559.8" r="1.4"/>
<circle cx="536.3" cy="557.9" r="1.4"/>
<circle cx="533" cy="555.8" r="1.4"/>
<circle cx="529.9" cy="553.6" r="1.4"/>
<circle cx="527" cy="551.2" r="1.4"/>
<circle cx="524.3" cy="548.8" r="1.4"/>
<circle cx="521.8" cy="546.3" r="1.4"/>
<circle cx="519.5" cy="543.6" r="1.4"/>
<circle cx="517.4" cy="540.9" r="1.4"/>
<circle cx="515.5" cy="538.2" r="1.4"/>
<circle cx="513.7" cy="535.3" r="1.4"/>
<circle cx="512.1" cy="532.4" r="1.4"/>
<circle cx="512.2" cy="530.4" r="1.4"/>
<circle cx="510.8" cy="527.2" r="1.4"/>
<circle cx="509.5" cy="523.9" r="1.4"/>
<circle cx="508.3" cy="520.6" r="1.4"/>
<circle cx="507.4" cy="517.1" r="1.4"/>
<circle cx="506.6" cy="513.6" r="1.4"/>
<circle cx="505.9" cy="510" r="1.4"/>
<circle cx="505.5" cy="506.3" r="1.4"/>
<circle cx="505.2" cy="502.5" r="1.4"/>
<circle cx="505.2" cy="498.6" r="1.4"/>
<circle cx="505.3" cy="494.7" r="1.4"/>
<circle cx="505.7" cy="490.6" r="1.4"/>
<circle cx="506.4" cy="486.5" r="1.4"/>
<circle cx="507.3" cy="482.3" r="1.4"/>
<circle cx="508.6" cy="478.1" r="1.4"/>
<circle cx="510.1" cy="473.8" r="1.4"/>
<circle cx="511.9" cy="469.5" r="1.4"/>
<circle cx="514.1" cy="465.3" r="1.4"/>
<circle cx="516.7" cy="461.1" r="1.4"/>
<circle cx="519.7" cy="456.9" r="1.4"/>
<circle cx="523" cy="452.9" r="1.4"/>
<circle cx="526.7" cy="449" r="1.4"/>
<circle cx="530.8" cy="445.3" r="1.4"/>
<circle cx="535.3" cy="441.8" r="1.4"/>
<circle cx="540.2" cy="438.6" r="1.4"/>
<circle cx="545.5" cy="435.8" r="1.4"/>
<circle cx="551.1" cy="433.4" r="1.4"/>
<circle cx="557.1" cy="431.4" r="1.4"/>
<circle cx="563.3" cy="429.9" r="1.4"/>
<circle cx="569.7" cy="428.9" r="1.4"/>
<circle cx="576.4" cy="428.5" r="1.4"/>
<circle cx="583.1" cy="428.7" r="1.4"/>
<circle cx="589.9" cy="429.6" r="1.4"/>
<circle cx="596.7" cy="431.1" r="1.4"/>
<circle cx="603.4" cy="433.3" r="1.4"/>
<circle cx="609.9" cy="436.1" r="1.4"/>
<circle cx="616.1" cy="439.6" r="1.4"/>
<circle cx="622.1" cy="443.7" r="1.4"/>
<circle cx="627.6" cy="448.5" r="1.4"/>
<circle cx="632.6" cy="453.7" r="1.4"/>
<circle cx="637" cy="459.5" r="1.4"/>
<circle cx="640.9" cy="465.7" r="1.4"/>
<circle cx="644.1" cy="472.2" r="1.4"/>
<circle cx="646.5" cy="479.1" r="1.4"/>
<circle cx="648.3" cy="486.1" r="1.4"/>
<circle cx="649.3" cy="493.3" r="1.4"/>
<circle cx="649.6" cy="500.4" r="1.4"/>
<circle cx="649.2" cy="507.6" r="1.4"/>
<circle cx="648" cy="514.5" r="1.4"/>
<circle cx="646.2" cy="521.3" r="1.4"/>
<circle cx="643.7" cy="527.8" r="1.4"/>
<circle cx="640.7" cy="534" r="1.4"/>
<circle cx="637.1" cy="539.7" r="1.4"/>
<circle cx="633" cy="545" r="1.4"/>
<circle cx="628.6" cy="549.9" r="1.4"/>
<circle cx="623.8" cy="554.2" r="1.4"/>
<circle cx="618.7" cy="558.1" r="1.4"/>
<circle cx="613.4" cy="561.4" r="1.4"/>
<circle cx="607.9" cy="564.1" r="1.4"/>
<circle cx="602.4" cy="566.4" r="1.4"/>
<circle cx="596.8" cy="568.2" r="1.4"/>
<circle cx="591.2" cy="569.5" r="1.4"/>
<circle cx="585.7" cy="570.3" r="1.4"/>
<circle cx="580.3" cy="570.8" r="1.4"/>
<circle cx="575" cy="570.8" r="1.4"/>
<circle cx="569.9" cy="570.4" r="1.4"/>
<circle cx="564.9" cy="569.7" r="1.4"/>
<circle cx="560.2" cy="568.8" r="1.4"/>
<circle cx="555.6" cy="567.5" r="1.4"/>
<circle cx="551.3" cy="566" r="1.4"/>
<circle cx="547.2" cy="564.3" r="1.4"/>
<circle cx="543.3" cy="562.4" r="1.4"/>
<circle cx="539.6" cy="560.3" r="1.4"/>
<circle cx="536.2" cy="558.1" r="1.4"/>
<circle cx="532.9" cy="555.7" r="1.4"/>
<circle cx="529.9" cy="553.3" r="1.4"/>
<circle cx="527" cy="550.7" r="1.4"/>
<circle cx="524.4" cy="548" r="1.4"/>
<circle cx="521.9" cy="545.3" r="1.4"/>
<circle cx="519.7" cy="542.4" r="1.4"/>
<circle cx="517.6" cy="539.5" r="1.4"/>
<circle cx="515.6" cy="536.6" r="1.4"/>
<circle cx="513.9" cy="533.5" r="1.4"/>
<circle cx="512.4" cy="528.2" r="1.4"/>
<circle cx="511" cy="524.7" r="1.4"/>
<circle cx="509.6" cy="521.2" r="1.4"/>
<circle cx="508.5" cy="517.6" r="1.4"/>
<circle cx="507.5" cy="514" r="1.4"/>
<circle cx="506.7" cy="510.2" r="1.4"/>
<circle cx="506.1" cy="506.3" r="1.4"/>
<circle cx="505.6" cy="502.4" r="1.4"/>
<circle cx="505.4" cy="498.3" r="1.4"/>
<circle cx="505.3" cy="494.2" r="1.4"/>
<circle cx="505.5" cy="490" r="1.4"/>
<circle cx="506" cy="485.7" r="1.4"/>
<circle cx="506.7" cy="481.3" r="1.4"/>
<circle cx="507.6" cy="476.9" r="1.4"/>
<circle cx="508.9" cy="472.4" r="1.4"/>
<circle cx="510.4" cy="467.9" r="1.4"/>
<circle cx="512.3" cy="463.3" r="1.4"/>
<circle cx="514.6" cy="458.8" r="1.4"/>
<circle cx="517.2" cy="454.2" r="1.4"/>
<circle cx="520.1" cy="449.8" r="1.4"/>
<circle cx="523.5" cy="445.4" r="1.4"/>
<circle cx="527.3" cy="441.2" r="1.4"/>
<circle cx="531.4" cy="437.2" r="1.4"/>
<circle cx="536" cy="433.4" r="1.4"/>
<circle cx="541" cy="429.8" r="1.4"/>
<circle cx="546.3" cy="426.5" r="1.4"/>
<circle cx="552" cy="423.7" r="1.4"/>
<circle cx="558.1" cy="421.2" r="1.4"/>
<circle cx="564.5" cy="419.2" r="1.4"/>
<circle cx="571.1" cy="417.7" r="1.4"/>
<circle cx="578" cy="416.7" r="1.4"/>
<circle cx="585.1" cy="416.3" r="1.4"/>
<circle cx="592.3" cy="416.6" r="1.4"/>
<circle cx="599.5" cy="417.5" r="1.4"/>
<circle cx="606.7" cy="419.1" r="1.4"/>
<circle cx="613.8" cy="421.3" r="1.4"/>
<circle cx="620.8" cy="424.2" r="1.4"/>
<circle cx="627.5" cy="427.8" r="1.4"/>
<circle cx="633.8" cy="432" r="1.4"/>
<circle cx="639.8" cy="436.8" r="1.4"/>
<circle cx="645.3" cy="442.2" r="1.4"/>
<circle cx="650.3" cy="448.2" r="1.4"/>
<circle cx="654.7" cy="454.6" r="1.4"/>
<circle cx="658.4" cy="461.4" r="1.4"/>
<circle cx="661.5" cy="468.5" r="1.4"/>
<circle cx="663.8" cy="475.9" r="1.4"/>
<circle cx="665.3" cy="483.4" r="1.4"/>
<circle cx="666.2" cy="491" r="1.4"/>
<circle cx="666.2" cy="498.6" r="1.4"/>
<circle cx="665.6" cy="506.2" r="1.4"/>
<circle cx="664.2" cy="513.6" r="1.4"/>
<circle cx="662.2" cy="520.7" r="1.4"/>
<circle cx="659.5" cy="527.6" r="1.4"/>
<circle cx="656.2" cy="534.1" r="1.4"/>
<circle cx="652.4" cy="540.2" r="1.4"/>
<circle cx="648.1" cy="545.9" r="1.4"/>
<circle cx="643.3" cy="551.1" r="1.4"/>
<circle cx="638.3" cy="555.8" r="1.4"/>
<circle cx="632.9" cy="559.9" r="1.4"/>
<circle cx="627.3" cy="563.6" r="1.4"/>
<circle cx="621.6" cy="566.7" r="1.4"/>
<circle cx="615.7" cy="569.2" r="1.4"/>
<circle cx="609.8" cy="571.3" r="1.4"/>
<circle cx="603.8" cy="572.9" r="1.4"/>
<circle cx="598" cy="574" r="1.4"/>
<circle cx="592.1" cy="574.7" r="1.4"/>
<circle cx="586.4" cy="574.9" r="1.4"/>
<circle cx="580.9" cy="574.8" r="1.4"/>
<circle cx="575.5" cy="574.2" r="1.4"/>
<circle cx="570.3" cy="573.4" r="1.4"/>
<circle cx="565.3" cy="572.3" r="1.4"/>
<circle cx="560.5" cy="570.9" r="1.4"/>
<circle cx="556" cy="569.2" r="1.4"/>
<circle cx="551.6" cy="567.4" r="1.4"/>
<circle cx="547.5" cy="565.3" r="1.4"/>
<circle cx="543.6" cy="563.1" r="1.4"/>
<circle cx="539.9" cy="560.8" r="1.4"/>
<circle cx="536.5" cy="558.3" r="1.4"/>
<circle cx="533.2" cy="555.6" r="1.4"/>
<circle cx="530.2" cy="552.9" r="1.4"/>
<circle cx="527.4" cy="550.1" r="1.4"/>
<circle cx="524.7" cy="547.2" r="1.4"/>
<circle cx="522.2" cy="544.2" r="1.4"/>
<circle cx="519.9" cy="541.2" r="1.4"/>
<circle cx="517.8" cy="538" r="1.4"/>
<circle cx="515.9" cy="534.8" r="1.4"/>
<circle cx="514.1" cy="531.5" r="1.4"/>
<circle cx="514.3" cy="529.3" r="1.4"/>
<circle cx="512.6" cy="525.8" r="1.4"/>
<circle cx="511.2" cy="522.1" r="1.4"/>
<circle cx="509.9" cy="518.4" r="1.4"/>
<circle cx="508.7" cy="514.6" r="1.4"/>
<circle cx="507.7" cy="510.7" r="1.4"/>
<circle cx="506.9" cy="506.8" r="1.4"/>
<circle cx="506.3" cy="502.7" r="1.4"/>
<circle cx="505.8" cy="498.6" r="1.4"/>
<circle cx="505.6" cy="494.3" r="1.4"/>
<circle cx="505.5" cy="490" r="1.4"/>
<circle cx="505.7" cy="485.6" r="1.4"/>
<circle cx="506.1" cy="481.1" r="1.4"/>
<circle cx="506.8" cy="476.5" r="1.4"/>
<circle cx="507.7" cy="471.9" r="1.4"/>
<circle cx="509" cy="467.2" r="1.4"/>
<circle cx="510.5" cy="462.5" r="1.4"/>
<circle cx="512.3" cy="457.7" r="1.4"/>
<circle cx="514.5" cy="452.9" r="1.4"/>
<circle cx="517" cy="448.2" r="1.4"/>
<circle cx="519.9" cy="443.5" r="1.4"/>
<circle cx="523.2" cy="438.9" r="1.4"/>
<circle cx="526.9" cy="434.3" r="1.4"/>
<circle cx="530.9" cy="430" r="1.4"/>
<circle cx="535.4" cy="425.8" r="1.4"/>
<circle cx="540.2" cy="421.8" r="1.4"/>
<circle cx="545.5" cy="418.1" r="1.4"/>
<circle cx="551.1" cy="414.7" r="1.4"/>
<circle cx="557.1" cy="411.7" r="1.4"/>
<circle cx="563.5" cy="409.1" r="1.4"/>
<circle cx="570.1" cy="406.9" r="1.4"/>
<circle cx="577" cy="405.3" r="1.4"/>
<circle cx="584.2" cy="404.1" r="1.4"/>
<circle cx="591.6" cy="403.6" r="1.4"/>
<circle cx="599.1" cy="403.6" r="1.4"/>
<circle cx="606.6" cy="404.3" r="1.4"/>
<circle cx="614.2" cy="405.6" r="1.4"/>
<circle cx="621.7" cy="407.6" r="1.4"/>
<circle cx="629.1" cy="410.3" r="1.4"/>
<circle cx="636.3" cy="413.7" r="1.4"/>
<circle cx="643.2" cy="417.6" r="1.4"/>
<circle cx="649.8" cy="422.3" r="1.4"/>
<circle cx="655.9" cy="427.5" r="1.4"/>
<circle cx="661.6" cy="433.3" r="1.4"/>
<circle cx="666.7" cy="439.6" r="1.4"/>
<circle cx="671.2" cy="446.3" r="1.4"/>
<circle cx="675.1" cy="453.4" r="1.4"/>
<circle cx="678.3" cy="460.9" r="1.4"/>
<circle cx="680.8" cy="468.6" r="1.4"/>
<circle cx="682.6" cy="476.5" r="1.4"/>
<circle cx="683.6" cy="484.4" r="1.4"/>
<circle cx="683.9" cy="492.4" r="1.4"/>
<circle cx="683.4" cy="500.4" r="1.4"/>
<circle cx="682.2" cy="508.2" r="1.4"/>
<circle cx="680.4" cy="515.8" r="1.4"/>
<circle cx="677.9" cy="523.1" r="1.4"/>
<circle cx="674.7" cy="530.1" r="1.4"/>
<circle cx="671" cy="536.8" r="1.4"/>
<circle cx="666.8" cy="543" r="1.4"/>
<circle cx="662.2" cy="548.8" r="1.4"/>
<circle cx="657.1" cy="554.1" r="1.4"/>
<circle cx="651.7" cy="558.9" r="1.4"/>
<circle cx="646.1" cy="563.2" r="1.4"/>
<circle cx="640.2" cy="566.9" r="1.4"/>
<circle cx="634.2" cy="570.1" r="1.4"/>
<circle cx="628" cy="572.9" r="1.4"/>
<circle cx="621.8" cy="575.1" r="1.4"/>
<circle cx="615.6" cy="576.8" r="1.4"/>
<circle cx="609.4" cy="578" r="1.4"/>
<circle cx="603.3" cy="578.8" r="1.4"/>
<circle cx="597.3" cy="579.2" r="1.4"/>
<circle cx="591.4" cy="579.2" r="1.4"/>
<circle cx="585.7" cy="578.8" r="1.4"/>
<circle cx="580.2" cy="578" r="1.4"/>
<circle cx="574.8" cy="577" r="1.4"/>
<circle cx="569.7" cy="575.7" r="1.4"/>
<circle cx="564.8" cy="574.1" r="1.4"/>
<circle cx="560.1" cy="572.3" r="1.4"/>
<circle cx="555.6" cy="570.3" r="1.4"/>
<circle cx="551.3" cy="568.1" r="1.4"/>
<circle cx="547.3" cy="565.8" r="1.4"/>
<circle cx="543.5" cy="563.3" r="1.4"/>
<circle cx="539.9" cy="560.7" r="1.4"/>
<circle cx="536.5" cy="557.9" r="1.4"/>
<circle cx="533.3" cy="555.1" r="1.4"/>
<circle cx="530.3" cy="552.1" r="1.4"/>
<circle cx="527.5" cy="549.1" r="1.4"/>
<circle cx="524.8" cy="546" r="1.4"/>
<circle cx="522.4" cy="542.8" r="1.4"/>
<circle cx="520.1" cy="539.5" r="1.4"/>
<circle cx="518" cy="536.2" r="1.4"/>
<circle cx="516.1" cy="532.8" r="1.4"/>
</g>
<path d="M63.4 628.9 V298 a4 4 0 0 1 4 -4 H406.6 a4 4 0 0 1 4 4 V628.9 z" fill="url(#glass)"/>
<path d="M63.9 317.7 V298.4 a4 4 0 0 1 4 -4 H406 a4 4 0 0 1 4 4 V317.7 z" fill="url(#tg)"/>
<path d="M64.6 627.4 V299 a3.5 3.5 0 0 1 3.5 -3.5 H405.6" fill="none" stroke="#fff" stroke-opacity=".55" stroke-width=".8"/>
<path d="M63.85 298.45 a4 4 0 0 1 4 -4 H406.15 a4 4 0 0 1 4 4" fill="none" stroke="#686d74" stroke-width="0.9"/>
<path d="M63.98 298 V628.9" stroke="#8d939a" stroke-width="1.17" fill="none"/>
<path d="M409.75 298 V628.9" stroke="#5b8398" stroke-width="1.69" fill="none"/>
<path d="M63.9 627.99 H410.1" stroke="#78cce0" stroke-width="1.82" fill="none"/>
<rect x="72" y="302.5" width="12" height="12" fill="#111" />
<circle cx="82.32" cy="308.5" r="1.02" fill="#a89a2c"/>
<circle cx="81.05" cy="311.55" r="1.02" fill="#a89a2c"/>
<circle cx="78" cy="312.82" r="1.02" fill="#a89a2c"/>
<circle cx="74.95" cy="311.55" r="1.02" fill="#a89a2c"/>
<circle cx="73.68" cy="308.5" r="1.02" fill="#a89a2c"/>
<circle cx="74.95" cy="305.45" r="1.02" fill="#a89a2c"/>
<circle cx="78" cy="304.18" r="1.02" fill="#a89a2c"/>
<circle cx="81.05" cy="305.45" r="1.02" fill="#a89a2c"/>
<path d="M75.6 306.1L80.4 310.9M80.4 306.1L75.6 310.9" stroke="#b03a48" stroke-width="1.68"/>
<circle cx="78" cy="308.5" r="0.84" fill="#a89a2c"/>
<text x="86.7" y="312.7" font-size="9.9" fill="#111" textLength="88.7" lengthAdjust="spacingAndGlyphs" >4: System 3D Result</text>
<rect x="324.5" y="301.2" width="24.5" height="14.3" rx="2" fill="url(#btn)" stroke="#6f87a6" stroke-width="0.7"/>
<rect x="325.2" y="301.9" width="23.1" height="12.9" rx="1.4" fill="none" stroke="#fff" stroke-opacity=".6" stroke-width="0.5"/>
<rect x="333.07" y="308.7" width="7.36" height="2.76" rx="0.92" fill="#fff" stroke="#4a5a70" stroke-width="0.69"/>
<rect x="351" y="301.2" width="24.3" height="14.3" rx="2" fill="url(#btn)" stroke="#6f87a6" stroke-width="0.7"/>
<rect x="351.7" y="301.9" width="22.9" height="12.9" rx="1.4" fill="none" stroke="#fff" stroke-opacity=".6" stroke-width="0.5"/>
<rect x="359.93" y="305.48" width="6.44" height="5.29" rx="0.92" fill="#fff" stroke="#4a5a70" stroke-width="0.69"/>
<rect x="361.65" y="307.2" width="2.99" height="1.84" fill="#5a6a85"/>
<rect x="377.5" y="301.2" width="24.5" height="14.3" rx="2" fill="url(#cls)" stroke="#7a3a30" stroke-width="0.7"/>
<rect x="378.2" y="301.9" width="23.1" height="12.9" rx="1.4" fill="none" stroke="#fff" stroke-opacity=".45" stroke-width="0.5"/>
<path d="M387.11 305.91L392.39 311.19M392.39 305.91L387.11 311.19" stroke="#5a2a25" stroke-width="2.99" stroke-linecap="round"/>
<path d="M387.11 305.91L392.39 311.19M392.39 305.91L387.11 311.19" stroke="#fff" stroke-width="1.72" stroke-linecap="round"/>
<rect x="69.8" y="317.7" width="333.6" height="304.6" fill="#f0f0f0" />
<rect x="72" y="320" width="41.3" height="13.6" fill="#fff" stroke="#8e8e8e" stroke-width=".7"/>
<rect x="73.3" y="321.3" width="38.7" height="11" fill="none" stroke="#555" stroke-width=".5" stroke-dasharray="0.7 0.7"/>
<text x="76.1" y="329.6" font-size="8.9" fill="#111" textLength="32.4" lengthAdjust="spacingAndGlyphs" >3D View</text>
<rect x="72" y="334.8" width="328.8" height="284.8" fill="#8f8f8f" />
<rect x="72.6" y="335.4" width="327.6" height="283.6" fill="url(#v2)" />
<g fill="none" stroke="#555" stroke-width="1.1" stroke-linecap="round" stroke-linejoin="round" opacity="1">
<path d="M148.84 351.75 H143.76 V342.87 H152.6 V347.97" stroke-width="0.94"/>
<circle cx="153.16" cy="352.32" r="4.7"/>
<path d="M156.74 355.91 L161.44 360.63" stroke-width="1.76"/>
<path d="M153.16 349.86 V352.69 H150.91" stroke-width="0.77"/>
</g>
<g fill="none" stroke="#555" stroke-width="1.3" stroke-linecap="round" opacity="1">
<circle cx="179.34" cy="349.53" r="6.39"/>
<path d="M184.23 354.34 L190.25 360.26" stroke-width="2.08"/>
</g>
<rect x="198" y="339.5" width="25" height="24.3" fill="#f0a3b3" />
<g stroke="#555" stroke-width="1.1" stroke-linecap="round" stroke-linejoin="round" fill="#555" opacity="1">
<path d="M203.01 351.7H217.99M210.5 344.21V359.19" fill="none"/>
<path d="M220.1 351.7L217.35 353.81L217.35 349.59z"/>
<path d="M200.9 351.7L203.65 349.59L203.65 353.81z"/>
<path d="M210.5 361.3L208.39 358.55L212.61 358.55z"/>
<path d="M210.5 342.1L212.61 344.85L208.39 344.85z"/>
</g>
<g fill="none" stroke="#555" stroke-width="1.3" stroke-linecap="round" stroke-linejoin="round" opacity="1">
<path d="M232.81 349.32 A8.04 8.04 0 1 1 233.94 357.89"/>
<path d="M232.25 343.92 V349.32 H238.42"/>
</g>
<line x1="258.2" y1="347" x2="258.2" y2="357" stroke="#555" stroke-width="0.9" />
<g fill="none" stroke="#555" stroke-width="1.1" opacity="1">
<circle cx="278" cy="351.7" r="9.3"/>
<path d="M269.17 350.77 Q278 343.8 286.83 350.77"/>
<path d="M273.35 351.24 A4.65 5.12 0 0 0 282.65 351.24 z" fill="#555" stroke="none"/>
</g>
<line x1="297.5" y1="347" x2="297.5" y2="357" stroke="#555" stroke-width="0.9" />
<g fill="none" stroke="#555" stroke-width="1.25" stroke-linecap="round" stroke-linejoin="round" opacity="1">
<path d="M312.95 347.95L308.4 343.4M311.68 343.4H308.4V346.68"/>
<path d="M321.35 347.95L325.9 343.4M322.62 343.4H325.9V346.68"/>
<path d="M312.95 355.75L308.4 360.3M311.68 360.3H308.4V357.02"/>
<path d="M321.35 355.75L325.9 360.3M322.62 360.3H325.9V357.02"/>
</g>
<ellipse cx="354.5" cy="394.2" rx="37" ry="3.6" fill="none" stroke="#b4b4b4" stroke-width=".8"/>
<ellipse cx="354.5" cy="394.2" rx="34" ry="2.6" fill="#e2e2e2" opacity=".5"/>
<rect x="338" y="365" width="32.5" height="32.5" fill="#747474" stroke="#fafafa" stroke-width=".8"/>
<path d="M348 397.6 h13 l-2 2 h-8z" fill="#555"/>
<path d="M320 393.2 l-2.5 1 l2.6 1M389 393.2 l2.5 1 l-2.6 1" stroke="#666" stroke-width=".7" fill="none"/>
<text x="354.3" y="385.2" font-size="6.6" fill="#fff" text-anchor="middle" font-weight="bold" >zy</text>
<defs><linearGradient id="l2" x1="0" y1="0" x2="1" y2="0"><stop offset="0" stop-color="#a38e5c"/><stop offset="1" stop-color="#7b6a46"/></linearGradient><linearGradient id="l1" x1="0" y1="0" x2="1" y2="0"><stop offset="0" stop-color="#7d7464"/><stop offset="0.5" stop-color="#94825a"/><stop offset="1" stop-color="#7a6844"/></linearGradient></defs>
<path d="M224.6 399.5 L215.4 428.5 V564 L224.6 593 z" fill="#d2d2d2" stroke="#777" stroke-width=".4"/>
<path d="M224.6 399.5 Q243.5 496 224.6 593 z" fill="url(#l1)" fill-opacity=".95"/>
<path d="M215.4 436 Q219 452 224.6 476 V524 Q219 545 215.4 560 z" fill="#857a66" fill-opacity=".9"/>
<path d="M215.4 428.5 L224.6 476 V440 z" fill="#bdbdbd" fill-opacity=".5"/>
<path d="M240.7 393 V599.5" stroke="#6d6d6d" stroke-width="1.1"/>
<path d="M247 393 Q298 497 247 600 z" fill="url(#l2)"/>
<path d="M179.3 480.8 L200 462.5 L215 447.5 L232.5 431.5 L245 425 L257 423.6 L262.5 427 L264.5 431.5 L299.5 442 L299.5 442.6 L268 447 L250 457.5 L232.5 468.8 L215 483.8 L200 497.5 L179.3 511.2z" fill="#ffb400" fill-opacity=".8"/>
<path d="M264.5 431.5 L299.5 442 L268 447 z" fill="#ffb000"/>
<path d="M179.3 484.18 Q215 451 258 427.11" stroke="#ffd763" stroke-width=".35" fill="none" opacity=".8"/>
<path d="M179.3 487.56 Q215 455 258 430.22" stroke="#ffd763" stroke-width=".35" fill="none" opacity=".8"/>
<path d="M179.3 490.93 Q215 459 258 433.33" stroke="#ffd763" stroke-width=".35" fill="none" opacity=".8"/>
<path d="M179.3 494.31 Q215 463 258 436.44" stroke="#ffd763" stroke-width=".35" fill="none" opacity=".8"/>
<path d="M179.3 497.69 Q215 467 258 439.56" stroke="#ffd763" stroke-width=".35" fill="none" opacity=".8"/>
<path d="M179.3 501.07 Q215 471 258 442.67" stroke="#ffd763" stroke-width=".35" fill="none" opacity=".8"/>
<path d="M179.3 504.44 Q215 475 258 445.78" stroke="#ffd763" stroke-width=".35" fill="none" opacity=".8"/>
<path d="M179.3 507.82 Q215 479 258 448.89" stroke="#ffd763" stroke-width=".35" fill="none" opacity=".8"/>
<path d="M179.2 480.5 V511.5" stroke="#555" stroke-width="1.2"/>
<path d="M224.6 399.5 Q243.5 496 224.6 593 z" fill="#8a7850" fill-opacity=".38"/>
<path d="M215.4 436 Q219 452 224.6 476 V524 Q219 545 215.4 560 z" fill="#857a66" fill-opacity=".35"/>
<path d="M247 393 Q298 497 247 600 z" fill="#8e7a4c" fill-opacity=".38"/>
<path d="M224.7 400 V593M247 393 V600M215.6 428.5 V564" stroke="#33291a" stroke-width=".8" fill="none"/>
<path d="M224.6 399.5 L215.4 428.5M224.6 593L215.4 564" stroke="#555" stroke-width=".5" fill="none"/>
<path d="M240.7 393 V599.5" stroke="#6d6d6d" stroke-width="1"/>
<circle cx="109.2" cy="583.3" r="3" fill="#555"/><circle cx="108.6" cy="582.6" r="1.2" fill="#999"/>
<path d="M109.3 582 V565" stroke="#18b018" stroke-width="2.2"/><path d="M109.3 553.5 L113 567 H105.6z" fill="#18b018"/>
<path d="M111 583.3 H128" stroke="#0000f0" stroke-width="2.2"/><path d="M139 583.3 L126 579.6 V587z" fill="#0000f0"/>
<text x="112" y="549.5" font-size="9.5" fill="#222" font-family="Liberation Serif, serif" font-style="italic">y</text>
<text x="111.8" y="578.8" font-size="9.5" fill="#222" font-family="Liberation Serif, serif" font-style="italic">x</text>
<text x="140.5" y="579" font-size="9.5" fill="#222" font-family="Liberation Serif, serif" font-style="italic">z</text>
<text x="357.2" y="603.6" font-size="9.6" fill="#333" text-anchor="middle" textLength="30.5" lengthAdjust="spacingAndGlyphs" >20 mm</text>
<path d="M320.3 609v5M393 609v5M320.3 611.5H393" stroke="#333" stroke-width=".8" fill="none"/>
<path d="M473.2 324.8 V25 a3 3 0 0 1 3 -3 H832.5 a3 3 0 0 1 3 3 V324.8 z" fill="url(#glass)"/>
<path d="M473.7 40 V25.4 a3 3 0 0 1 3 -3 H831.9 a3 3 0 0 1 3 3 V40 z" fill="url(#tg)"/>
<path d="M474.4 323.3 V26 a2.5 2.5 0 0 1 2.5 -2.5 H831.5" fill="none" stroke="#fff" stroke-opacity=".55" stroke-width=".8"/>
<path d="M473.65 25.45 a3 3 0 0 1 3 -3 H832.05 a3 3 0 0 1 3 3" fill="none" stroke="#686d74" stroke-width="0.9"/>
<path d="M473.65 25 V324.8" stroke="#8d939a" stroke-width="0.9" fill="none"/>
<path d="M834.85 25 V324.8" stroke="#5b8398" stroke-width="1.3" fill="none"/>
<path d="M473.7 324.1 H835" stroke="#78cce0" stroke-width="1.4" fill="none"/>
<rect x="478.9" y="27.6" width="9.2" height="9.2" fill="#111" />
<circle cx="486.81" cy="32.2" r="0.78" fill="#a89a2c"/>
<circle cx="485.84" cy="34.54" r="0.78" fill="#a89a2c"/>
<circle cx="483.5" cy="35.51" r="0.78" fill="#a89a2c"/>
<circle cx="481.16" cy="34.54" r="0.78" fill="#a89a2c"/>
<circle cx="480.19" cy="32.2" r="0.78" fill="#a89a2c"/>
<circle cx="481.16" cy="29.86" r="0.78" fill="#a89a2c"/>
<circle cx="483.5" cy="28.89" r="0.78" fill="#a89a2c"/>
<circle cx="485.84" cy="29.86" r="0.78" fill="#a89a2c"/>
<path d="M481.66 30.36L485.34 34.04M485.34 30.36L481.66 34.04" stroke="#b03a48" stroke-width="1.29"/>
<circle cx="483.5" cy="32.2" r="0.64" fill="#a89a2c"/>
<text x="490.6" y="35.4" font-size="7.3" fill="#111" textLength="251.5" lengthAdjust="spacingAndGlyphs" >29: Camera Detector #600 after Lens with Indexmodulation #1 (T) (Ray Tracing)</text>
<rect x="770" y="27.5" width="18.7" height="10.5" rx="1.6" fill="url(#btn)" stroke="#6f87a6" stroke-width="0.7"/>
<rect x="770.7" y="28.2" width="17.3" height="9.1" rx="1.12" fill="none" stroke="#fff" stroke-opacity=".6" stroke-width="0.5"/>
<rect x="776.63" y="33.01" width="5.44" height="2.04" rx="0.68" fill="#fff" stroke="#4a5a70" stroke-width="0.51"/>
<rect x="790.5" y="27.5" width="18.5" height="10.5" rx="1.6" fill="url(#btn)" stroke="#6f87a6" stroke-width="0.7"/>
<rect x="791.2" y="28.2" width="17.1" height="9.1" rx="1.12" fill="none" stroke="#fff" stroke-opacity=".6" stroke-width="0.5"/>
<rect x="797.37" y="30.62" width="4.76" height="3.91" rx="0.68" fill="#fff" stroke="#4a5a70" stroke-width="0.51"/>
<rect x="798.64" y="31.9" width="2.21" height="1.36" fill="#5a6a85"/>
<rect x="810.7" y="27.5" width="19.8" height="10.5" rx="1.6" fill="url(#cls)" stroke="#7a3a30" stroke-width="0.7"/>
<rect x="811.4" y="28.2" width="18.4" height="9.1" rx="1.12" fill="none" stroke="#fff" stroke-opacity=".45" stroke-width="0.5"/>
<path d="M818.64 31L822.56 34.91M822.56 31L818.64 34.91" stroke="#5a2a25" stroke-width="2.21" stroke-linecap="round"/>
<path d="M818.64 31L822.56 34.91M822.56 31L818.64 34.91" stroke="#fff" stroke-width="1.27" stroke-linecap="round"/>
<rect x="477" y="40" width="354" height="12.4" fill="#dffcfd" />
<rect x="477" y="52.4" width="354" height="265.6" fill="#f0f0f0" />
<line x1="477" y1="52.5" x2="831" y2="52.5" stroke="#777" stroke-width="0.8" />
<rect x="478.2" y="53" width="351.6" height="264.8" fill="none" stroke="#a8a8a8" stroke-width=".7"/>
<text x="654.3" y="48.2" font-size="7" fill="#222" text-anchor="middle" textLength="48" lengthAdjust="spacingAndGlyphs" >Ray Distribution</text>
<text x="654.5" y="64.6" font-size="7.1" fill="#333" text-anchor="middle" textLength="25" lengthAdjust="spacingAndGlyphs" >Position</text>
<rect x="575.5" y="77.5" width="195" height="194.5" fill="#000" />
<path d="M605 272v2.6M639 272v2.6M673 272v2.6M707 272v2.6M741 272v2.6M575.5 243.4h-2.6M575.5 209.4h-2.6M575.5 175.4h-2.6M575.5 141.4h-2.6M575.5 107.4h-2.6M575.5 77.8h-3.2M575.5 271.7h-3.2M575.8 272v3.4M770.2 272v3.4" stroke="#222" stroke-width="0.8" fill="none"/>
<text x="605" y="286" font-size="7.8" fill="#3a3a3a" text-anchor="middle" >-0.4</text>
<text x="568.4" y="243.4" font-size="7.8" fill="#3a3a3a" text-anchor="middle" transform="rotate(-90 568.4 243.4)" >-0.4</text>
<text x="639" y="286" font-size="7.8" fill="#3a3a3a" text-anchor="middle" >-0.2</text>
<text x="568.4" y="209.4" font-size="7.8" fill="#3a3a3a" text-anchor="middle" transform="rotate(-90 568.4 209.4)" >-0.2</text>
<text x="673" y="286" font-size="7.8" fill="#3a3a3a" text-anchor="middle" >0</text>
<text x="568.4" y="175.4" font-size="7.8" fill="#3a3a3a" text-anchor="middle" transform="rotate(-90 568.4 175.4)" >0</text>
<text x="707" y="286" font-size="7.8" fill="#3a3a3a" text-anchor="middle" >0.2</text>
<text x="568.4" y="141.4" font-size="7.8" fill="#3a3a3a" text-anchor="middle" transform="rotate(-90 568.4 141.4)" >0.2</text>
<text x="741" y="286" font-size="7.8" fill="#3a3a3a" text-anchor="middle" >0.4</text>
<text x="568.4" y="107.4" font-size="7.8" fill="#3a3a3a" text-anchor="middle" transform="rotate(-90 568.4 107.4)" >0.4</text>
<text x="672" y="300.2" font-size="7.8" fill="#3a3a3a" text-anchor="middle" textLength="25.5" lengthAdjust="spacingAndGlyphs" >X [mm]</text>
<text x="555" y="175.5" font-size="7.8" fill="#3a3a3a" text-anchor="middle" textLength="26" lengthAdjust="spacingAndGlyphs" transform="rotate(-90 555 175.5)" >Y [mm]</text>
<g fill="none" stroke="#35ff00" stroke-width="1.15" stroke-linecap="round" transform="translate(673.4 174.1)">
<path d="M88.5 -87 89.3 -85.7 89.4 -83.7 88.9 -81.1 87.7 -77.9 85.8 -74.1 83.2 -69.7 80.1 -64.8 76.3 -59.4 71.9 -53.5 67 -47.2 61.6 -40.6 55.7 -33.7 49.4 -26.5 42.7 -19.1 35.6 -11.6 28.4 -3.9 20.9 3.7 13.2 11.3 5.4 18.9 -2.4 26.3 -10.2 33.5 -17.9 40.4 -25.4 47.1 -32.8 53.3 -40 59.2 -46.8 64.6 -53.3 69.5 -59.3 73.9 -64.9 77.8 -70 81 -74.6 83.6 -78.7 85.6 -82.1 87 -84.9 87.6 -87 87.7 -88.5 87 -89.3 85.7 -89.4 83.7 -88.9 81.1 -87.7 77.9 -85.8 74.1 -83.2 69.7 -80.1 64.8 -76.3 59.4 -71.9 53.5 -67 47.2 -61.6 40.6 -55.7 33.7 -49.4 26.5 -42.7 19.1 -35.6 11.6 -28.4 3.9 -20.9 -3.7 -13.2 -11.3 -5.4 -18.9 2.4 -26.3 10.2 -33.5 17.9 -40.4 25.4 -47.1 32.8 -53.3 40 -59.2 46.8 -64.6 53.3 -69.5 59.3 -73.9 64.9 -77.8 70 -81 74.6 -83.6 78.7 -85.6 82.1 -87 84.9 -87.6 87 -87.7z" stroke-width="1.25"/>
<path d="M83.6 -82.2 84.9 -80.5 85.5 -78.2 85.4 -75.4 84.7 -71.9 83.4 -67.9 81.4 -63.4 78.8 -58.4 75.6 -53 71.8 -47.2 67.5 -41 62.7 -34.5 57.4 -27.7 51.6 -20.7 45.5 -13.6 39 -6.3 32.2 1 25.2 8.3 18 15.5 10.6 22.6 3.2 29.5 -4.3 36.2 -11.7 42.7 -19 48.8 -26.2 54.5 -33.2 59.8 -40 64.7 -46.4 69.1 -52.5 72.9 -58.2 76.2 -63.4 78.9 -68.2 81 -72.4 82.5 -76.1 83.4 -79.2 83.6 -81.7 83.2 -83.6 82.2 -84.9 80.5 -85.5 78.2 -85.4 75.4 -84.7 71.9 -83.4 67.9 -81.4 63.4 -78.8 58.4 -75.6 53 -71.8 47.2 -67.5 41 -62.7 34.5 -57.4 27.7 -51.6 20.7 -45.5 13.6 -39 6.3 -32.2 -1 -25.2 -8.3 -18 -15.5 -10.6 -22.6 -3.2 -29.5 4.3 -36.2 11.7 -42.7 19 -48.8 26.2 -54.5 33.2 -59.8 40 -64.7 46.4 -69.1 52.5 -72.9 58.2 -76.2 63.4 -78.9 68.2 -81 72.4 -82.5 76.1 -83.4 79.2 -83.6 81.7 -83.2z" stroke-width="1.25"/>
<path d="M78.9 -77.6 80.5 -75.7 81.4 -73.2 81.8 -70.1 81.5 -66.6 80.6 -62.5 79.1 -57.9 77 -52.9 74.3 -47.5 71 -41.8 67.2 -35.7 62.9 -29.3 58.1 -22.8 52.8 -16 47.2 -9.1 41.2 -2.2 34.9 4.7 28.3 11.7 21.5 18.5 14.5 25.2 7.5 31.7 0.3 37.9 -6.8 43.9 -13.9 49.6 -20.8 54.8 -27.7 59.7 -34.3 64 -40.6 67.9 -46.6 71.3 -52.3 74.2 -57.6 76.4 -62.4 78.1 -66.8 79.2 -70.7 79.7 -74 79.6 -76.7 78.9 -78.9 77.6 -80.5 75.7 -81.4 73.2 -81.8 70.1 -81.5 66.6 -80.6 62.5 -79.1 57.9 -77 52.9 -74.3 47.5 -71 41.8 -67.2 35.7 -62.9 29.3 -58.1 22.8 -52.8 16 -47.2 9.1 -41.2 2.2 -34.9 -4.7 -28.3 -11.7 -21.5 -18.5 -14.5 -25.2 -7.5 -31.7 -0.3 -37.9 6.8 -43.9 13.9 -49.6 20.8 -54.8 27.7 -59.7 34.3 -64 40.6 -67.9 46.6 -71.3 52.3 -74.2 57.6 -76.4 62.4 -78.1 66.8 -79.2 70.7 -79.7 74 -79.6 76.7 -78.9z" stroke-width="1.25"/>
<path d="M74.4 -73.2 76.3 -71.1 77.5 -68.4 78.2 -65.3 78.2 -61.6 77.7 -57.5 76.6 -52.9 74.9 -47.9 72.6 -42.6 69.8 -37 66.4 -31 62.6 -24.8 58.2 -18.5 53.5 -12 48.3 -5.4 42.7 1.3 36.8 7.9 30.7 14.4 24.3 20.9 17.7 27.2 11 33.3 4.2 39.1 -2.6 44.7 -9.4 49.9 -16.2 54.7 -22.8 59.1 -29.2 63 -35.5 66.5 -41.4 69.5 -47 71.9 -52.3 73.8 -57.2 75.1 -61.6 75.9 -65.6 76.1 -69.1 75.7 -72 74.7 -74.4 73.2 -76.3 71.1 -77.5 68.4 -78.2 65.3 -78.2 61.6 -77.7 57.5 -76.6 52.9 -74.9 47.9 -72.6 42.6 -69.8 37 -66.4 31 -62.6 24.8 -58.2 18.5 -53.5 12 -48.3 5.4 -42.7 -1.3 -36.8 -7.9 -30.7 -14.4 -24.3 -20.9 -17.7 -27.2 -11 -33.3 -4.2 -39.1 2.6 -44.7 9.4 -49.9 16.2 -54.7 22.8 -59.1 29.2 -63 35.5 -66.5 41.4 -69.5 47 -71.9 52.3 -73.8 57.2 -75.1 61.6 -75.9 65.6 -76.1 69.1 -75.7 72 -74.7z" stroke-width="1.25"/>
<path d="M70.1 -68.9 72.2 -66.7 73.7 -63.9 74.6 -60.7 75 -57 74.8 -52.8 74 -48.3 72.7 -43.3 70.8 -38.1 68.4 -32.6 65.4 -26.8 62 -20.8 58.1 -14.7 53.7 -8.4 49 -2.1 43.8 4.3 38.4 10.6 32.6 16.8 26.6 22.9 20.4 28.8 14 34.5 7.5 39.9 1 45.1 -5.5 49.9 -12 54.3 -18.4 58.3 -24.7 61.8 -30.8 64.9 -36.6 67.5 -42.2 69.6 -47.4 71.1 -52.3 72.2 -56.8 72.6 -60.9 72.5 -64.4 71.9 -67.5 70.7 -70.1 68.9 -72.2 66.7 -73.7 63.9 -74.6 60.7 -75 57 -74.8 52.8 -74 48.3 -72.7 43.3 -70.8 38.1 -68.4 32.6 -65.4 26.8 -62 20.8 -58.1 14.7 -53.7 8.4 -49 2.1 -43.8 -4.3 -38.4 -10.6 -32.6 -16.8 -26.6 -22.9 -20.4 -28.8 -14 -34.5 -7.5 -39.9 -1 -45.1 5.5 -49.9 12 -54.3 18.4 -58.3 24.7 -61.8 30.8 -64.9 36.6 -67.5 42.2 -69.6 47.4 -71.1 52.3 -72.2 56.8 -72.6 60.9 -72.5 64.4 -71.9 67.5 -70.7z" stroke-width="1.25"/>
<path d="M66 -64.9 68.3 -62.5 70 -59.6 71.2 -56.3 71.8 -52.6 71.9 -48.4 71.5 -43.9 70.5 -39.1 68.9 -33.9 66.9 -28.5 64.3 -22.9 61.3 -17.1 57.7 -11.2 53.8 -5.2 49.4 0.9 44.7 6.9 39.6 12.9 34.2 18.8 28.6 24.6 22.7 30.1 16.7 35.5 10.5 40.5 4.2 45.3 -2 49.7 -8.3 53.7 -14.5 57.4 -20.6 60.5 -26.5 63.3 -32.2 65.5 -37.7 67.3 -42.9 68.5 -47.8 69.2 -52.3 69.4 -56.4 69 -60.1 68.2 -63.3 66.8 -66 64.9 -68.3 62.5 -70 59.6 -71.2 56.3 -71.8 52.6 -71.9 48.4 -71.5 43.9 -70.5 39.1 -68.9 33.9 -66.9 28.5 -64.3 22.9 -61.3 17.1 -57.7 11.2 -53.8 5.2 -49.4 -0.9 -44.7 -6.9 -39.6 -12.9 -34.2 -18.8 -28.6 -24.6 -22.7 -30.1 -16.7 -35.5 -10.5 -40.5 -4.2 -45.3 2 -49.7 8.3 -53.7 14.5 -57.4 20.6 -60.5 26.5 -63.3 32.2 -65.5 37.7 -67.3 42.9 -68.5 47.8 -69.2 52.3 -69.4 56.4 -69 60.1 -68.2 63.3 -66.8z" stroke-width="1.25"/>
<path d="M62.1 -61 64.5 -58.5 66.4 -55.6 67.8 -52.2 68.7 -48.5 69.1 -44.3 68.9 -39.9 68.2 -35.1 67 -30 65.3 -24.8 63.1 -19.3 60.4 -13.7 57.2 -8 53.6 -2.2 49.6 3.6 45.3 9.3 40.6 15 35.5 20.6 30.2 26 24.7 31.2 19 36.2 13.1 40.9 7.2 45.3 1.2 49.4 -4.9 53.1 -10.8 56.3 -16.8 59.2 -22.5 61.6 -28.1 63.5 -33.5 64.9 -38.7 65.9 -43.5 66.3 -48 66.3 -52.2 65.7 -55.9 64.6 -59.2 63.1 -62.1 61 -64.5 58.5 -66.4 55.6 -67.8 52.2 -68.7 48.5 -69.1 44.3 -68.9 39.9 -68.2 35.1 -67 30 -65.3 24.8 -63.1 19.3 -60.4 13.7 -57.2 8 -53.6 2.2 -49.6 -3.6 -45.3 -9.3 -40.6 -15 -35.5 -20.6 -30.2 -26 -24.7 -31.2 -19 -36.2 -13.1 -40.9 -7.2 -45.3 -1.2 -49.4 4.9 -53.1 10.8 -56.3 16.8 -59.2 22.5 -61.6 28.1 -63.5 33.5 -64.9 38.7 -65.9 43.5 -66.3 48 -66.3 52.2 -65.7 55.9 -64.6 59.2 -63.1z" stroke-width="1.25"/>
<path d="M58.3 -57.4 60.9 -54.8 63 -51.8 64.6 -48.3 65.7 -44.6 66.3 -40.5 66.4 -36 66 -31.3 65.1 -26.4 63.7 -21.3 61.8 -16 59.4 -10.6 56.6 -5.1 53.4 0.5 49.7 6 45.7 11.5 41.3 16.9 36.7 22.2 31.7 27.3 26.5 32.2 21.1 36.8 15.5 41.2 9.8 45.2 4.1 49 -1.7 52.3 -7.5 55.2 -13.2 57.8 -18.8 59.8 -24.3 61.5 -29.6 62.6 -34.7 63.3 -39.5 63.5 -44 63.2 -48.2 62.5 -52 61.2 -55.4 59.5 -58.3 57.4 -60.9 54.8 -63 51.8 -64.6 48.3 -65.7 44.6 -66.3 40.5 -66.4 36 -66 31.3 -65.1 26.4 -63.7 21.3 -61.8 16 -59.4 10.6 -56.6 5.1 -53.4 -0.5 -49.7 -6 -45.7 -11.5 -41.3 -16.9 -36.7 -22.2 -31.7 -27.3 -26.5 -32.2 -21.1 -36.8 -15.5 -41.2 -9.8 -45.2 -4.1 -49 1.7 -52.3 7.5 -55.2 13.2 -57.8 18.8 -59.8 24.3 -61.5 29.6 -62.6 34.7 -63.3 39.5 -63.5 44 -63.2 48.2 -62.5 52 -61.2 55.4 -59.5z" stroke-dasharray="0.1 1.9" stroke-width="1.55"/>
<path d="M54.8 -53.8 57.4 -51.2 59.7 -48.1 61.4 -44.7 62.7 -40.9 63.6 -36.8 63.9 -32.4 63.8 -27.8 63.2 -23 62 -18 60.5 -12.9 58.4 -7.6 55.9 -2.4 53 3 49.7 8.2 46 13.5 42 18.6 37.6 23.6 33 28.4 28.1 33 23 37.3 17.7 41.3 12.3 45.1 6.7 48.5 1.2 51.5 -4.4 54.1 -9.9 56.3 -15.4 58.1 -20.8 59.5 -26 60.4 -30.9 60.8 -35.7 60.8 -40.2 60.3 -44.4 59.4 -48.2 58 -51.7 56.1 -54.8 53.8 -57.4 51.2 -59.7 48.1 -61.4 44.7 -62.7 40.9 -63.6 36.8 -63.9 32.4 -63.8 27.8 -63.2 23 -62 18 -60.5 12.9 -58.4 7.6 -55.9 2.4 -53 -3 -49.7 -8.2 -46 -13.5 -42 -18.6 -37.6 -23.6 -33 -28.4 -28.1 -33 -23 -37.3 -17.7 -41.3 -12.3 -45.1 -6.7 -48.5 -1.2 -51.5 4.4 -54.1 9.9 -56.3 15.4 -58.1 20.8 -59.5 26 -60.4 30.9 -60.8 35.7 -60.8 40.2 -60.3 44.4 -59.4 48.2 -58 51.7 -56.1z" stroke-dasharray="0.1 1.9" stroke-width="1.55"/>
<path d="M51.4 -50.5 54.1 -47.7 56.5 -44.6 58.4 -41.2 59.9 -37.4 61 -33.4 61.5 -29.1 61.6 -24.5 61.3 -19.8 60.4 -15 59.1 -10 57.4 -4.9 55.2 0.2 52.6 5.2 49.6 10.3 46.2 15.3 42.5 20.1 38.4 24.8 34.1 29.3 29.5 33.6 24.7 37.7 19.6 41.4 14.5 44.8 9.2 47.9 3.8 50.7 -1.5 53 -6.9 54.9 -12.2 56.4 -17.4 57.5 -22.5 58.2 -27.4 58.4 -32.1 58.2 -36.6 57.5 -40.8 56.4 -44.7 54.8 -48.2 52.9 -51.4 50.5 -54.1 47.7 -56.5 44.6 -58.4 41.2 -59.9 37.4 -61 33.4 -61.5 29.1 -61.6 24.5 -61.3 19.8 -60.4 15 -59.1 10 -57.4 4.9 -55.2 -0.2 -52.6 -5.2 -49.6 -10.3 -46.2 -15.3 -42.5 -20.1 -38.4 -24.8 -34.1 -29.3 -29.5 -33.6 -24.7 -37.7 -19.6 -41.4 -14.5 -44.8 -9.2 -47.9 -3.8 -50.7 1.5 -53 6.9 -54.9 12.2 -56.4 17.4 -57.5 22.5 -58.2 27.4 -58.4 32.1 -58.2 36.6 -57.5 40.8 -56.4 44.7 -54.8 48.2 -52.9z" stroke-dasharray="0.1 1.9" stroke-width="1.55"/>
<path d="M48.1 -47.3 51 -44.5 53.5 -41.3 55.6 -37.9 57.2 -34.1 58.4 -30.1 59.2 -25.9 59.5 -21.4 59.4 -16.8 58.8 -12.1 57.8 -7.3 56.3 -2.4 54.4 2.5 52.1 7.4 49.4 12.2 46.3 16.9 42.9 21.5 39.1 25.9 35.1 30.2 30.8 34.2 26.2 37.9 21.4 41.4 16.5 44.5 11.5 47.3 6.3 49.8 1.1 51.9 -4.1 53.5 -9.2 54.8 -14.3 55.6 -19.3 56.1 -24.1 56.1 -28.8 55.6 -33.2 54.8 -37.4 53.5 -41.3 51.8 -44.9 49.8 -48.1 47.3 -51 44.5 -53.5 41.3 -55.6 37.9 -57.2 34.1 -58.4 30.1 -59.2 25.9 -59.5 21.4 -59.4 16.8 -58.8 12.1 -57.8 7.3 -56.3 2.4 -54.4 -2.5 -52.1 -7.4 -49.4 -12.2 -46.3 -16.9 -42.9 -21.5 -39.1 -25.9 -35.1 -30.2 -30.8 -34.2 -26.2 -37.9 -21.4 -41.4 -16.5 -44.5 -11.5 -47.3 -6.3 -49.8 -1.1 -51.9 4.1 -53.5 9.2 -54.8 14.3 -55.6 19.3 -56.1 24.1 -56.1 28.8 -55.6 33.2 -54.8 37.4 -53.5 41.3 -51.8 44.9 -49.8z" stroke-dasharray="0.1 1.9" stroke-width="1.55"/>
<path d="M45 -44.3 48 -41.4 50.6 -38.2 52.8 -34.7 54.6 -31 56 -27 57 -22.9 57.5 -18.5 57.6 -14 57.3 -9.4 56.5 -4.8 55.3 0 53.6 4.7 51.6 9.3 49.2 13.9 46.4 18.4 43.2 22.8 39.7 27 35.9 30.9 31.9 34.7 27.6 38.1 23.1 41.3 18.4 44.2 13.6 46.7 8.6 48.9 3.6 50.7 -1.4 52.1 -6.4 53.2 -11.4 53.8 -16.3 54 -21 53.8 -25.6 53.2 -30 52.2 -34.2 50.8 -38.1 49 -41.7 46.8 -45 44.3 -48 41.4 -50.6 38.2 -52.8 34.7 -54.6 31 -56 27 -57 22.9 -57.5 18.5 -57.6 14 -57.3 9.4 -56.5 4.8 -55.3 0 -53.6 -4.7 -51.6 -9.3 -49.2 -13.9 -46.4 -18.4 -43.2 -22.8 -39.7 -27 -35.9 -30.9 -31.9 -34.7 -27.6 -38.1 -23.1 -41.3 -18.4 -44.2 -13.6 -46.7 -8.6 -48.9 -3.6 -50.7 1.4 -52.1 6.4 -53.2 11.4 -53.8 16.3 -54 21 -53.8 25.6 -53.2 30 -52.2 34.2 -50.8 38.1 -49 41.7 -46.8z" stroke-dasharray="0.1 1.9" stroke-width="1.55"/>
<path d="M42.1 -41.4 45.1 -38.5 47.8 -35.3 50.2 -31.8 52.1 -28.1 53.7 -24.1 54.8 -20 55.5 -15.8 55.8 -11.4 55.7 -6.9 55.2 -2.4 54.2 2.1 52.8 6.7 51.1 11.1 48.9 15.5 46.4 19.8 43.5 23.9 40.2 27.9 36.7 31.6 32.9 35.1 28.8 38.3 24.6 41.2 20.1 43.8 15.5 46.1 10.8 48 5.9 49.6 1.1 50.8 -3.8 51.6 -8.6 52 -13.4 52 -18.1 51.6 -22.6 50.8 -27 49.7 -31.1 48.1 -35.1 46.2 -38.7 44 -42.1 41.4 -45.1 38.5 -47.8 35.3 -50.2 31.8 -52.1 28.1 -53.7 24.1 -54.8 20 -55.5 15.8 -55.8 11.4 -55.7 6.9 -55.2 2.4 -54.2 -2.1 -52.8 -6.7 -51.1 -11.1 -48.9 -15.5 -46.4 -19.8 -43.5 -23.9 -40.2 -27.9 -36.7 -31.6 -32.9 -35.1 -28.8 -38.3 -24.6 -41.2 -20.1 -43.8 -15.5 -46.1 -10.8 -48 -5.9 -49.6 -1.1 -50.8 3.8 -51.6 8.6 -52 13.4 -52 18.1 -51.6 22.6 -50.8 27 -49.7 31.1 -48.1 35.1 -46.2 38.7 -44z" stroke-dasharray="0.1 1.9" stroke-width="1.55"/>
<path d="M39.3 -38.6 42.4 -35.7 45.2 -32.4 47.6 -29 49.7 -25.3 51.4 -21.4 52.7 -17.4 53.6 -13.2 54.1 -8.9 54.2 -4.6 53.9 -0.2 53.2 4.2 52 8.5 50.5 12.8 48.6 17 46.3 21.1 43.6 25 40.7 28.7 37.4 32.2 33.8 35.4 30 38.4 25.9 41.1 21.7 43.4 17.3 45.5 12.7 47.2 8.1 48.5 3.4 49.5 -1.3 50.1 -6.1 50.3 -10.7 50.1 -15.3 49.5 -19.8 48.6 -24.1 47.3 -28.3 45.6 -32.2 43.6 -35.9 41.3 -39.3 38.6 -42.4 35.7 -45.2 32.4 -47.6 29 -49.7 25.3 -51.4 21.4 -52.7 17.4 -53.6 13.2 -54.1 8.9 -54.2 4.6 -53.9 0.2 -53.2 -4.2 -52 -8.5 -50.5 -12.8 -48.6 -17 -46.3 -21.1 -43.6 -25 -40.7 -28.7 -37.4 -32.2 -33.8 -35.4 -30 -38.4 -25.9 -41.1 -21.7 -43.4 -17.3 -45.5 -12.7 -47.2 -8.1 -48.5 -3.4 -49.5 1.3 -50.1 6.1 -50.3 10.7 -50.1 15.3 -49.5 19.8 -48.6 24.1 -47.3 28.3 -45.6 32.2 -43.6 35.9 -41.3z" stroke-dasharray="0.1 1.9" stroke-width="1.55"/>
<path d="M36.6 -36 39.8 -33 42.7 -29.8 45.2 -26.3 47.4 -22.7 49.2 -18.8 50.7 -14.8 51.8 -10.8 52.5 -6.6 52.7 -2.4 52.6 1.9 52.1 6.1 51.2 10.3 49.9 14.4 48.2 18.4 46.2 22.2 43.8 25.9 41 29.4 38 32.7 34.6 35.7 31 38.4 27.2 40.9 23.2 43 18.9 44.8 14.6 46.3 10.1 47.4 5.5 48.2 1 48.6 -3.6 48.6 -8.2 48.2 -12.7 47.5 -17.1 46.4 -21.4 45 -25.5 43.2 -29.5 41.1 -33.2 38.7 -36.6 36 -39.8 33 -42.7 29.8 -45.2 26.3 -47.4 22.7 -49.2 18.8 -50.7 14.8 -51.8 10.8 -52.5 6.6 -52.7 2.4 -52.6 -1.9 -52.1 -6.1 -51.2 -10.3 -49.9 -14.4 -48.2 -18.4 -46.2 -22.2 -43.8 -25.9 -41 -29.4 -38 -32.7 -34.6 -35.7 -31 -38.4 -27.2 -40.9 -23.2 -43 -18.9 -44.8 -14.6 -46.3 -10.1 -47.4 -5.5 -48.2 -1 -48.6 3.6 -48.6 8.2 -48.2 12.7 -47.5 17.1 -46.4 21.4 -45 25.5 -43.2 29.5 -41.1 33.2 -38.7z" stroke-dasharray="0.1 1.9" stroke-width="1.55"/>
<path d="M34.1 -33.5 37.3 -30.5 40.3 -27.3 42.9 -23.8 45.2 -20.2 47.2 -16.4 48.8 -12.5 50 -8.5 50.9 -4.4 51.3 -0.3 51.4 3.8 51.1 7.9 50.4 11.9 49.3 15.8 47.8 19.7 46 23.3 43.8 26.8 41.3 30.1 38.5 33.1 35.4 35.9 32 38.4 28.4 40.7 24.5 42.6 20.5 44.2 16.3 45.4 12 46.4 7.6 46.9 3.1 47.1 -1.4 47 -5.9 46.5 -10.3 45.6 -14.6 44.4 -18.9 42.8 -23 41 -26.9 38.8 -30.6 36.3 -34.1 33.5 -37.3 30.5 -40.3 27.3 -42.9 23.8 -45.2 20.2 -47.2 16.4 -48.8 12.5 -50 8.5 -50.9 4.4 -51.3 0.3 -51.4 -3.8 -51.1 -7.9 -50.4 -11.9 -49.3 -15.8 -47.8 -19.7 -46 -23.3 -43.8 -26.8 -41.3 -30.1 -38.5 -33.1 -35.4 -35.9 -32 -38.4 -28.4 -40.7 -24.5 -42.6 -20.5 -44.2 -16.3 -45.4 -12 -46.4 -7.6 -46.9 -3.1 -47.1 1.4 -47 5.9 -46.5 10.3 -45.6 14.6 -44.4 18.9 -42.8 23 -41 26.9 -38.8 30.6 -36.3z" stroke-dasharray="0.1 1.9" stroke-width="1.55"/>
<path d="M31.7 -31.2 35 -28.1 38 -24.9 40.7 -21.4 43.1 -17.8 45.2 -14.1 46.9 -10.2 48.3 -6.3 49.3 -2.3 50 1.7 50.2 5.6 50.1 9.6 49.6 13.4 48.7 17.2 47.4 20.8 45.8 24.3 43.9 27.6 41.6 30.7 38.9 33.5 36 36.1 32.8 38.4 29.4 40.4 25.8 42.1 21.9 43.5 17.9 44.6 13.7 45.3 9.5 45.7 5.1 45.7 0.7 45.4 -3.6 44.7 -8 43.7 -12.3 42.4 -16.5 40.7 -20.5 38.8 -24.5 36.5 -28.2 34 -31.7 31.2 -35 28.1 -38 24.9 -40.7 21.4 -43.1 17.8 -45.2 14.1 -46.9 10.2 -48.3 6.3 -49.3 2.3 -50 -1.7 -50.2 -5.6 -50.1 -9.6 -49.6 -13.4 -48.7 -17.2 -47.4 -20.8 -45.8 -24.3 -43.9 -27.6 -41.6 -30.7 -38.9 -33.5 -36 -36.1 -32.8 -38.4 -29.4 -40.4 -25.8 -42.1 -21.9 -43.5 -17.9 -44.6 -13.7 -45.3 -9.5 -45.7 -5.1 -45.7 -0.7 -45.4 3.6 -44.7 8 -43.7 12.3 -42.4 16.5 -40.7 20.5 -38.8 24.5 -36.5 28.2 -34z" stroke-dasharray="0.1 1.9" stroke-width="1.55"/>
<path d="M29.4 -28.9 32.7 -25.9 35.8 -22.6 38.6 -19.2 41.1 -15.6 43.3 -11.9 45.2 -8.1 46.7 -4.3 47.8 -0.4 48.6 3.5 49 7.3 49.1 11.1 48.8 14.9 48.1 18.5 47 21.9 45.6 25.2 43.8 28.3 41.8 31.2 39.3 33.8 36.6 36.2 33.6 38.4 30.4 40.2 26.9 41.7 23.2 42.9 19.4 43.8 15.3 44.3 11.2 44.5 7 44.4 2.7 43.9 -1.5 43.1 -5.8 42 -10 40.5 -14.2 38.8 -18.2 36.7 -22.1 34.4 -25.9 31.8 -29.4 28.9 -32.7 25.9 -35.8 22.6 -38.6 19.2 -41.1 15.6 -43.3 11.9 -45.2 8.1 -46.7 4.3 -47.8 0.4 -48.6 -3.5 -49 -7.3 -49.1 -11.1 -48.8 -14.9 -48.1 -18.5 -47 -21.9 -45.6 -25.2 -43.8 -28.3 -41.8 -31.2 -39.3 -33.8 -36.6 -36.2 -33.6 -38.4 -30.4 -40.2 -26.9 -41.7 -23.2 -42.9 -19.4 -43.8 -15.3 -44.3 -11.2 -44.5 -7 -44.4 -2.7 -43.9 1.5 -43.1 5.8 -42 10 -40.5 14.2 -38.8 18.2 -36.7 22.1 -34.4 25.9 -31.8z" stroke-dasharray="0.1 1.9" stroke-width="1.55"/>
<path d="M27.3 -26.8 30.6 -23.8 33.7 -20.5 36.5 -17.1 39.1 -13.6 41.3 -10 43.3 -6.3 44.9 -2.6 46.1 1.2 47.1 4.9 47.6 8.7 47.8 12.3 47.7 15.9 47.1 19.3 46.2 22.6 45 25.7 43.4 28.6 41.5 31.3 39.3 33.8 36.8 36 34 37.9 30.9 39.6 27.6 40.9 24.1 42 20.4 42.7 16.5 43.1 12.6 43.1 8.5 42.9 4.4 42.3 0.2 41.3 -4 40.1 -8.1 38.6 -12.2 36.7 -16.2 34.6 -20 32.3 -23.7 29.6 -27.3 26.8 -30.6 23.8 -33.7 20.5 -36.5 17.1 -39.1 13.6 -41.3 10 -43.3 6.3 -44.9 2.6 -46.1 -1.2 -47.1 -4.9 -47.6 -8.7 -47.8 -12.3 -47.7 -15.9 -47.1 -19.3 -46.2 -22.6 -45 -25.7 -43.4 -28.6 -41.5 -31.3 -39.3 -33.8 -36.8 -36 -34 -37.9 -30.9 -39.6 -27.6 -40.9 -24.1 -42 -20.4 -42.7 -16.5 -43.1 -12.6 -43.1 -8.5 -42.9 -4.4 -42.3 -0.2 -41.3 4 -40.1 8.1 -38.6 12.2 -36.7 16.2 -34.6 20 -32.3 23.7 -29.6z" stroke-dasharray="0.1 1.9" stroke-width="1.55"/>
<path d="M25.2 -24.8 28.5 -21.8 31.6 -18.6 34.4 -15.3 37 -11.8 39.3 -8.3 41.3 -4.7 43 -1.1 44.4 2.6 45.4 6.2 46.1 9.8 46.4 13.3 46.4 16.6 46 19.9 45.2 23 44.2 26 42.8 28.7 41 31.2 39 33.5 36.6 35.6 34 37.3 31.1 38.8 28 40 24.7 40.9 21.1 41.4 17.5 41.7 13.6 41.6 9.7 41.2 5.7 40.5 1.7 39.5 -2.4 38.2 -6.4 36.6 -10.4 34.8 -14.3 32.6 -18.1 30.2 -21.7 27.6 -25.2 24.8 -28.5 21.8 -31.6 18.6 -34.4 15.3 -37 11.8 -39.3 8.3 -41.3 4.7 -43 1.1 -44.4 -2.6 -45.4 -6.2 -46.1 -9.8 -46.4 -13.3 -46.4 -16.6 -46 -19.9 -45.2 -23 -44.2 -26 -42.8 -28.7 -41 -31.2 -39 -33.5 -36.6 -35.6 -34 -37.3 -31.1 -38.8 -28 -40 -24.7 -40.9 -21.1 -41.4 -17.5 -41.7 -13.6 -41.6 -9.7 -41.2 -5.7 -40.5 -1.7 -39.5 2.4 -38.2 6.4 -36.6 10.4 -34.8 14.3 -32.6 18.1 -30.2 21.7 -27.6z" stroke-dasharray="0.1 1.9" stroke-width="1.55"/>
<path d="M23.3 -22.9 26.5 -19.9 29.6 -16.8 32.4 -13.5 35 -10.2 37.3 -6.8 39.4 -3.3 41.1 0.2 42.5 3.7 43.6 7.2 44.4 10.6 44.8 14 44.9 17.2 44.7 20.3 44.1 23.3 43.2 26 41.9 28.6 40.3 31 38.4 33.1 36.3 34.9 33.8 36.5 31.1 37.9 28.2 38.9 25 39.6 21.7 40.1 18.1 40.2 14.5 40 10.7 39.6 6.9 38.8 3 37.7 -0.9 36.4 -4.8 34.7 -8.7 32.8 -12.5 30.7 -16.2 28.3 -19.8 25.7 -23.3 22.9 -26.5 19.9 -29.6 16.8 -32.4 13.5 -35 10.2 -37.3 6.8 -39.4 3.3 -41.1 -0.2 -42.5 -3.7 -43.6 -7.2 -44.4 -10.6 -44.8 -14 -44.9 -17.2 -44.7 -20.3 -44.1 -23.3 -43.2 -26 -41.9 -28.6 -40.3 -31 -38.4 -33.1 -36.3 -34.9 -33.8 -36.5 -31.1 -37.9 -28.2 -38.9 -25 -39.6 -21.7 -40.1 -18.1 -40.2 -14.5 -40 -10.7 -39.6 -6.9 -38.8 -3 -37.7 0.9 -36.4 4.8 -34.7 8.7 -32.8 12.5 -30.7 16.2 -28.3 19.8 -25.7z" stroke-dasharray="0.1 1.9" stroke-width="1.55"/>
<path d="M21.4 -21.1 24.6 -18.2 27.7 -15.1 30.5 -12 33 -8.7 35.4 -5.4 37.4 -2 39.2 1.3 40.6 4.7 41.8 8 42.7 11.3 43.2 14.5 43.4 17.6 43.2 20.5 42.8 23.3 42 25.9 40.8 28.3 39.4 30.5 37.7 32.4 35.7 34.1 33.4 35.6 30.9 36.8 28.1 37.7 25.1 38.3 21.9 38.6 18.6 38.7 15.1 38.4 11.5 37.8 7.8 37 4.1 35.9 0.3 34.5 -3.5 32.8 -7.2 30.9 -10.9 28.7 -14.6 26.4 -18.1 23.8 -21.4 21.1 -24.6 18.2 -27.7 15.1 -30.5 12 -33 8.7 -35.4 5.4 -37.4 2 -39.2 -1.3 -40.6 -4.7 -41.8 -8 -42.7 -11.3 -43.2 -14.5 -43.4 -17.6 -43.2 -20.5 -42.8 -23.3 -42 -25.9 -40.8 -28.3 -39.4 -30.5 -37.7 -32.4 -35.7 -34.1 -33.4 -35.6 -30.9 -36.8 -28.1 -37.7 -25.1 -38.3 -21.9 -38.6 -18.6 -38.7 -15.1 -38.4 -11.5 -37.8 -7.8 -37 -4.1 -35.9 -0.3 -34.5 3.5 -32.8 7.2 -30.9 10.9 -28.7 14.6 -26.4 18.1 -23.8z" stroke-dasharray="0.1 1.9" stroke-width="1.55"/>
<path d="M19.7 -19.3 22.8 -16.5 25.8 -13.6 28.5 -10.5 31.1 -7.4 33.4 -4.2 35.4 -1 37.2 2.3 38.7 5.5 39.9 8.7 40.8 11.8 41.4 14.8 41.7 17.7 41.6 20.5 41.3 23.1 40.6 25.5 39.6 27.8 38.3 29.8 36.7 31.6 34.9 33.2 32.8 34.5 30.4 35.5 27.8 36.3 25 36.8 22 37 18.8 37 15.5 36.7 12.1 36 8.5 35.1 4.9 34 1.3 32.6 -2.3 30.9 -5.9 29 -9.5 26.9 -13 24.5 -16.4 22 -19.7 19.3 -22.8 16.5 -25.8 13.6 -28.5 10.5 -31.1 7.4 -33.4 4.2 -35.4 1 -37.2 -2.3 -38.7 -5.5 -39.9 -8.7 -40.8 -11.8 -41.4 -14.8 -41.7 -17.7 -41.6 -20.5 -41.3 -23.1 -40.6 -25.5 -39.6 -27.8 -38.3 -29.8 -36.7 -31.6 -34.9 -33.2 -32.8 -34.5 -30.4 -35.5 -27.8 -36.3 -25 -36.8 -22 -37 -18.8 -37 -15.5 -36.7 -12.1 -36 -8.5 -35.1 -4.9 -34 -1.3 -32.6 2.3 -30.9 5.9 -29 9.5 -26.9 13 -24.5 16.4 -22z" stroke-dasharray="0.1 1.9" stroke-width="1.55"/>
<path d="M18 -17.7 21.1 -15 23.9 -12.1 26.6 -9.2 29.1 -6.2 31.4 -3.1 33.4 0 35.2 3 36.7 6.1 37.9 9.1 38.8 12.1 39.5 14.9 39.8 17.6 39.8 20.2 39.6 22.7 39 25 38.2 27.1 37 28.9 35.6 30.6 33.9 32 31.9 33.2 29.7 34.1 27.3 34.8 24.6 35.2 21.8 35.4 18.8 35.2 15.7 34.8 12.4 34.2 9.1 33.2 5.6 32.1 2.2 30.6 -1.3 29 -4.8 27.1 -8.2 25 -11.6 22.8 -14.9 20.3 -18 17.7 -21.1 15 -23.9 12.1 -26.6 9.2 -29.1 6.2 -31.4 3.1 -33.4 0 -35.2 -3 -36.7 -6.1 -37.9 -9.1 -38.8 -12.1 -39.5 -14.9 -39.8 -17.6 -39.8 -20.2 -39.6 -22.7 -39 -25 -38.2 -27.1 -37 -28.9 -35.6 -30.6 -33.9 -32 -31.9 -33.2 -29.7 -34.1 -27.3 -34.8 -24.6 -35.2 -21.8 -35.4 -18.8 -35.2 -15.7 -34.8 -12.4 -34.2 -9.1 -33.2 -5.6 -32.1 -2.2 -30.6 1.3 -29 4.8 -27.1 8.2 -25 11.6 -22.8 14.9 -20.3z" stroke-dasharray="0.1 1.9" stroke-width="1.55"/>
<path d="M16.4 -16.2 19.4 -13.5 22.1 -10.8 24.7 -8 27.1 -5.1 29.4 -2.2 31.3 0.7 33.1 3.6 34.6 6.5 35.8 9.4 36.8 12.2 37.4 14.8 37.8 17.4 37.9 19.8 37.8 22.1 37.3 24.2 36.5 26.2 35.5 27.9 34.2 29.4 32.6 30.7 30.8 31.8 28.8 32.6 26.5 33.2 24 33.5 21.4 33.6 18.6 33.4 15.6 32.9 12.6 32.2 9.4 31.3 6.1 30.1 2.9 28.7 -0.5 27.1 -3.8 25.3 -7 23.2 -10.3 21 -13.4 18.7 -16.4 16.2 -19.4 13.5 -22.1 10.8 -24.7 8 -27.1 5.1 -29.4 2.2 -31.3 -0.7 -33.1 -3.6 -34.6 -6.5 -35.8 -9.4 -36.8 -12.2 -37.4 -14.8 -37.8 -17.4 -37.9 -19.8 -37.8 -22.1 -37.3 -24.2 -36.5 -26.2 -35.5 -27.9 -34.2 -29.4 -32.6 -30.7 -30.8 -31.8 -28.8 -32.6 -26.5 -33.2 -24 -33.5 -21.4 -33.6 -18.6 -33.4 -15.6 -32.9 -12.6 -32.2 -9.4 -31.3 -6.1 -30.1 -2.9 -28.7 0.5 -27.1 3.8 -25.3 7 -23.2 10.3 -21 13.4 -18.7z" stroke-dasharray="0.1 1.9" stroke-width="1.55"/>
<path d="M14.9 -14.7 17.7 -12.2 20.4 -9.6 22.9 -6.9 25.2 -4.2 27.3 -1.4 29.3 1.3 31 4.1 32.4 6.8 33.6 9.5 34.6 12.1 35.3 14.6 35.7 17 35.9 19.2 35.8 21.4 35.4 23.3 34.7 25.1 33.8 26.7 32.6 28.1 31.2 29.3 29.5 30.2 27.7 30.9 25.6 31.4 23.3 31.7 20.8 31.7 18.2 31.4 15.4 31 12.5 30.2 9.5 29.3 6.5 28.1 3.4 26.8 0.2 25.2 -2.9 23.4 -6 21.5 -9.1 19.3 -12 17.1 -14.9 14.7 -17.7 12.2 -20.4 9.6 -22.9 6.9 -25.2 4.2 -27.3 1.4 -29.3 -1.3 -31 -4.1 -32.4 -6.8 -33.6 -9.5 -34.6 -12.1 -35.3 -14.6 -35.7 -17 -35.9 -19.2 -35.8 -21.4 -35.4 -23.3 -34.7 -25.1 -33.8 -26.7 -32.6 -28.1 -31.2 -29.3 -29.5 -30.2 -27.7 -30.9 -25.6 -31.4 -23.3 -31.7 -20.8 -31.7 -18.2 -31.4 -15.4 -31 -12.5 -30.2 -9.5 -29.3 -6.5 -28.1 -3.4 -26.8 -0.2 -25.2 2.9 -23.4 6 -21.5 9.1 -19.3 12 -17.1z" stroke-dasharray="0.1 1.9" stroke-width="1.55"/>
<path d="M13.5 -13.3 16.2 -10.9 18.7 -8.5 21.1 -6 23.3 -3.4 25.3 -0.8 27.2 1.8 28.8 4.4 30.2 6.9 31.4 9.4 32.4 11.8 33.1 14.2 33.5 16.4 33.7 18.5 33.6 20.4 33.3 22.2 32.8 23.9 31.9 25.3 30.9 26.6 29.6 27.6 28.1 28.5 26.3 29.1 24.4 29.5 22.3 29.7 20 29.7 17.5 29.4 15 28.9 12.3 28.2 9.5 27.3 6.6 26.1 3.7 24.8 0.8 23.3 -2.1 21.6 -5.1 19.7 -7.9 17.7 -10.8 15.6 -13.5 13.3 -16.2 10.9 -18.7 8.5 -21.1 6 -23.3 3.4 -25.3 0.8 -27.2 -1.8 -28.8 -4.4 -30.2 -6.9 -31.4 -9.4 -32.4 -11.8 -33.1 -14.2 -33.5 -16.4 -33.7 -18.5 -33.6 -20.4 -33.3 -22.2 -32.8 -23.9 -31.9 -25.3 -30.9 -26.6 -29.6 -27.6 -28.1 -28.5 -26.3 -29.1 -24.4 -29.5 -22.3 -29.7 -20 -29.7 -17.5 -29.4 -15 -28.9 -12.3 -28.2 -9.5 -27.3 -6.6 -26.1 -3.7 -24.8 -0.8 -23.3 2.1 -21.6 5.1 -19.7 7.9 -17.7 10.8 -15.6z" stroke-dasharray="0.1 1.9" stroke-width="1.55"/>
<path d="M12.2 -12 14.6 -9.7 17 -7.4 19.2 -5.1 21.3 -2.7 23.3 -0.3 25 2.1 26.6 4.5 27.9 6.9 29.1 9.2 30 11.4 30.7 13.6 31.2 15.6 31.4 17.5 31.4 19.3 31.1 21 30.6 22.5 29.9 23.8 29 24.9 27.8 25.9 26.4 26.6 24.8 27.2 23.1 27.5 21.1 27.6 19 27.6 16.8 27.3 14.4 26.8 11.9 26.1 9.3 25.2 6.7 24.1 4 22.8 1.2 21.4 -1.5 19.8 -4.2 18 -6.9 16.1 -9.6 14.1 -12.2 12 -14.6 9.7 -17 7.4 -19.2 5.1 -21.3 2.7 -23.3 0.3 -25 -2.1 -26.6 -4.5 -27.9 -6.9 -29.1 -9.2 -30 -11.4 -30.7 -13.6 -31.2 -15.6 -31.4 -17.5 -31.4 -19.3 -31.1 -21 -30.6 -22.5 -29.9 -23.8 -29 -24.9 -27.8 -25.9 -26.4 -26.6 -24.8 -27.2 -23.1 -27.5 -21.1 -27.6 -19 -27.6 -16.8 -27.3 -14.4 -26.8 -11.9 -26.1 -9.3 -25.2 -6.7 -24.1 -4 -22.8 -1.2 -21.4 1.5 -19.8 4.2 -18 6.9 -16.1 9.6 -14.1z" stroke-dasharray="0.1 1.9" stroke-width="1.55"/>
<path d="M10.9 -10.7 13.2 -8.6 15.4 -6.5 17.4 -4.3 19.4 -2.1 21.2 0.1 22.8 2.3 24.3 4.5 25.6 6.7 26.7 8.8 27.6 10.9 28.3 12.8 28.7 14.7 29 16.5 29 18.1 28.8 19.6 28.4 20.9 27.7 22.1 26.9 23.1 25.8 24 24.6 24.6 23.2 25.1 21.5 25.4 19.8 25.5 17.9 25.4 15.8 25.1 13.6 24.6 11.3 23.9 9 23 6.5 22 4 20.8 1.5 19.5 -1 17.9 -3.5 16.3 -6 14.5 -8.5 12.6 -10.9 10.7 -13.2 8.6 -15.4 6.5 -17.4 4.3 -19.4 2.1 -21.2 -0.1 -22.8 -2.3 -24.3 -4.5 -25.6 -6.7 -26.7 -8.8 -27.6 -10.9 -28.3 -12.8 -28.7 -14.7 -29 -16.5 -29 -18.1 -28.8 -19.6 -28.4 -20.9 -27.7 -22.1 -26.9 -23.1 -25.8 -24 -24.6 -24.6 -23.2 -25.1 -21.5 -25.4 -19.8 -25.5 -17.9 -25.4 -15.8 -25.1 -13.6 -24.6 -11.3 -23.9 -9 -23 -6.5 -22 -4 -20.8 -1.5 -19.5 1 -17.9 3.5 -16.3 6 -14.5 8.5 -12.6z" stroke-dasharray="0.1 1.9" stroke-width="1.55"/>
<path d="M9.6 -9.5 11.7 -7.6 13.7 -5.6 15.7 -3.6 17.5 -1.6 19.1 0.4 20.7 2.4 22 4.4 23.2 6.4 24.2 8.3 25.1 10.2 25.7 12 26.2 13.6 26.4 15.2 26.5 16.7 26.3 18 25.9 19.2 25.4 20.3 24.6 21.2 23.7 22 22.6 22.5 21.3 22.9 19.9 23.2 18.3 23.2 16.5 23.1 14.7 22.8 12.7 22.3 10.6 21.7 8.5 20.9 6.3 19.9 4 18.8 1.7 17.5 -0.6 16.1 -2.9 14.6 -5.2 13 -7.4 11.3 -9.6 9.5 -11.7 7.6 -13.7 5.6 -15.7 3.6 -17.5 1.6 -19.1 -0.4 -20.7 -2.4 -22 -4.4 -23.2 -6.4 -24.2 -8.3 -25.1 -10.2 -25.7 -12 -26.2 -13.6 -26.4 -15.2 -26.5 -16.7 -26.3 -18 -25.9 -19.2 -25.4 -20.3 -24.6 -21.2 -23.7 -22 -22.6 -22.5 -21.3 -22.9 -19.9 -23.2 -18.3 -23.2 -16.5 -23.1 -14.7 -22.8 -12.7 -22.3 -10.6 -21.7 -8.5 -20.9 -6.3 -19.9 -4 -18.8 -1.7 -17.5 0.6 -16.1 2.9 -14.6 5.2 -13 7.4 -11.3z" stroke-dasharray="0.1 1.9" stroke-width="1.55"/>
<path d="M8.4 -8.3 10.3 -6.6 12.2 -4.8 13.9 -3 15.5 -1.2 17 0.6 18.4 2.4 19.7 4.2 20.8 6 21.7 7.7 22.5 9.4 23.1 11 23.5 12.5 23.7 13.9 23.8 15.2 23.7 16.4 23.4 17.4 22.9 18.4 22.3 19.2 21.5 19.8 20.5 20.3 19.3 20.7 18.1 20.8 16.6 20.9 15.1 20.7 13.4 20.4 11.7 20 9.8 19.4 7.9 18.7 5.9 17.8 3.8 16.8 1.8 15.6 -0.3 14.3 -2.4 13 -4.4 11.5 -6.4 9.9 -8.4 8.3 -10.3 6.6 -12.2 4.8 -13.9 3 -15.5 1.2 -17 -0.6 -18.4 -2.4 -19.7 -4.2 -20.8 -6 -21.7 -7.7 -22.5 -9.4 -23.1 -11 -23.5 -12.5 -23.7 -13.9 -23.8 -15.2 -23.7 -16.4 -23.4 -17.4 -22.9 -18.4 -22.3 -19.2 -21.5 -19.8 -20.5 -20.3 -19.3 -20.7 -18.1 -20.8 -16.6 -20.9 -15.1 -20.7 -13.4 -20.4 -11.7 -20 -9.8 -19.4 -7.9 -18.7 -5.9 -17.8 -3.8 -16.8 -1.8 -15.6 0.3 -14.3 2.4 -13 4.4 -11.5 6.4 -9.9z" stroke-dasharray="0.1 1.9" stroke-width="1.55"/>
<path d="M7.3 -7.1 9 -5.6 10.6 -4.1 12.1 -2.5 13.6 -0.9 14.9 0.7 16.2 2.3 17.3 3.9 18.3 5.5 19.1 7 19.8 8.4 20.4 9.8 20.8 11.2 21 12.4 21.1 13.5 21 14.6 20.7 15.5 20.3 16.3 19.8 17 19.1 17.6 18.2 18 17.2 18.3 16.1 18.4 14.8 18.4 13.5 18.3 12 18 10.5 17.6 8.8 17.1 7.1 16.4 5.4 15.6 3.6 14.7 1.8 13.7 -0.1 12.5 -1.9 11.3 -3.7 10 -5.5 8.6 -7.3 7.1 -9 5.6 -10.6 4.1 -12.1 2.5 -13.6 0.9 -14.9 -0.7 -16.2 -2.3 -17.3 -3.9 -18.3 -5.5 -19.1 -7 -19.8 -8.4 -20.4 -9.8 -20.8 -11.2 -21 -12.4 -21.1 -13.5 -21 -14.6 -20.7 -15.5 -20.3 -16.3 -19.8 -17 -19.1 -17.6 -18.2 -18 -17.2 -18.3 -16.1 -18.4 -14.8 -18.4 -13.5 -18.3 -12 -18 -10.5 -17.6 -8.8 -17.1 -7.1 -16.4 -5.4 -15.6 -3.6 -14.7 -1.8 -13.7 0.1 -12.5 1.9 -11.3 3.7 -10 5.5 -8.6z" stroke-dasharray="0.1 1.9" stroke-width="1.55"/>
<path d="M6.2 -6.1 9 -3.4 11.7 -0.6 13.9 2.1 15.7 4.9 17.1 7.4 17.9 9.8 18.2 11.8 18 13.5 17.2 14.8 15.8 15.6 14 15.9 11.8 15.8 9.2 15.2 6.3 14.1 3.2 12.6 0.1 10.7 -3.1 8.5 -6.2 6.1 -9 3.4 -11.7 0.6 -13.9 -2.1 -15.7 -4.9 -17.1 -7.4 -17.9 -9.8 -18.2 -11.8 -18 -13.5 -17.2 -14.8 -15.8 -15.6 -14 -15.9 -11.8 -15.8 -9.2 -15.2 -6.3 -14.1 -3.2 -12.6 -0.1 -10.7 3.1 -8.5z" stroke-dasharray="0.1 1.9" stroke-width="1.55"/>
<path d="M5.1 -5 7.5 -2.8 9.7 -0.4 11.6 1.9 13.2 4.2 14.3 6.3 15.1 8.3 15.3 10 15.1 11.4 14.5 12.4 13.3 13.1 11.8 13.4 10 13.3 7.8 12.7 5.4 11.8 2.8 10.5 0.2 8.9 -2.5 7.1 -5.1 5 -7.5 2.8 -9.7 0.4 -11.6 -1.9 -13.2 -4.2 -14.3 -6.3 -15.1 -8.3 -15.3 -10 -15.1 -11.4 -14.5 -12.4 -13.3 -13.1 -11.8 -13.4 -10 -13.3 -7.8 -12.7 -5.4 -11.8 -2.8 -10.5 -0.2 -8.9 2.5 -7.1z" stroke-dasharray="0.1 1.9" stroke-width="1.55"/>
<path d="M4 -4 6 -2.2 7.8 -0.3 9.3 1.6 10.6 3.4 11.5 5.1 12.1 6.7 12.3 8.1 12.2 9.2 11.7 10 10.8 10.6 9.6 10.8 8.1 10.7 6.3 10.2 4.4 9.5 2.3 8.4 0.2 7.2 -1.9 5.6 -4 4 -6 2.2 -7.8 0.3 -9.3 -1.6 -10.6 -3.4 -11.5 -5.1 -12.1 -6.7 -12.3 -8.1 -12.2 -9.2 -11.7 -10 -10.8 -10.6 -9.6 -10.8 -8.1 -10.7 -6.3 -10.2 -4.4 -9.5 -2.3 -8.4 -0.2 -7.2 1.9 -5.6z" stroke-dasharray="0.1 1.9" stroke-width="1.55"/>
<path d="M3 -3 4.5 -1.6 5.8 -0.2 7 1.2 8 2.6 8.7 3.9 9.1 5.1 9.3 6.1 9.2 6.9 8.8 7.6 8.1 8 7.2 8.1 6.1 8 4.8 7.7 3.4 7.1 1.8 6.3 0.2 5.4 -1.4 4.2 -3 3 -4.5 1.6 -5.8 0.2 -7 -1.2 -8 -2.6 -8.7 -3.9 -9.1 -5.1 -9.3 -6.1 -9.2 -6.9 -8.8 -7.6 -8.1 -8 -7.2 -8.1 -6.1 -8 -4.8 -7.7 -3.4 -7.1 -1.8 -6.3 -0.2 -5.4 1.4 -4.2z" stroke-dasharray="0.1 1.9" stroke-width="1.55"/>
<path d="M2 -2 3 -1 3.9 -0.1 4.7 0.8 5.3 1.8 5.8 2.6 6.1 3.4 6.2 4.1 6.2 4.7 5.9 5.1 5.5 5.3 4.9 5.4 4.1 5.4 3.2 5.1 2.3 4.8 1.2 4.2 0.1 3.6 -0.9 2.8 -2 2 -3 1 -3.9 0.1 -4.7 -0.8 -5.3 -1.8 -5.8 -2.6 -6.1 -3.4 -6.2 -4.1 -6.2 -4.7 -5.9 -5.1 -5.5 -5.3 -4.9 -5.4 -4.1 -5.4 -3.2 -5.1 -2.3 -4.8 -1.2 -4.2 -0.1 -3.6 0.9 -2.8z" stroke-dasharray="0.1 1.9" stroke-width="1.55"/>
<path d="M0.5 -0.5 0.7 -0.3 1 0 1.2 0.2 1.3 0.4 1.5 0.7 1.5 0.9 1.6 1 1.5 1.2 1.5 1.3 1.4 1.3 1.2 1.4 1 1.3 0.8 1.3 0.6 1.2 0.3 1.1 0 0.9 -0.2 0.7 -0.5 0.5 -0.7 0.3 -1 0 -1.2 -0.2 -1.3 -0.4 -1.5 -0.7 -1.5 -0.9 -1.6 -1 -1.5 -1.2 -1.5 -1.3 -1.4 -1.3 -1.2 -1.4 -1 -1.3 -0.8 -1.3 -0.6 -1.2 -0.3 -1.1 0 -0.9 0.2 -0.7z" stroke-dasharray="0.1 1.9" stroke-width="1.55"/>
<path d="M1.5 -1.5 2.2 -0.8 2.9 -0.1 3.5 0.6 4 1.3 4.4 2 4.6 2.6 4.7 3.1 4.6 3.5 4.4 3.8 4.1 4 3.7 4.1 3.1 4 2.4 3.9 1.7 3.6 0.9 3.2 0.1 2.7 -0.7 2.1 -1.5 1.5 -2.2 0.8 -2.9 0.1 -3.5 -0.6 -4 -1.3 -4.4 -2 -4.6 -2.6 -4.7 -3.1 -4.6 -3.5 -4.4 -3.8 -4.1 -4 -3.7 -4.1 -3.1 -4 -2.4 -3.9 -1.7 -3.6 -0.9 -3.2 -0.1 -2.7 0.7 -2.1z" stroke-dasharray="0.1 1.9" stroke-width="1.55"/>
<path d="M2.5 -2.5 3.7 -1.3 4.9 -0.1 5.8 1 6.6 2.2 7.2 3.3 7.6 4.3 7.8 5.1 7.7 5.8 7.4 6.3 6.8 6.7 6.1 6.8 5.1 6.7 4 6.4 2.8 5.9 1.5 5.3 0.2 4.5 -1.2 3.5 -2.5 2.5 -3.7 1.3 -4.9 0.1 -5.8 -1 -6.6 -2.2 -7.2 -3.3 -7.6 -4.3 -7.8 -5.1 -7.7 -5.8 -7.4 -6.3 -6.8 -6.7 -6.1 -6.8 -5.1 -6.7 -4 -6.4 -2.8 -5.9 -1.5 -5.3 -0.2 -4.5 1.2 -3.5z" stroke-dasharray="0.1 1.9" stroke-width="1.55"/>
<path d="M3.5 -3.5 5.2 -1.9 6.8 -0.2 8.2 1.4 9.3 3 10.1 4.5 10.6 5.9 10.8 7.1 10.7 8.1 10.2 8.8 9.5 9.3 8.4 9.5 7.1 9.4 5.6 9 3.9 8.3 2.1 7.4 0.2 6.3 -1.7 4.9 -3.5 3.5 -5.2 1.9 -6.8 0.2 -8.2 -1.4 -9.3 -3 -10.1 -4.5 -10.6 -5.9 -10.8 -7.1 -10.7 -8.1 -10.2 -8.8 -9.5 -9.3 -8.4 -9.5 -7.1 -9.4 -5.6 -9 -3.9 -8.3 -2.1 -7.4 -0.2 -6.3 1.7 -4.9z" stroke-dasharray="0.1 1.9" stroke-width="1.55"/>
<path d="M4.6 -4.5 6.8 -2.5 8.7 -0.4 10.5 1.7 11.9 3.8 12.9 5.7 13.6 7.5 13.8 9 13.7 10.3 13.1 11.2 12.1 11.8 10.7 12.1 9 12 7.1 11.5 4.9 10.7 2.6 9.5 0.2 8.1 -2.2 6.4 -4.6 4.5 -6.8 2.5 -8.7 0.4 -10.5 -1.7 -11.9 -3.8 -12.9 -5.7 -13.6 -7.5 -13.8 -9 -13.7 -10.3 -13.1 -11.2 -12.1 -11.8 -10.7 -12.1 -9 -12 -7.1 -11.5 -4.9 -10.7 -2.6 -9.5 -0.2 -8.1 2.2 -6.4z" stroke-dasharray="0.1 1.9" stroke-width="1.55"/>
<path d="M5.6 -5.5 8.3 -3.1 10.7 -0.5 12.8 2 14.5 4.5 15.7 6.9 16.5 9 16.8 10.9 16.6 12.4 15.8 13.6 14.6 14.4 12.9 14.7 10.9 14.5 8.5 14 5.9 13 3 11.6 0.1 9.8 -2.8 7.8 -5.6 5.5 -8.3 3.1 -10.7 0.5 -12.8 -2 -14.5 -4.5 -15.7 -6.9 -16.5 -9 -16.8 -10.9 -16.6 -12.4 -15.8 -13.6 -14.6 -14.4 -12.9 -14.7 -10.9 -14.5 -8.5 -14 -5.9 -13 -3 -11.6 -0.1 -9.8 2.8 -7.8z" stroke-dasharray="0.1 1.9" stroke-width="1.55"/>
<path d="M6.7 -6.6 8.3 -5.2 9.8 -3.7 11.3 -2.3 12.6 -0.8 13.9 0.7 15.1 2.2 16.1 3.7 17 5.2 17.8 6.6 18.5 7.9 19 9.2 19.4 10.5 19.6 11.6 19.7 12.7 19.6 13.7 19.4 14.5 19 15.3 18.5 15.9 17.8 16.4 17 16.8 16.1 17.1 15.1 17.2 13.9 17.2 12.6 17.1 11.3 16.8 9.8 16.4 8.3 15.9 6.7 15.3 5.1 14.5 3.4 13.7 1.7 12.7 0 11.6 -1.7 10.5 -3.4 9.3 -5.1 8 -6.7 6.6 -8.3 5.2 -9.8 3.7 -11.3 2.3 -12.6 0.8 -13.9 -0.7 -15.1 -2.2 -16.1 -3.7 -17 -5.2 -17.8 -6.6 -18.5 -7.9 -19 -9.2 -19.4 -10.5 -19.6 -11.6 -19.7 -12.7 -19.6 -13.7 -19.4 -14.5 -19 -15.3 -18.5 -15.9 -17.8 -16.4 -17 -16.8 -16.1 -17.1 -15.1 -17.2 -13.9 -17.2 -12.6 -17.1 -11.3 -16.8 -9.8 -16.4 -8.3 -15.9 -6.7 -15.3 -5.1 -14.5 -3.4 -13.7 -1.7 -12.7 0 -11.6 1.7 -10.5 3.4 -9.3 5.1 -8z" stroke-dasharray="0.1 1.9" stroke-width="1.55"/>
<path d="M7.8 -7.7 9.6 -6.1 11.4 -4.4 13 -2.8 14.6 -1.1 16 0.7 17.3 2.4 18.5 4.1 19.5 5.7 20.4 7.4 21.2 8.9 21.7 10.4 22.1 11.8 22.4 13.1 22.5 14.4 22.4 15.5 22.1 16.5 21.6 17.4 21 18.1 20.3 18.7 19.4 19.2 18.3 19.5 17.1 19.6 15.8 19.7 14.3 19.5 12.7 19.2 11.1 18.8 9.3 18.2 7.5 17.5 5.6 16.7 3.7 15.7 1.8 14.6 -0.2 13.4 -2.1 12.1 -4.1 10.7 -6 9.3 -7.8 7.7 -9.6 6.1 -11.4 4.4 -13 2.8 -14.6 1.1 -16 -0.7 -17.3 -2.4 -18.5 -4.1 -19.5 -5.7 -20.4 -7.4 -21.2 -8.9 -21.7 -10.4 -22.1 -11.8 -22.4 -13.1 -22.5 -14.4 -22.4 -15.5 -22.1 -16.5 -21.6 -17.4 -21 -18.1 -20.3 -18.7 -19.4 -19.2 -18.3 -19.5 -17.1 -19.6 -15.8 -19.7 -14.3 -19.5 -12.7 -19.2 -11.1 -18.8 -9.3 -18.2 -7.5 -17.5 -5.6 -16.7 -3.7 -15.7 -1.8 -14.6 0.2 -13.4 2.1 -12.1 4.1 -10.7 6 -9.3z" stroke-dasharray="0.1 1.9" stroke-width="1.55"/>
<path d="M9 -8.9 11 -7.1 13 -5.2 14.8 -3.3 16.5 -1.4 18.1 0.5 19.5 2.4 20.8 4.3 22 6.2 23 8 23.8 9.8 24.4 11.5 24.8 13.1 25.1 14.6 25.1 16 25 17.2 24.7 18.4 24.2 19.4 23.5 20.2 22.6 20.9 21.6 21.4 20.3 21.8 19 22 17.5 22.1 15.8 21.9 14.1 21.6 12.2 21.2 10.2 20.5 8.2 19.8 6.1 18.8 3.9 17.8 1.8 16.6 -0.4 15.2 -2.6 13.8 -4.8 12.2 -6.9 10.6 -9 8.9 -11 7.1 -13 5.2 -14.8 3.3 -16.5 1.4 -18.1 -0.5 -19.5 -2.4 -20.8 -4.3 -22 -6.2 -23 -8 -23.8 -9.8 -24.4 -11.5 -24.8 -13.1 -25.1 -14.6 -25.1 -16 -25 -17.2 -24.7 -18.4 -24.2 -19.4 -23.5 -20.2 -22.6 -20.9 -21.6 -21.4 -20.3 -21.8 -19 -22 -17.5 -22.1 -15.8 -21.9 -14.1 -21.6 -12.2 -21.2 -10.2 -20.5 -8.2 -19.8 -6.1 -18.8 -3.9 -17.8 -1.8 -16.6 0.4 -15.2 2.6 -13.8 4.8 -12.2 6.9 -10.6z" stroke-dasharray="0.1 1.9" stroke-width="1.55"/>
<path d="M10.2 -10.1 12.4 -8.1 14.6 -6.1 16.6 -4 18.4 -1.9 20.2 0.3 21.8 2.4 23.2 4.5 24.4 6.6 25.5 8.6 26.3 10.5 27 12.4 27.4 14.2 27.7 15.9 27.7 17.4 27.6 18.8 27.2 20.1 26.6 21.2 25.8 22.2 24.8 23 23.6 23.6 22.3 24 20.7 24.3 19 24.4 17.2 24.2 15.3 23.9 13.2 23.5 11 22.8 8.7 22 6.4 21 4 19.8 1.6 18.5 -0.8 17 -3.2 15.5 -5.6 13.8 -7.9 12 -10.2 10.1 -12.4 8.1 -14.6 6.1 -16.6 4 -18.4 1.9 -20.2 -0.3 -21.8 -2.4 -23.2 -4.5 -24.4 -6.6 -25.5 -8.6 -26.3 -10.5 -27 -12.4 -27.4 -14.2 -27.7 -15.9 -27.7 -17.4 -27.6 -18.8 -27.2 -20.1 -26.6 -21.2 -25.8 -22.2 -24.8 -23 -23.6 -23.6 -22.3 -24 -20.7 -24.3 -19 -24.4 -17.2 -24.2 -15.3 -23.9 -13.2 -23.5 -11 -22.8 -8.7 -22 -6.4 -21 -4 -19.8 -1.6 -18.5 0.8 -17 3.2 -15.5 5.6 -13.8 7.9 -12z" stroke-dasharray="0.1 1.9" stroke-width="1.55"/>
<path d="M11.5 -11.3 13.9 -9.2 16.2 -7 18.3 -4.7 20.4 -2.4 22.2 -0.1 23.9 2.2 25.4 4.5 26.8 6.8 27.9 9 28.8 11.2 29.5 13.2 30 15.2 30.2 17 30.2 18.7 30 20.3 29.5 21.7 28.8 23 27.9 24 26.8 24.9 25.5 25.6 24 26.2 22.3 26.5 20.5 26.6 18.5 26.5 16.3 26.2 14 25.7 11.6 25 9.2 24.1 6.6 23.1 4 21.8 1.4 20.4 -1.2 18.8 -3.9 17.1 -6.5 15.3 -9 13.4 -11.5 11.3 -13.9 9.2 -16.2 7 -18.3 4.7 -20.4 2.4 -22.2 0.1 -23.9 -2.2 -25.4 -4.5 -26.8 -6.8 -27.9 -9 -28.8 -11.2 -29.5 -13.2 -30 -15.2 -30.2 -17 -30.2 -18.7 -30 -20.3 -29.5 -21.7 -28.8 -23 -27.9 -24 -26.8 -24.9 -25.5 -25.6 -24 -26.2 -22.3 -26.5 -20.5 -26.6 -18.5 -26.5 -16.3 -26.2 -14 -25.7 -11.6 -25 -9.2 -24.1 -6.6 -23.1 -4 -21.8 -1.4 -20.4 1.2 -18.8 3.9 -17.1 6.5 -15.3 9 -13.4z" stroke-dasharray="0.1 1.9" stroke-width="1.55"/>
<path d="M12.8 -12.6 15.4 -10.3 17.8 -7.9 20.1 -5.5 22.3 -3 24.3 -0.5 26.1 2 27.7 4.5 29.1 6.9 30.2 9.3 31.2 11.6 31.9 13.9 32.4 16 32.6 18 32.5 19.9 32.3 21.6 31.7 23.2 31 24.6 30 25.8 28.7 26.8 27.3 27.6 25.6 28.2 23.8 28.5 21.7 28.7 19.5 28.6 17.2 28.3 14.7 27.8 12.1 27.1 9.4 26.2 6.7 25.1 3.9 23.8 1 22.3 -1.8 20.7 -4.6 18.9 -7.4 16.9 -10.2 14.8 -12.8 12.6 -15.4 10.3 -17.8 7.9 -20.1 5.5 -22.3 3 -24.3 0.5 -26.1 -2 -27.7 -4.5 -29.1 -6.9 -30.2 -9.3 -31.2 -11.6 -31.9 -13.9 -32.4 -16 -32.6 -18 -32.5 -19.9 -32.3 -21.6 -31.7 -23.2 -31 -24.6 -30 -25.8 -28.7 -26.8 -27.3 -27.6 -25.6 -28.2 -23.8 -28.5 -21.7 -28.7 -19.5 -28.6 -17.2 -28.3 -14.7 -27.8 -12.1 -27.1 -9.4 -26.2 -6.7 -25.1 -3.9 -23.8 -1 -22.3 1.8 -20.7 4.6 -18.9 7.4 -16.9 10.2 -14.8z" stroke-dasharray="0.1 1.9" stroke-width="1.55"/>
<path d="M14.2 -14 16.9 -11.5 19.5 -9 22 -6.4 24.2 -3.8 26.3 -1.1 28.2 1.6 29.9 4.2 31.3 6.9 32.5 9.5 33.5 12 34.2 14.4 34.6 16.7 34.8 18.9 34.7 20.9 34.4 22.8 33.8 24.5 32.9 26 31.8 27.3 30.4 28.5 28.8 29.4 27 30 25 30.5 22.8 30.7 20.4 30.7 17.9 30.4 15.2 29.9 12.4 29.2 9.5 28.3 6.6 27.1 3.6 25.8 0.5 24.2 -2.5 22.5 -5.5 20.6 -8.5 18.5 -11.4 16.3 -14.2 14 -16.9 11.5 -19.5 9 -22 6.4 -24.2 3.8 -26.3 1.1 -28.2 -1.6 -29.9 -4.2 -31.3 -6.9 -32.5 -9.5 -33.5 -12 -34.2 -14.4 -34.6 -16.7 -34.8 -18.9 -34.7 -20.9 -34.4 -22.8 -33.8 -24.5 -32.9 -26 -31.8 -27.3 -30.4 -28.5 -28.8 -29.4 -27 -30 -25 -30.5 -22.8 -30.7 -20.4 -30.7 -17.9 -30.4 -15.2 -29.9 -12.4 -29.2 -9.5 -28.3 -6.6 -27.1 -3.6 -25.8 -0.5 -24.2 2.5 -22.5 5.5 -20.6 8.5 -18.5 11.4 -16.3z" stroke-dasharray="0.1 1.9" stroke-width="1.55"/>
<path d="M15.7 -15.4 18.5 -12.9 21.3 -10.2 23.8 -7.4 26.2 -4.6 28.3 -1.8 30.3 1 32 3.9 33.5 6.7 34.7 9.4 35.7 12.1 36.4 14.7 36.8 17.2 36.9 19.6 36.8 21.8 36.4 23.8 35.7 25.7 34.7 27.3 33.4 28.8 31.9 30 30.2 31 28.2 31.8 26.1 32.3 23.7 32.6 21.1 32.6 18.4 32.4 15.5 32 12.6 31.2 9.5 30.3 6.3 29.1 3.1 27.7 -0.1 26.1 -3.3 24.3 -6.5 22.3 -9.6 20.2 -12.7 17.9 -15.7 15.4 -18.5 12.9 -21.3 10.2 -23.8 7.4 -26.2 4.6 -28.3 1.8 -30.3 -1 -32 -3.9 -33.5 -6.7 -34.7 -9.4 -35.7 -12.1 -36.4 -14.7 -36.8 -17.2 -36.9 -19.6 -36.8 -21.8 -36.4 -23.8 -35.7 -25.7 -34.7 -27.3 -33.4 -28.8 -31.9 -30 -30.2 -31 -28.2 -31.8 -26.1 -32.3 -23.7 -32.6 -21.1 -32.6 -18.4 -32.4 -15.5 -32 -12.6 -31.2 -9.5 -30.3 -6.3 -29.1 -3.1 -27.7 0.1 -26.1 3.3 -24.3 6.5 -22.3 9.6 -20.2 12.7 -17.9z" stroke-dasharray="0.1 1.9" stroke-width="1.55"/>
<path d="M17.2 -16.9 20.2 -14.2 23 -11.5 25.7 -8.6 28.1 -5.6 30.4 -2.7 32.4 0.4 34.1 3.4 35.6 6.3 36.9 9.3 37.8 12.1 38.5 14.9 38.8 17.5 38.9 20.1 38.7 22.4 38.2 24.6 37.4 26.6 36.3 28.4 34.9 30 33.3 31.4 31.4 32.5 29.3 33.4 26.9 34 24.4 34.4 21.6 34.5 18.7 34.3 15.7 33.9 12.5 33.2 9.2 32.3 5.9 31.1 2.5 29.7 -0.9 28 -4.2 26.2 -7.6 24.1 -10.9 21.9 -14.1 19.5 -17.2 16.9 -20.2 14.2 -23 11.5 -25.7 8.6 -28.1 5.6 -30.4 2.7 -32.4 -0.4 -34.1 -3.4 -35.6 -6.3 -36.9 -9.3 -37.8 -12.1 -38.5 -14.9 -38.8 -17.5 -38.9 -20.1 -38.7 -22.4 -38.2 -24.6 -37.4 -26.6 -36.3 -28.4 -34.9 -30 -33.3 -31.4 -31.4 -32.5 -29.3 -33.4 -26.9 -34 -24.4 -34.4 -21.6 -34.5 -18.7 -34.3 -15.7 -33.9 -12.5 -33.2 -9.2 -32.3 -5.9 -31.1 -2.5 -29.7 0.9 -28 4.2 -26.2 7.6 -24.1 10.9 -21.9 14.1 -19.5z" stroke-dasharray="0.1 1.9" stroke-width="1.55"/>
<path d="M18.8 -18.5 21.9 -15.7 24.8 -12.8 27.6 -9.8 30.1 -6.8 32.4 -3.6 34.4 -0.5 36.2 2.7 37.7 5.8 38.9 8.9 39.8 11.9 40.4 14.9 40.7 17.7 40.7 20.4 40.4 22.9 39.8 25.3 38.9 27.4 37.7 29.4 36.2 31.1 34.4 32.6 32.4 33.9 30.1 34.9 27.6 35.6 24.8 36 21.9 36.2 18.8 36.1 15.6 35.8 12.3 35.1 8.8 34.2 5.3 33 1.8 31.6 -1.8 29.9 -5.3 28.1 -8.8 25.9 -12.3 23.6 -15.6 21.2 -18.8 18.5 -21.9 15.7 -24.8 12.8 -27.6 9.8 -30.1 6.8 -32.4 3.6 -34.4 0.5 -36.2 -2.7 -37.7 -5.8 -38.9 -8.9 -39.8 -11.9 -40.4 -14.9 -40.7 -17.7 -40.7 -20.4 -40.4 -22.9 -39.8 -25.3 -38.9 -27.4 -37.7 -29.4 -36.2 -31.1 -34.4 -32.6 -32.4 -33.9 -30.1 -34.9 -27.6 -35.6 -24.8 -36 -21.9 -36.2 -18.8 -36.1 -15.6 -35.8 -12.3 -35.1 -8.8 -34.2 -5.3 -33 -1.8 -31.6 1.8 -29.9 5.3 -28.1 8.8 -25.9 12.3 -23.6 15.6 -21.2z" stroke-dasharray="0.1 1.9" stroke-width="1.55"/>
<path d="M20.5 -20.2 23.7 -17.3 26.7 -14.3 29.5 -11.2 32 -8 34.4 -4.8 36.4 -1.5 38.2 1.8 39.7 5.1 40.9 8.4 41.7 11.6 42.3 14.7 42.5 17.7 42.4 20.5 42 23.2 41.3 25.7 40.2 28.1 38.9 30.2 37.2 32 35.3 33.7 33.1 35.1 30.7 36.2 28 37 25.1 37.6 22 37.8 18.7 37.8 15.3 37.5 11.8 36.9 8.2 36.1 4.5 34.9 0.8 33.5 -2.9 31.8 -6.6 29.9 -10.2 27.8 -13.8 25.5 -17.2 22.9 -20.5 20.2 -23.7 17.3 -26.7 14.3 -29.5 11.2 -32 8 -34.4 4.8 -36.4 1.5 -38.2 -1.8 -39.7 -5.1 -40.9 -8.4 -41.7 -11.6 -42.3 -14.7 -42.5 -17.7 -42.4 -20.5 -42 -23.2 -41.3 -25.7 -40.2 -28.1 -38.9 -30.2 -37.2 -32 -35.3 -33.7 -33.1 -35.1 -30.7 -36.2 -28 -37 -25.1 -37.6 -22 -37.8 -18.7 -37.8 -15.3 -37.5 -11.8 -36.9 -8.2 -36.1 -4.5 -34.9 -0.8 -33.5 2.9 -31.8 6.6 -29.9 10.2 -27.8 13.8 -25.5 17.2 -22.9z" stroke-dasharray="0.1 1.9" stroke-width="1.55"/>
<path d="M22.3 -22 25.6 -19 28.6 -15.9 31.4 -12.7 34 -9.4 36.3 -6.1 38.4 -2.6 40.2 0.8 41.6 4.2 42.7 7.6 43.5 11 44 14.3 44.2 17.4 44 20.4 43.4 23.3 42.6 26 41.4 28.5 39.9 30.7 38.1 32.8 36 34.6 33.6 36.1 31 37.3 28.2 38.3 25.1 39 21.8 39.4 18.4 39.4 14.8 39.2 11.1 38.7 7.4 37.9 3.6 36.8 -0.3 35.4 -4.1 33.8 -8 31.8 -11.7 29.7 -15.4 27.3 -18.9 24.7 -22.3 22 -25.6 19 -28.6 15.9 -31.4 12.7 -34 9.4 -36.3 6.1 -38.4 2.6 -40.2 -0.8 -41.6 -4.2 -42.7 -7.6 -43.5 -11 -44 -14.3 -44.2 -17.4 -44 -20.4 -43.4 -23.3 -42.6 -26 -41.4 -28.5 -39.9 -30.7 -38.1 -32.8 -36 -34.6 -33.6 -36.1 -31 -37.3 -28.2 -38.3 -25.1 -39 -21.8 -39.4 -18.4 -39.4 -14.8 -39.2 -11.1 -38.7 -7.4 -37.9 -3.6 -36.8 0.3 -35.4 4.1 -33.8 8 -31.8 11.7 -29.7 15.4 -27.3 18.9 -24.7z" stroke-dasharray="0.1 1.9" stroke-width="1.55"/>
<path d="M24.2 -23.8 27.5 -20.8 30.6 -17.7 33.4 -14.4 36 -11 38.3 -7.5 40.4 -4 42.1 -0.4 43.5 3.2 44.5 6.7 45.2 10.2 45.6 13.6 45.7 17 45.3 20.1 44.7 23.2 43.7 26 42.4 28.7 40.7 31.1 38.7 33.3 36.5 35.3 33.9 37 31.1 38.4 28.1 39.5 24.9 40.3 21.4 40.8 17.8 41 14.1 40.8 10.3 40.4 6.3 39.7 2.4 38.6 -1.6 37.3 -5.6 35.7 -9.5 33.8 -13.4 31.6 -17.1 29.2 -20.8 26.6 -24.2 23.8 -27.5 20.8 -30.6 17.7 -33.4 14.4 -36 11 -38.3 7.5 -40.4 4 -42.1 0.4 -43.5 -3.2 -44.5 -6.7 -45.2 -10.2 -45.6 -13.6 -45.7 -17 -45.3 -20.1 -44.7 -23.2 -43.7 -26 -42.4 -28.7 -40.7 -31.1 -38.7 -33.3 -36.5 -35.3 -33.9 -37 -31.1 -38.4 -28.1 -39.5 -24.9 -40.3 -21.4 -40.8 -17.8 -41 -14.1 -40.8 -10.3 -40.4 -6.3 -39.7 -2.4 -38.6 1.6 -37.3 5.6 -35.7 9.5 -33.8 13.4 -31.6 17.1 -29.2 20.8 -26.6z" stroke-dasharray="0.1 1.9" stroke-width="1.55"/>
<path d="M26.2 -25.8 29.5 -22.7 32.6 -19.5 35.5 -16.2 38 -12.7 40.3 -9.1 42.3 -5.5 43.9 -1.8 45.3 1.9 46.2 5.6 46.9 9.2 47.1 12.8 47 16.3 46.6 19.6 45.8 22.8 44.6 25.9 43.1 28.7 41.3 31.3 39.2 33.7 36.7 35.8 34 37.7 31 39.2 27.8 40.5 24.4 41.4 20.8 42.1 17 42.4 13.1 42.4 9.1 42.1 5.1 41.4 1 40.4 -3.1 39.2 -7.2 37.6 -11.3 35.8 -15.2 33.6 -19 31.2 -22.7 28.6 -26.2 25.8 -29.5 22.7 -32.6 19.5 -35.5 16.2 -38 12.7 -40.3 9.1 -42.3 5.5 -43.9 1.8 -45.3 -1.9 -46.2 -5.6 -46.9 -9.2 -47.1 -12.8 -47 -16.3 -46.6 -19.6 -45.8 -22.8 -44.6 -25.9 -43.1 -28.7 -41.3 -31.3 -39.2 -33.7 -36.7 -35.8 -34 -37.7 -31 -39.2 -27.8 -40.5 -24.4 -41.4 -20.8 -42.1 -17 -42.4 -13.1 -42.4 -9.1 -42.1 -5.1 -41.4 -1 -40.4 3.1 -39.2 7.2 -37.6 11.3 -35.8 15.2 -33.6 19 -31.2 22.7 -28.6z" stroke-dasharray="0.1 1.9" stroke-width="1.55"/>
<path d="M28.3 -27.9 31.7 -24.8 34.7 -21.5 37.6 -18.1 40.1 -14.6 42.3 -10.9 44.2 -7.2 45.8 -3.4 47 0.4 47.9 4.3 48.4 8 48.5 11.8 48.2 15.4 47.6 18.9 46.7 22.3 45.3 25.5 43.7 28.5 41.7 31.3 39.4 33.9 36.7 36.2 33.8 38.2 30.7 39.9 27.3 41.3 23.7 42.5 19.9 43.3 16 43.7 11.9 43.8 7.8 43.6 3.6 43.1 -0.6 42.2 -4.9 41.1 -9 39.6 -13.2 37.8 -17.2 35.7 -21.1 33.3 -24.8 30.7 -28.3 27.9 -31.7 24.8 -34.7 21.5 -37.6 18.1 -40.1 14.6 -42.3 10.9 -44.2 7.2 -45.8 3.4 -47 -0.4 -47.9 -4.3 -48.4 -8 -48.5 -11.8 -48.2 -15.4 -47.6 -18.9 -46.7 -22.3 -45.3 -25.5 -43.7 -28.5 -41.7 -31.3 -39.4 -33.9 -36.7 -36.2 -33.8 -38.2 -30.7 -39.9 -27.3 -41.3 -23.7 -42.5 -19.9 -43.3 -16 -43.7 -11.9 -43.8 -7.8 -43.6 -3.6 -43.1 0.6 -42.2 4.9 -41.1 9 -39.6 13.2 -37.8 17.2 -35.7 21.1 -33.3 24.8 -30.7z" stroke-dasharray="0.1 1.9" stroke-width="1.55"/>
<path d="M30.5 -30 33.8 -27 36.9 -23.7 39.6 -20.3 42.1 -16.7 44.2 -13 46 -9.2 47.5 -5.3 48.6 -1.4 49.3 2.6 49.6 6.5 49.6 10.4 49.2 14.2 48.4 17.8 47.2 21.4 45.7 24.8 43.9 28 41.7 30.9 39.1 33.7 36.3 36.2 33.2 38.4 29.9 40.3 26.3 41.9 22.6 43.2 18.6 44.2 14.5 44.8 10.4 45.1 6.1 45.1 1.8 44.7 -2.6 43.9 -6.9 42.8 -11.1 41.5 -15.3 39.7 -19.4 37.7 -23.3 35.4 -27 32.9 -30.5 30 -33.8 27 -36.9 23.7 -39.6 20.3 -42.1 16.7 -44.2 13 -46 9.2 -47.5 5.3 -48.6 1.4 -49.3 -2.6 -49.6 -6.5 -49.6 -10.4 -49.2 -14.2 -48.4 -17.8 -47.2 -21.4 -45.7 -24.8 -43.9 -28 -41.7 -30.9 -39.1 -33.7 -36.3 -36.2 -33.2 -38.4 -29.9 -40.3 -26.3 -41.9 -22.6 -43.2 -18.6 -44.2 -14.5 -44.8 -10.4 -45.1 -6.1 -45.1 -1.8 -44.7 2.6 -43.9 6.9 -42.8 11.1 -41.5 15.3 -39.7 19.4 -37.7 23.3 -35.4 27 -32.9z" stroke-dasharray="0.1 1.9" stroke-width="1.55"/>
<path d="M32.9 -32.3 36.1 -29.3 39.1 -26.1 41.8 -22.6 44.1 -19 46.2 -15.2 47.8 -11.3 49.1 -7.4 50.1 -3.3 50.6 0.7 50.8 4.7 50.6 8.8 50 12.7 49 16.5 47.6 20.3 45.9 23.8 43.8 27.2 41.4 30.4 38.7 33.3 35.7 36 32.4 38.4 28.9 40.6 25.1 42.4 21.2 43.9 17.1 45 12.9 45.8 8.5 46.3 4.1 46.4 -0.3 46.2 -4.7 45.6 -9.1 44.7 -13.4 43.4 -17.7 41.8 -21.7 39.9 -25.7 37.6 -29.4 35.1 -32.9 32.3 -36.1 29.3 -39.1 26.1 -41.8 22.6 -44.1 19 -46.2 15.2 -47.8 11.3 -49.1 7.4 -50.1 3.3 -50.6 -0.7 -50.8 -4.7 -50.6 -8.8 -50 -12.7 -49 -16.5 -47.6 -20.3 -45.9 -23.8 -43.8 -27.2 -41.4 -30.4 -38.7 -33.3 -35.7 -36 -32.4 -38.4 -28.9 -40.6 -25.1 -42.4 -21.2 -43.9 -17.1 -45 -12.9 -45.8 -8.5 -46.3 -4.1 -46.4 0.3 -46.2 4.7 -45.6 9.1 -44.7 13.4 -43.4 17.7 -41.8 21.7 -39.9 25.7 -37.6 29.4 -35.1z" stroke-dasharray="0.1 1.9" stroke-width="1.55"/>
<path d="M35.3 -34.7 38.5 -31.7 41.4 -28.5 44 -25 46.3 -21.4 48.2 -17.6 49.7 -13.6 50.9 -9.6 51.7 -5.5 52 -1.3 52 2.9 51.6 7 50.8 11.1 49.6 15.1 48 19 46.1 22.8 43.8 26.4 41.2 29.8 38.2 32.9 35 35.8 31.5 38.4 27.8 40.8 23.8 42.8 19.7 44.5 15.4 45.9 11.1 46.9 6.6 47.5 2 47.8 -2.5 47.8 -7 47.3 -11.5 46.5 -15.9 45.4 -20.1 43.9 -24.2 42.1 -28.2 39.9 -31.9 37.5 -35.3 34.7 -38.5 31.7 -41.4 28.5 -44 25 -46.3 21.4 -48.2 17.6 -49.7 13.6 -50.9 9.6 -51.7 5.5 -52 1.3 -52 -2.9 -51.6 -7 -50.8 -11.1 -49.6 -15.1 -48 -19 -46.1 -22.8 -43.8 -26.4 -41.2 -29.8 -38.2 -32.9 -35 -35.8 -31.5 -38.4 -27.8 -40.8 -23.8 -42.8 -19.7 -44.5 -15.4 -45.9 -11.1 -46.9 -6.6 -47.5 -2 -47.8 2.5 -47.8 7 -47.3 11.5 -46.5 15.9 -45.4 20.1 -43.9 24.2 -42.1 28.2 -39.9 31.9 -37.5z" stroke-dasharray="0.1 1.9" stroke-width="1.55"/>
<path d="M37.9 -37.3 41.1 -34.3 43.9 -31.1 46.4 -27.6 48.5 -24 50.3 -20.1 51.7 -16.1 52.7 -12 53.3 -7.7 53.5 -3.4 53.3 0.9 52.6 5.2 51.6 9.4 50.2 13.6 48.4 17.7 46.2 21.7 43.7 25.5 40.9 29.1 37.7 32.4 34.2 35.6 30.5 38.4 26.6 41 22.4 43.2 18.1 45.2 13.7 46.7 9.1 48 4.5 48.8 -0.2 49.3 -4.8 49.4 -9.5 49.2 -14 48.5 -18.5 47.5 -22.8 46.1 -26.9 44.4 -30.8 42.4 -34.5 40 -37.9 37.3 -41.1 34.3 -43.9 31.1 -46.4 27.6 -48.5 24 -50.3 20.1 -51.7 16.1 -52.7 12 -53.3 7.7 -53.5 3.4 -53.3 -0.9 -52.6 -5.2 -51.6 -9.4 -50.2 -13.6 -48.4 -17.7 -46.2 -21.7 -43.7 -25.5 -40.9 -29.1 -37.7 -32.4 -34.2 -35.6 -30.5 -38.4 -26.6 -41 -22.4 -43.2 -18.1 -45.2 -13.7 -46.7 -9.1 -48 -4.5 -48.8 0.2 -49.3 4.8 -49.4 9.5 -49.2 14 -48.5 18.5 -47.5 22.8 -46.1 26.9 -44.4 30.8 -42.4 34.5 -40z" stroke-dasharray="0.1 1.9" stroke-width="1.55"/>
<path d="M40.7 -40 43.7 -37 46.5 -33.8 48.9 -30.4 50.9 -26.7 52.5 -22.8 53.7 -18.7 54.6 -14.5 55 -10.1 55 -5.7 54.5 -1.3 53.7 3.2 52.4 7.6 50.8 12 48.7 16.3 46.3 20.5 43.6 24.5 40.5 28.3 37.1 31.9 33.4 35.3 29.4 38.3 25.3 41.1 20.9 43.6 16.4 45.8 11.8 47.6 7 49.1 2.2 50.1 -2.6 50.8 -7.3 51.1 -12.1 51 -16.7 50.6 -21.2 49.7 -25.5 48.5 -29.7 46.9 -33.6 44.9 -37.3 42.6 -40.7 40 -43.7 37 -46.5 33.8 -48.9 30.4 -50.9 26.7 -52.5 22.8 -53.7 18.7 -54.6 14.5 -55 10.1 -55 5.7 -54.5 1.3 -53.7 -3.2 -52.4 -7.6 -50.8 -12 -48.7 -16.3 -46.3 -20.5 -43.6 -24.5 -40.5 -28.3 -37.1 -31.9 -33.4 -35.3 -29.4 -38.3 -25.3 -41.1 -20.9 -43.6 -16.4 -45.8 -11.8 -47.6 -7 -49.1 -2.2 -50.1 2.6 -50.8 7.3 -51.1 12.1 -51 16.7 -50.6 21.2 -49.7 25.5 -48.5 29.7 -46.9 33.6 -44.9 37.3 -42.6z" stroke-dasharray="0.1 1.9" stroke-width="1.55"/>
<path d="M43.5 -42.8 46.5 -39.9 49.2 -36.7 51.5 -33.2 53.3 -29.5 54.8 -25.6 55.9 -21.4 56.5 -17.1 56.7 -12.7 56.5 -8.2 55.8 -3.6 54.7 1.1 53.2 5.7 51.3 10.3 49 14.7 46.4 19.1 43.3 23.4 40 27.4 36.3 31.3 32.4 34.9 28.2 38.2 23.8 41.3 19.3 44 14.5 46.4 9.7 48.5 4.8 50.2 -0.1 51.5 -5.1 52.4 -10 52.9 -14.8 53 -19.5 52.7 -24.1 52 -28.5 50.9 -32.6 49.4 -36.6 47.6 -40.2 45.4 -43.5 42.8 -46.5 39.9 -49.2 36.7 -51.5 33.2 -53.3 29.5 -54.8 25.6 -55.9 21.4 -56.5 17.1 -56.7 12.7 -56.5 8.2 -55.8 3.6 -54.7 -1.1 -53.2 -5.7 -51.3 -10.3 -49 -14.7 -46.4 -19.1 -43.3 -23.4 -40 -27.4 -36.3 -31.3 -32.4 -34.9 -28.2 -38.2 -23.8 -41.3 -19.3 -44 -14.5 -46.4 -9.7 -48.5 -4.8 -50.2 0.1 -51.5 5.1 -52.4 10 -52.9 14.8 -53 19.5 -52.7 24.1 -52 28.5 -50.9 32.6 -49.4 36.6 -47.6 40.2 -45.4z" stroke-dasharray="0.1 1.9" stroke-width="1.55"/>
<path d="M46.6 -45.8 49.5 -42.9 52 -39.8 54.2 -36.3 55.9 -32.5 57.2 -28.6 58.1 -24.3 58.5 -20 58.5 -15.4 58 -10.7 57.1 -6 55.8 -1.2 54 3.6 51.9 8.4 49.3 13.1 46.4 17.7 43.1 22.2 39.4 26.5 35.5 30.6 31.3 34.4 26.9 38.1 22.3 41.4 17.5 44.4 12.5 47 7.5 49.4 2.4 51.3 -2.7 52.8 -7.8 54 -12.8 54.7 -17.8 55 -22.6 54.9 -27.2 54.4 -31.6 53.5 -35.8 52.1 -39.7 50.4 -43.3 48.3 -46.6 45.8 -49.5 42.9 -52 39.8 -54.2 36.3 -55.9 32.5 -57.2 28.6 -58.1 24.3 -58.5 20 -58.5 15.4 -58 10.7 -57.1 6 -55.8 1.2 -54 -3.6 -51.9 -8.4 -49.3 -13.1 -46.4 -17.7 -43.1 -22.2 -39.4 -26.5 -35.5 -30.6 -31.3 -34.4 -26.9 -38.1 -22.3 -41.4 -17.5 -44.4 -12.5 -47 -7.5 -49.4 -2.4 -51.3 2.7 -52.8 7.8 -54 12.8 -54.7 17.8 -55 22.6 -54.9 27.2 -54.4 31.6 -53.5 35.8 -52.1 39.7 -50.4 43.3 -48.3z" stroke-dasharray="0.1 1.9" stroke-width="1.55"/>
<path d="M49.7 -48.9 52.5 -46.1 55 -43 57 -39.5 58.6 -35.7 59.7 -31.7 60.4 -27.4 60.6 -23 60.3 -18.3 59.6 -13.5 58.5 -8.6 56.9 -3.6 54.8 1.3 52.4 6.3 49.5 11.3 46.3 16.1 42.7 20.8 38.8 25.4 34.6 29.8 30.1 33.9 25.4 37.8 20.6 41.4 15.5 44.7 10.3 47.6 5.1 50.2 -0.2 52.4 -5.5 54.2 -10.7 55.6 -15.8 56.6 -20.9 57.1 -25.8 57.2 -30.4 56.9 -34.9 56.1 -39.1 54.9 -43 53.3 -46.5 51.3 -49.7 48.9 -52.5 46.1 -55 43 -57 39.5 -58.6 35.7 -59.7 31.7 -60.4 27.4 -60.6 23 -60.3 18.3 -59.6 13.5 -58.5 8.6 -56.9 3.6 -54.8 -1.3 -52.4 -6.3 -49.5 -11.3 -46.3 -16.1 -42.7 -20.8 -38.8 -25.4 -34.6 -29.8 -30.1 -33.9 -25.4 -37.8 -20.6 -41.4 -15.5 -44.7 -10.3 -47.6 -5.1 -50.2 0.2 -52.4 5.5 -54.2 10.7 -55.6 15.8 -56.6 20.9 -57.1 25.8 -57.2 30.4 -56.9 34.9 -56.1 39.1 -54.9 43 -53.3 46.5 -51.3z" stroke-dasharray="0.1 1.9" stroke-width="1.55"/>
<path d="M53 -52.1 55.8 -49.4 58.1 -46.3 59.9 -42.9 61.3 -39.1 62.3 -35.1 62.7 -30.7 62.7 -26.2 62.2 -21.4 61.2 -16.5 59.8 -11.4 57.9 -6.3 55.6 -1.1 52.8 4.1 49.7 9.3 46.1 14.4 42.3 19.4 38 24.2 33.6 28.9 28.8 33.3 23.8 37.5 18.7 41.4 13.4 45 8 48.2 2.5 51.1 -2.9 53.6 -8.4 55.6 -13.8 57.3 -19.1 58.5 -24.2 59.3 -29.2 59.6 -33.9 59.5 -38.4 58.9 -42.6 57.8 -46.4 56.4 -49.9 54.5 -53 52.1 -55.8 49.4 -58.1 46.3 -59.9 42.9 -61.3 39.1 -62.3 35.1 -62.7 30.7 -62.7 26.2 -62.2 21.4 -61.2 16.5 -59.8 11.4 -57.9 6.3 -55.6 1.1 -52.8 -4.1 -49.7 -9.3 -46.1 -14.4 -42.3 -19.4 -38 -24.2 -33.6 -28.9 -28.8 -33.3 -23.8 -37.5 -18.7 -41.4 -13.4 -45 -8 -48.2 -2.5 -51.1 2.9 -53.6 8.4 -55.6 13.8 -57.3 19.1 -58.5 24.2 -59.3 29.2 -59.6 33.9 -59.5 38.4 -58.9 42.6 -57.8 46.4 -56.4 49.9 -54.5z" stroke-dasharray="0.1 1.9" stroke-width="1.55"/>
<path d="M56.5 -55.6 59.1 -52.9 61.3 -49.9 63 -46.5 64.2 -42.7 64.9 -38.6 65.1 -34.2 64.9 -29.6 64.1 -24.7 62.9 -19.6 61.1 -14.4 58.9 -9.1 56.3 -3.7 53.2 1.7 49.7 7.2 45.9 12.5 41.7 17.8 37.2 22.9 32.4 27.8 27.3 32.6 22 37.1 16.6 41.3 11.1 45.2 5.4 48.7 -0.2 51.9 -5.9 54.7 -11.6 57.1 -17.1 59 -22.5 60.5 -27.8 61.5 -32.8 62.1 -37.6 62.1 -42.1 61.8 -46.2 60.9 -50.1 59.6 -53.5 57.8 -56.5 55.6 -59.1 52.9 -61.3 49.9 -63 46.5 -64.2 42.7 -64.9 38.6 -65.1 34.2 -64.9 29.6 -64.1 24.7 -62.9 19.6 -61.1 14.4 -58.9 9.1 -56.3 3.7 -53.2 -1.7 -49.7 -7.2 -45.9 -12.5 -41.7 -17.8 -37.2 -22.9 -32.4 -27.8 -27.3 -32.6 -22 -37.1 -16.6 -41.3 -11.1 -45.2 -5.4 -48.7 0.2 -51.9 5.9 -54.7 11.6 -57.1 17.1 -59 22.5 -60.5 27.8 -61.5 32.8 -62.1 37.6 -62.1 42.1 -61.8 46.2 -60.9 50.1 -59.6 53.5 -57.8z" stroke-dasharray="0.1 1.9" stroke-width="1.55"/>
</g>
<path d="M742 643.6 V312.9 a2.5 2.5 0 0 1 2.5 -2.5 H1075.1 a2.5 2.5 0 0 1 2.5 2.5 V643.6 z" fill="url(#glass)"/>
<path d="M742.5 326.3 V313.3 a2.5 2.5 0 0 1 2.5 -2.5 H1074.5 a2.5 2.5 0 0 1 2.5 2.5 V326.3 z" fill="url(#tg)"/>
<path d="M743.2 642.1 V313.9 a2 2 0 0 1 2 -2 H1074.1" fill="none" stroke="#fff" stroke-opacity=".55" stroke-width=".8"/>
<path d="M742.45 313.35 a2.5 2.5 0 0 1 2.5 -2.5 H1074.65 a2.5 2.5 0 0 1 2.5 2.5" fill="none" stroke="#686d74" stroke-width="0.9"/>
<path d="M742.43 312.9 V643.6" stroke="#8d939a" stroke-width="0.85" fill="none"/>
<path d="M1076.98 312.9 V643.6" stroke="#5b8398" stroke-width="1.23" fill="none"/>
<path d="M742.5 642.94 H1077.1" stroke="#78cce0" stroke-width="1.33" fill="none"/>
<rect x="748" y="315.4" width="8.3" height="8.3" fill="#111" />
<ellipse cx="752.15" cy="319.55" rx="3.49" ry="2.82" fill="url(#icg)"/>
<text x="758.8" y="322.4" font-size="6.7" fill="#111" textLength="128" lengthAdjust="spacingAndGlyphs" >32: Detector Plane Image with Astigmatism</text>
<rect x="1017" y="315.4" width="17.5" height="9.2" rx="1.4" fill="url(#btn)" stroke="#6f87a6" stroke-width="0.7"/>
<rect x="1017.7" y="316.1" width="16.1" height="7.8" rx="0.98" fill="none" stroke="#fff" stroke-opacity=".6" stroke-width="0.5"/>
<rect x="1023.45" y="320.22" width="4.61" height="1.73" rx="0.58" fill="#fff" stroke="#4a5a70" stroke-width="0.43"/>
<rect x="1036" y="315.4" width="16.5" height="9.2" rx="1.4" fill="url(#btn)" stroke="#6f87a6" stroke-width="0.7"/>
<rect x="1036.7" y="316.1" width="15.1" height="7.8" rx="0.98" fill="none" stroke="#fff" stroke-opacity=".6" stroke-width="0.5"/>
<rect x="1042.23" y="318.2" width="4.03" height="3.31" rx="0.58" fill="#fff" stroke="#4a5a70" stroke-width="0.43"/>
<rect x="1043.31" y="319.28" width="1.87" height="1.15" fill="#5a6a85"/>
<rect x="1054.5" y="315.4" width="18" height="9.2" rx="1.4" fill="url(#cls)" stroke="#7a3a30" stroke-width="0.7"/>
<rect x="1055.2" y="316.1" width="16.6" height="7.8" rx="0.98" fill="none" stroke="#fff" stroke-opacity=".45" stroke-width="0.5"/>
<path d="M1061.84 318.54L1065.16 321.86M1065.16 318.54L1061.84 321.86" stroke="#5a2a25" stroke-width="1.87" stroke-linecap="round"/>
<path d="M1061.84 318.54L1065.16 321.86M1065.16 318.54L1061.84 321.86" stroke="#fff" stroke-width="1.08" stroke-linecap="round"/>
<rect x="746" y="326.3" width="327.6" height="11.5" fill="#fdeca6" />
<rect x="746" y="337.8" width="327.6" height="300.6" fill="#f0f0f0" />
<line x1="746" y1="337.9" x2="1073.6" y2="337.9" stroke="#8a8a8a" stroke-width="0.7" />
<text x="910.6" y="334" font-size="6.2" fill="#222" text-anchor="middle" textLength="57" lengthAdjust="spacingAndGlyphs" >Chromatic Fields Set</text>
<text x="910.2" y="354.8" font-size="8.9" fill="#333" text-anchor="middle" textLength="159" lengthAdjust="spacingAndGlyphs" >Data for Wavelength of 532 nm  [(V/m)²]</text>
<rect x="797.7" y="367.8" width="216.3" height="215.4" fill="#06468b" />
<clipPath id="c6"><rect x="797.7" y="367.8" width="216.3" height="215.4"/></clipPath><g clip-path="url(#c6)">
<g opacity=".55" fill="#003b79" filter="url(#b2)">
<rect x="880.55" y="362.8" width="53.31" height="225.4"/>
<rect x="792.7" y="450.2" width="226.3" height="52.65"/>
</g>
<clipPath id="q60"><path d="M831.66 384.55 L873.42 384.55 A4.75 4.79 0 0 1 878.18 389.34 L878.18 422.85 A29.2 25.64 0 0 1 848.97 448.49 L823.51 448.49 A10.19 10.26 0 0 1 813.32 438.23 L813.32 403.02 A18.34 18.46 0 0 1 831.66 384.55 z"/></clipPath>
<path d="M831.66 384.55 L873.42 384.55 A4.75 4.79 0 0 1 878.18 389.34 L878.18 422.85 A29.2 25.64 0 0 1 848.97 448.49 L823.51 448.49 A10.19 10.26 0 0 1 813.32 438.23 L813.32 403.02 A18.34 18.46 0 0 1 831.66 384.55 z" fill="#2a6aaa" fill-opacity=".08"/>
<clipPath id="q61"><path d="M943.03 383.53 L976.99 383.53 A24.79 29.4 0 0 1 1001.78 412.93 L1001.78 443.02 A5.43 5.47 0 0 1 996.34 448.49 L960.35 448.49 A24.79 30.77 0 0 1 935.56 417.72 L935.56 391.05 A7.47 7.52 0 0 1 943.03 383.53 z"/></clipPath>
<path d="M943.03 383.53 L976.99 383.53 A24.79 29.4 0 0 1 1001.78 412.93 L1001.78 443.02 A5.43 5.47 0 0 1 996.34 448.49 L960.35 448.49 A24.79 30.77 0 0 1 935.56 417.72 L935.56 391.05 A7.47 7.52 0 0 1 943.03 383.53 z" fill="#2a6aaa" fill-opacity=".08"/>
<clipPath id="q62"><path d="M868.67 569.52 L834.71 569.52 A24.79 29.4 0 0 1 809.92 540.12 L809.92 510.03 A5.43 5.47 0 0 1 815.36 504.56 L851.35 504.56 A24.79 30.77 0 0 1 876.14 535.33 L876.14 562 A7.47 7.52 0 0 1 868.67 569.52 z"/></clipPath>
<path d="M868.67 569.52 L834.71 569.52 A24.79 29.4 0 0 1 809.92 540.12 L809.92 510.03 A5.43 5.47 0 0 1 815.36 504.56 L851.35 504.56 A24.79 30.77 0 0 1 876.14 535.33 L876.14 562 A7.47 7.52 0 0 1 868.67 569.52 z" fill="#2a6aaa" fill-opacity=".08"/>
<clipPath id="q63"><path d="M980.04 568.5 L938.28 568.5 A4.75 4.79 0 0 1 933.52 563.71 L933.52 530.2 A29.2 25.64 0 0 1 962.73 504.56 L988.19 504.56 A10.19 10.26 0 0 1 998.38 514.82 L998.38 550.04 A18.34 18.46 0 0 1 980.04 568.5 z"/></clipPath>
<path d="M980.04 568.5 L938.28 568.5 A4.75 4.79 0 0 1 933.52 563.71 L933.52 530.2 A29.2 25.64 0 0 1 962.73 504.56 L988.19 504.56 A10.19 10.26 0 0 1 998.38 514.82 L998.38 550.04 A18.34 18.46 0 0 1 980.04 568.5 z" fill="#2a6aaa" fill-opacity=".08"/>
<g filter="url(#b07)"><g clip-path="url(#q60)">
<path d="M872.4 405.41 C873.08 416.35 873.08 424.9 869.01 433.45 C864.93 440.97 857.8 445.75 849.99 447.81" fill="none" stroke="#fff" stroke-opacity=".45" stroke-width="25.13" stroke-linecap="round" filter="url(#b5)"/>
<path d="M872.4 405.41 C873.08 416.35 873.08 424.9 869.01 433.45 C864.93 440.97 857.8 445.75 849.99 447.81" fill="none" stroke="#fff" stroke-opacity=".75" stroke-width="13.58" stroke-linecap="round" filter="url(#b3)"/>
<path d="M872.4 405.41 C873.08 416.35 873.08 424.9 869.01 433.45 C864.93 440.97 857.8 445.75 849.99 447.81" fill="none" stroke="#fff" stroke-width="8.15" stroke-linecap="round" filter="url(#b2)"/>
<path d="M828.94 448.32 L856.1 448.32" fill="none" stroke="#fff" stroke-opacity=".35" stroke-width="1.02"/>
<path d="M872.06 401.99 C876.14 401.99 878.52 404.38 878.52 408.14 L878.52 422.85 C878.52 430.03 871.72 438.92 863.91 444.04 C859.5 446.78 854.41 448.15 848.97 448.49 C854.41 446.44 858.48 442.34 860.86 437.89 C863.91 431.74 865.27 428.66 864.93 425.92 C864.25 419.77 862.22 416.35 863.91 411.22 C864.93 406.09 868.33 401.99 872.06 401.99 z" fill="#ee1a24" filter="url(#b07)"/>
<path d="M870.37 403.36 C874.1 407.8 874.1 421.48 870.37 430.03 C868.33 434.13 865.61 436.18 863.57 437.55 C866.97 426.61 861.2 412.93 870.37 403.36 z" fill="#ffd0d0" fill-opacity=".95" filter="url(#b1)"/>
</g></g>
<g filter="url(#b07)"><g clip-path="url(#q63)">
<path d="M939.3 547.64 C938.62 536.7 938.62 528.15 942.69 519.61 C946.77 512.08 953.9 507.3 961.71 505.25" fill="none" stroke="#fff" stroke-opacity=".45" stroke-width="25.13" stroke-linecap="round" filter="url(#b5)"/>
<path d="M939.3 547.64 C938.62 536.7 938.62 528.15 942.69 519.61 C946.77 512.08 953.9 507.3 961.71 505.25" fill="none" stroke="#fff" stroke-opacity=".75" stroke-width="13.58" stroke-linecap="round" filter="url(#b3)"/>
<path d="M939.3 547.64 C938.62 536.7 938.62 528.15 942.69 519.61 C946.77 512.08 953.9 507.3 961.71 505.25" fill="none" stroke="#fff" stroke-width="8.15" stroke-linecap="round" filter="url(#b2)"/>
<path d="M982.76 504.73 L955.6 504.73" fill="none" stroke="#fff" stroke-opacity=".35" stroke-width="1.02"/>
<path d="M939.64 551.06 C935.56 551.06 933.18 548.67 933.18 544.91 L933.18 530.2 C933.18 523.02 939.98 514.14 947.79 509.01 C952.2 506.27 957.29 504.9 962.73 504.56 C957.29 506.61 953.22 510.72 950.84 515.16 C947.79 521.32 946.43 524.39 946.77 527.13 C947.45 533.28 949.48 536.7 947.79 541.83 C946.77 546.96 943.37 551.06 939.64 551.06 z" fill="#ee1a24" filter="url(#b07)"/>
<path d="M941.33 549.69 C937.6 545.25 937.6 531.57 941.33 523.02 C943.37 518.92 946.09 516.87 948.13 515.5 C944.73 526.44 950.5 540.12 941.33 549.69 z" fill="#ffd0d0" fill-opacity=".95" filter="url(#b1)"/>
</g></g>
<g filter="url(#b07)"><g clip-path="url(#q61)">
<ellipse cx="960.01" cy="395.84" rx="19.02" ry="15.04" fill="#fff" fill-opacity=".9" filter="url(#b5)"/>
<path d="M968.16 386.26 C976.65 383.53 986.84 386.95 992.61 392.42 C997.7 397.89 999.74 404.38 1000.76 412.93" fill="none" stroke="#fff" stroke-opacity=".8" stroke-width="10.19" stroke-linecap="round" filter="url(#b3)"/>
<ellipse cx="963.75" cy="392.42" rx="13.58" ry="9.57" fill="#fff" filter="url(#b2)"/>
<path d="M954.24 391.73 C954.58 386.26 961.37 383.53 971.55 383.53 C981.74 383.53 995.32 390.71 1001.1 411.56 C995.32 397.55 985.82 389.68 977.67 393.1 C973.25 395.15 969.86 399.94 963.07 400.28 C957.29 400.28 953.9 397.2 954.24 391.73 z" fill="#fbcccd" filter="url(#b1)"/>
<path d="M977.67 384.55 C985.82 385.58 991.93 390.37 995.32 395.15 C998.72 399.94 1000.08 405.41 1000.76 410.2" fill="none" stroke="#f0767c" stroke-width="1.53" stroke-opacity=".75" stroke-linecap="round" filter="url(#b07)"/>
</g></g>
<g filter="url(#b07)"><g clip-path="url(#q62)">
<ellipse cx="851.69" cy="557.22" rx="19.02" ry="15.04" fill="#fff" fill-opacity=".9" filter="url(#b5)"/>
<path d="M843.54 566.79 C835.05 569.52 824.86 566.1 819.09 560.63 C814 555.16 811.96 548.67 810.94 540.12" fill="none" stroke="#fff" stroke-opacity=".8" stroke-width="10.19" stroke-linecap="round" filter="url(#b3)"/>
<ellipse cx="847.95" cy="560.63" rx="13.58" ry="9.57" fill="#fff" filter="url(#b2)"/>
<path d="M857.46 561.32 C857.12 566.79 850.33 569.52 840.15 569.52 C829.96 569.52 816.38 562.34 810.6 541.49 C816.38 555.51 825.88 563.37 834.03 559.95 C838.45 557.9 841.84 553.11 848.63 552.77 C854.41 552.77 857.8 555.85 857.46 561.32 z" fill="#fbcccd" filter="url(#b1)"/>
<path d="M834.03 568.5 C825.88 567.47 819.77 562.69 816.38 557.9 C812.98 553.11 811.62 547.64 810.94 542.86" fill="none" stroke="#f0767c" stroke-width="1.53" stroke-opacity=".75" stroke-linecap="round" filter="url(#b07)"/>
</g></g>
<path d="M813.32 403.02 A18.34 18.46 0 0 1 831.66 384.55" fill="none" stroke="#cfe2f6" stroke-opacity="0.5" stroke-width="1.8" stroke-linecap="round" filter="url(#b1)"/>
<path d="M831.66 384.55 L871.38 384.55" stroke="#dcebf8" stroke-opacity=".22" stroke-width="1"/>
<path d="M813.32 403.02 L813.32 438.57" stroke="#dcebf8" stroke-opacity=".18" stroke-width="1"/>
<path d="M878.18 387.29 L878.18 404.38" stroke="#dcebf8" stroke-opacity=".3" stroke-width="1"/>
<path d="M935.56 417.72 A24.79 30.77 0 0 0 960.35 448.49" fill="none" stroke="#cfe2f6" stroke-opacity=".5" stroke-width="1.8" filter="url(#b1)"/>
<path d="M935.56 392.42 L935.56 417.72" stroke="#dcebf8" stroke-opacity=".3" stroke-width="1"/>
<path d="M960.35 448.49 L995.32 448.49" stroke="#dcebf8" stroke-opacity=".22" stroke-width="1"/>
<path d="M1001.78 412.93 L1001.78 442.34" stroke="#dcebf8" stroke-opacity=".25" stroke-width="1"/>
<path d="M998.38 550.04 A18.34 18.46 0 0 1 980.04 568.5" fill="none" stroke="#cfe2f6" stroke-opacity="0.5" stroke-width="1.8" stroke-linecap="round" filter="url(#b1)"/>
<path d="M980.04 568.5 L940.32 568.5" stroke="#dcebf8" stroke-opacity=".22" stroke-width="1"/>
<path d="M998.38 550.04 L998.38 514.48" stroke="#dcebf8" stroke-opacity=".18" stroke-width="1"/>
<path d="M933.52 565.76 L933.52 548.67" stroke="#dcebf8" stroke-opacity=".3" stroke-width="1"/>
<path d="M876.14 535.33 A24.79 30.77 0 0 0 851.35 504.56" fill="none" stroke="#cfe2f6" stroke-opacity=".5" stroke-width="1.8" filter="url(#b1)"/>
<path d="M876.14 560.63 L876.14 535.33" stroke="#dcebf8" stroke-opacity=".3" stroke-width="1"/>
<path d="M851.35 504.56 L816.38 504.56" stroke="#dcebf8" stroke-opacity=".22" stroke-width="1"/>
<path d="M809.92 540.12 L809.92 510.72" stroke="#dcebf8" stroke-opacity=".25" stroke-width="1"/>
</g>
<path d="M819.5 583.2v2.6M862.5 583.2v2.6M905.5 583.2v2.6M948.5 583.2v2.6M991.5 583.2v2.6M797.7 561.3h-2.6M797.7 518.3h-2.6M797.7 475.3h-2.6M797.7 432.3h-2.6M797.7 389.3h-2.6M797.7 368.1h-3.2M797.7 582.9h-3.2M798 583.2v3.4M1013.7 583.2v3.4" stroke="#222" stroke-width="1" fill="none"/>
<text x="819.5" y="599.2" font-size="8.9" fill="#3a3a3a" text-anchor="middle" >-10</text>
<text x="789" y="561.3" font-size="8.9" fill="#3a3a3a" text-anchor="middle" transform="rotate(-90 789 561.3)" >-10</text>
<text x="862.5" y="599.2" font-size="8.9" fill="#3a3a3a" text-anchor="middle" >-5</text>
<text x="789" y="518.3" font-size="8.9" fill="#3a3a3a" text-anchor="middle" transform="rotate(-90 789 518.3)" >-5</text>
<text x="905.5" y="599.2" font-size="8.9" fill="#3a3a3a" text-anchor="middle" >0</text>
<text x="789" y="475.3" font-size="8.9" fill="#3a3a3a" text-anchor="middle" transform="rotate(-90 789 475.3)" >0</text>
<text x="948.5" y="599.2" font-size="8.9" fill="#3a3a3a" text-anchor="middle" >5</text>
<text x="789" y="432.3" font-size="8.9" fill="#3a3a3a" text-anchor="middle" transform="rotate(-90 789 432.3)" >5</text>
<text x="991.5" y="599.2" font-size="8.9" fill="#3a3a3a" text-anchor="middle" >10</text>
<text x="789" y="389.3" font-size="8.9" fill="#3a3a3a" text-anchor="middle" transform="rotate(-90 789 389.3)" >10</text>
<text x="904.8" y="614.8" font-size="9" fill="#3a3a3a" text-anchor="middle" textLength="28.8" lengthAdjust="spacingAndGlyphs" >X [mm]</text>
<text x="774.4" y="475.5" font-size="9" fill="#3a3a3a" text-anchor="middle" textLength="28.8" lengthAdjust="spacingAndGlyphs" transform="rotate(-90 774.4 475.5)" >Y [mm]</text>
<defs><linearGradient id="cb6" x1="0" y1="1" x2="0" y2="0"><stop offset="0" stop-color="#0a488a"/><stop offset="0.5" stop-color="#ffffff"/><stop offset="1" stop-color="#e6000e"/></linearGradient></defs>
<rect x="1021.2" y="366" width="7.6" height="219.8" fill="url(#cb6)"/>
<text x="1035" y="374" font-size="8.7" fill="#3a3a3a" textLength="29.5" lengthAdjust="spacingAndGlyphs" >0.742...</text>
<text x="1035" y="478.3" font-size="8.7" fill="#3a3a3a" textLength="29.5" lengthAdjust="spacingAndGlyphs" >0.371...</text>
<text x="1035" y="584.6" font-size="8.7" fill="#3a3a3a" textLength="32" lengthAdjust="spacingAndGlyphs" >2....E-05</text>
</svg></body></html>
